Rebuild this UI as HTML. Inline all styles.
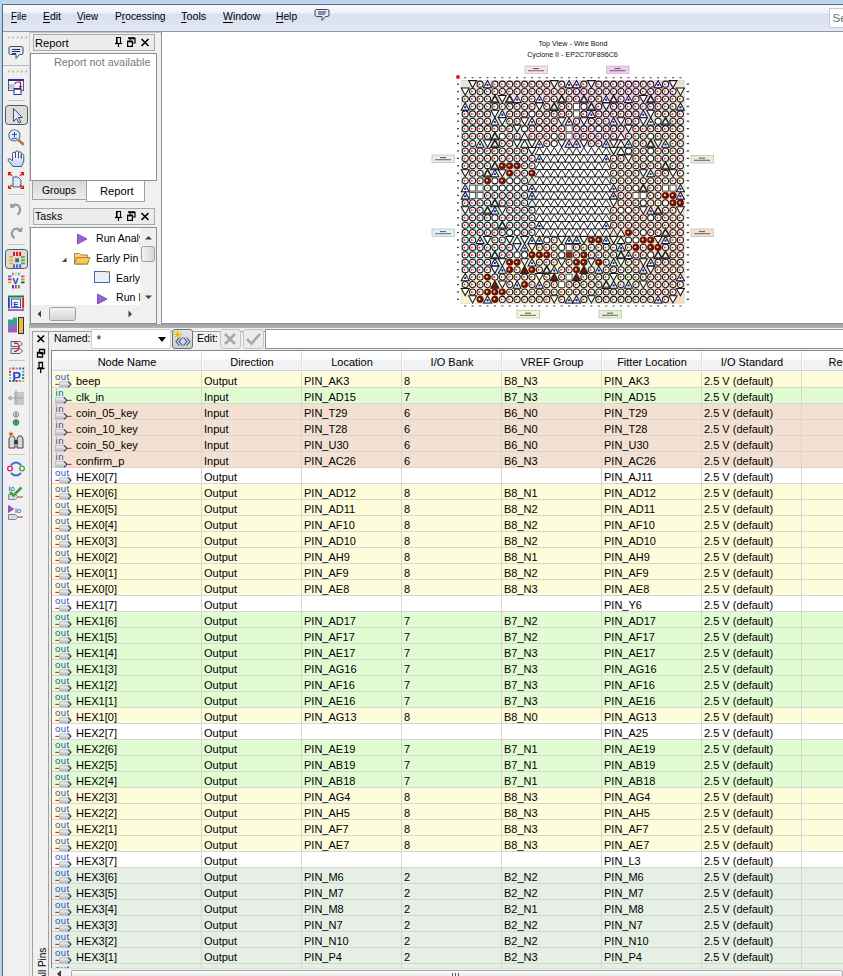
<!DOCTYPE html><html><head><meta charset="utf-8"><style>
*{box-sizing:border-box}
html,body{margin:0;padding:0}
body{width:843px;height:976px;overflow:hidden;position:relative;background:#f0f0f0;font-family:"Liberation Sans",sans-serif;font-size:11px;color:#000}
.a{position:absolute}
.t{position:absolute;white-space:nowrap;line-height:1}
</style></head><body>

<div class="a" style="left:0;top:0;width:843px;height:4px;background:linear-gradient(#b9d1ee,#c6daf1)"></div>
<div class="a" style="left:0;top:0;width:2px;height:976px;background:linear-gradient(90deg,#c3d8f0,#aac6e6)"></div>
<div class="a" style="left:2px;top:4px;width:841px;height:1px;background:#5d6a7a"></div>
<div class="a" style="left:2px;top:4px;width:1px;height:972px;background:#5d6a7a"></div>
<div class="a" style="left:3px;top:5px;width:840px;height:26px;background:linear-gradient(#f6f8fc 0,#eef1f8 8px,#d9e0f0 9px,#dde3f2 18px,#e4e9f5 26px)"></div>
<div class="a" style="left:3px;top:31px;width:840px;height:1px;background:#8e96a2"></div><div class="a" style="left:3px;top:32px;width:840px;height:1px;background:#c0c4cc"></div>
<div class="t" style="left:10.50px;top:10.87px;font-size:11.5px;transform:scaleX(0.8356);transform-origin:0.00px 0;"><u style="text-decoration-thickness:1px;text-underline-offset:2px">F</u>ile</div>
<div class="t" style="left:42.50px;top:10.87px;font-size:11.5px;transform:scaleX(0.9091);transform-origin:0.00px 0;"><u style="text-decoration-thickness:1px;text-underline-offset:2px">E</u>dit</div>
<div class="t" style="left:77.00px;top:10.87px;font-size:11.5px;transform:scaleX(0.8485);transform-origin:0.00px 0;"><u style="text-decoration-thickness:1px;text-underline-offset:2px">V</u>iew</div>
<div class="t" style="left:114.50px;top:10.87px;font-size:11.5px;transform:scaleX(0.8875);transform-origin:0.00px 0;">P<u style="text-decoration-thickness:1px;text-underline-offset:2px">r</u>ocessing</div>
<div class="t" style="left:181.10px;top:10.87px;font-size:11.5px;transform:scaleX(0.9385);transform-origin:0.00px 0;"><u style="text-decoration-thickness:1px;text-underline-offset:2px">T</u>ools</div>
<div class="t" style="left:222.80px;top:10.87px;font-size:11.5px;transform:scaleX(0.9109);transform-origin:0.00px 0;"><u style="text-decoration-thickness:1px;text-underline-offset:2px">W</u>indow</div>
<div class="t" style="left:276.30px;top:10.87px;font-size:11.5px;transform:scaleX(0.8922);transform-origin:0.00px 0;"><u style="text-decoration-thickness:1px;text-underline-offset:2px">H</u>elp</div>
<svg class="a" style="left:312px;top:7px" width="20" height="18" viewBox="312 7 20 18"><path d="M316.5 9.5 h11 a1.5 1.5 0 0 1 1.5 1.5 v4 a1.5 1.5 0 0 1 -1.5 1.5 h-2 l-3.5 4 v-4 h-5.5 a1.5 1.5 0 0 1 -1.5 -1.5 v-4 a1.5 1.5 0 0 1 1.5 -1.5z" fill="#dfe8fb" stroke="#3a4a6a" stroke-width="1"/><path d="M318 12 h8 M318 14 h7" stroke="#253555" stroke-width="1"/></svg>
<div class="a" style="left:829px;top:8px;width:20px;height:20px;background:#fff;border:1px solid #c4c9d4"></div>
<div class="t" style="left:832.50px;top:12.87px;font-size:11.5px;color:#6a6a6a;">Se</div>
<div class="a" style="left:3px;top:32px;width:27px;height:944px;background:#f0f0f0;border-right:1px solid #d0d0d0"></div>
<svg class="a" style="left:0;top:0" width="32" height="560" viewBox="0 0 32 560"><path d="M7.5 38.5 l1.5 -2 h1.2 l-1.5 2z" fill="#a0a0a0"/><path d="M11.8 38.5 l1.5 -2 h1.2 l-1.5 2z" fill="#a0a0a0"/><path d="M16.1 38.5 l1.5 -2 h1.2 l-1.5 2z" fill="#a0a0a0"/><path d="M20.4 38.5 l1.5 -2 h1.2 l-1.5 2z" fill="#a0a0a0"/><path d="M24.7 38.5 l1.5 -2 h1.2 l-1.5 2z" fill="#a0a0a0"/><rect x="3" y="65" width="26" height="1" fill="#b8b8b8"/><path d="M7.5 72.5 l1.5 -2 h1.2 l-1.5 2z" fill="#a0a0a0"/><path d="M11.8 72.5 l1.5 -2 h1.2 l-1.5 2z" fill="#a0a0a0"/><path d="M16.1 72.5 l1.5 -2 h1.2 l-1.5 2z" fill="#a0a0a0"/><path d="M20.4 72.5 l1.5 -2 h1.2 l-1.5 2z" fill="#a0a0a0"/><path d="M24.7 72.5 l1.5 -2 h1.2 l-1.5 2z" fill="#a0a0a0"/><path d="M10.5 46.5 h11 a1.5 1.5 0 0 1 1.5 1.5 v5 a1.5 1.5 0 0 1 -1.5 1.5 h-2 l-3.5 4 v-4 h-5.5 a1.5 1.5 0 0 1 -1.5 -1.5 v-5 a1.5 1.5 0 0 1 1.5 -1.5z" fill="#dfe8fb" stroke="#3a4a6a" stroke-width="1"/><path d="M12 49.5 h8 M12 51.5 h8 M12 53.5 h4" stroke="#253555" stroke-width="1"/><rect x="8.5" y="79.5" width="15" height="11" fill="#f4f6fb" stroke="#4a5a8a" stroke-width="1"/><rect x="8" y="79" width="16" height="2" fill="#1a3aa0"/><rect x="9" y="84" width="6" height="5" fill="#c8c8c8"/><rect x="14" y="88.5" width="7" height="6" fill="#fff" stroke="#1a3aa0" stroke-width="1"/><rect x="14" y="88" width="7" height="1.8" fill="#1a3aa0"/><path d="M15 84 q0 -2 3 -2 h2.5 v5" fill="none" stroke="#d0103a" stroke-width="1.2"/><path d="M18.5 86 h4 l-2 2.5z" fill="#d0103a"/><rect x="8" y="100" width="17" height="1" fill="#c8c8c8"/><rect x="5.5" y="105.5" width="22" height="19" rx="3" fill="#dcdcdc" stroke="#555" stroke-width="1"/><path d="M13.5 108.5 v13 l3 -3 l2.5 4.5 l1.8 -1 l-2.5 -4.5 h4z" fill="#dde6fa" stroke="#3a4a70" stroke-width="1"/><circle cx="14.4" cy="135.4" r="5.6" fill="#e2ecfb" stroke="#5a6c8c" stroke-width="1.1"/><path d="M19 140.5 l4 3.5" stroke="#b87838" stroke-width="2.8" stroke-linecap="round"/><path d="M12 134.4 h5 M14.5 132 v5 M12 138.4 h5" stroke="#2848c0" stroke-width="1"/><defs><linearGradient id="hg" x1="0" y1="0" x2="0" y2="1"><stop offset="0" stop-color="#ffffff"/><stop offset="1" stop-color="#c4d0f2"/></linearGradient></defs><path d="M13 166.5 L8.2 160.5 Q7.6 158.8 9.2 158.6 L12.5 160.6 V153.6 Q12.5 152.2 14 152.2 Q15.5 152.2 15.5 153.6 V158 V152.3 Q15.5 150.9 17 150.9 Q18.5 150.9 18.5 152.3 V158 V153.2 Q18.5 151.8 19.9 151.8 Q21.3 151.8 21.3 153.2 V158.5 V155.4 Q21.3 154.1 22.5 154.1 Q23.8 154.1 23.8 155.4 V161 L21.6 166.5z" fill="url(#hg)" stroke="#3c4c72" stroke-width="0.95"/><path d="M13 177 h5 l3 3 v7 h-8z" fill="#dfe7f8" stroke="#4a5a7a" stroke-width="1"/><path d="M8.5 172.5 l3.5 3.5 M8.5 172.5 h3 M8.5 172.5 v3 M23.5 172.5 l-3.5 3.5 M23.5 172.5 h-3 M23.5 172.5 v3 M8.5 188.5 l3.5 -3.5 M8.5 188.5 h3 M8.5 188.5 v-3 M23.5 188.5 l-3.5 -3.5 M23.5 188.5 h-3 M23.5 188.5 v-3" stroke="#e01010" stroke-width="1.2" fill="none"/><rect x="8" y="194" width="17" height="1" fill="#c8c8c8"/><path d="M12 206 q5 -3 7.5 1 q2 4 -2 8" fill="none" stroke="#9a9a9a" stroke-width="2.2"/><path d="M10 203 l0.5 5.5 l5 -1.5z" fill="#9a9a9a"/><path d="M20 230 q-5 -3 -7.5 1 q-2 4 2 7" fill="none" stroke="#9a9a9a" stroke-width="2.2"/><path d="M22.5 227 l-0.5 5.5 l-5 -1.5z" fill="#9a9a9a"/><rect x="8" y="244" width="17" height="1" fill="#c8c8c8"/><rect x="5.5" y="249.5" width="22" height="19" rx="3" fill="#dcdcdc" stroke="#555" stroke-width="1"/><rect x="15.2" y="258.4" width="3.8" height="3.8" fill="#5a625c"/><rect x="13.00" y="251.8" width="2" height="4.2" fill="#e41818"/><rect x="13.00" y="264.2" width="2" height="4.2" fill="#3c78e0"/><rect x="9.2" y="256.10" width="3.8" height="1.8" fill="#f4a818"/><rect x="21" y="256.10" width="3.8" height="1.8" fill="#48b048"/><rect x="16.05" y="251.8" width="2" height="4.2" fill="#e41818"/><rect x="16.05" y="264.2" width="2" height="4.2" fill="#3c78e0"/><rect x="9.2" y="259.25" width="3.8" height="1.8" fill="#f4a818"/><rect x="21" y="259.25" width="3.8" height="1.8" fill="#48b048"/><rect x="19.10" y="251.8" width="2" height="4.2" fill="#e41818"/><rect x="19.10" y="264.2" width="2" height="4.2" fill="#3c78e0"/><rect x="9.2" y="262.40" width="3.8" height="1.8" fill="#f4a818"/><rect x="21" y="262.40" width="3.8" height="1.8" fill="#48b048"/><text x="12.5" y="284" font-size="9" font-weight="bold" font-family="Liberation Sans" fill="#2030b0">V</text><rect x="12.0" y="272.5" width="1.8" height="3" fill="#c070e0"/><rect x="15.0" y="272.5" width="1.8" height="3" fill="#f0d020"/><rect x="18.0" y="272.5" width="1.8" height="3" fill="#40c0c0"/><rect x="12.0" y="285" width="1.8" height="3.5" fill="#2040c0"/><rect x="15.0" y="285" width="1.8" height="3.5" fill="#c03090"/><rect x="18.0" y="285" width="1.8" height="3.5" fill="#40a040"/><rect x="8" y="275.5" width="3.5" height="1.8" fill="#3070e0"/><rect x="21" y="275.5" width="3.5" height="1.8" fill="#e04090"/><rect x="8" y="278.5" width="3.5" height="1.8" fill="#e02020"/><rect x="21" y="278.5" width="3.5" height="1.8" fill="#b0a020"/><rect x="8" y="281.5" width="3.5" height="1.8" fill="#f0a020"/><rect x="21" y="281.5" width="3.5" height="1.8" fill="#206020"/><g transform="translate(0,1.5)"><rect x="8" y="294" width="16" height="2" fill="#208040"/><rect x="8" y="307.5" width="16" height="2" fill="#b060c0"/><rect x="8" y="296" width="1.8" height="11" fill="#2040c0"/><rect x="22.2" y="296" width="1.8" height="11" fill="#e02020"/><rect x="11.5" y="297.5" width="9" height="8.5" fill="#eef2fb" stroke="#3a50a0" stroke-width="1"/><text x="13.2" y="305" font-size="7.5" font-weight="bold" font-family="Liberation Sans" fill="#2040b0">E</text><path d="M8 318 h5 v-2 h4 v2 v6 h-3 v3 h-6z" fill="#40a090"/><path d="M8 325 h6 v-2 h3 v8 h-9z" fill="#a060c0"/><rect x="18.5" y="316" width="5" height="16" fill="#f0c020" stroke="#203070" stroke-width="1"/></g><path d="M11 341.5 h9 l2.5 2.5 l-2.5 2.5 h-9z M11 348.5 h9 l2.5 2.5 l-2.5 2.5 h-9z" fill="#e4e8f0" stroke="#506080" stroke-width="1"/><path d="M14 343 q6 0 5 4.5 q-1 4 -5 4" fill="none" stroke="#e02030" stroke-width="1.3"/><rect x="8" y="360" width="17" height="1" fill="#c8c8c8"/><text x="12.3" y="381" font-size="13" font-weight="bold" font-family="Liberation Sans" fill="#2a48c8">P</text><rect x="9.0" y="367.5" width="2" height="2" fill="#f0a020"/><rect x="9.0" y="380" width="2" height="2" fill="#3070e0"/><rect x="12.3" y="367.5" width="2" height="2" fill="#e02020"/><rect x="12.3" y="380" width="2" height="2" fill="#208040"/><rect x="15.6" y="367.5" width="2" height="2" fill="#b070e0"/><rect x="15.6" y="380" width="2" height="2" fill="#e02020"/><rect x="18.9" y="367.5" width="2" height="2" fill="#3070e0"/><rect x="18.9" y="380" width="2" height="2" fill="#40a0e0"/><rect x="22.2" y="367.5" width="2" height="2" fill="#208040"/><rect x="22.2" y="380" width="2" height="2" fill="#f0c020"/><rect x="9" y="370.8" width="2" height="2" fill="#e02020"/><rect x="22.2" y="370.8" width="2" height="2" fill="#b070e0"/><rect x="9" y="373.9" width="2" height="2" fill="#40a0e0"/><rect x="22.2" y="373.9" width="2" height="2" fill="#3070e0"/><rect x="9" y="377.0" width="2" height="2" fill="#f0c020"/><rect x="22.2" y="377.0" width="2" height="2" fill="#208040"/><rect x="14" y="392" width="10" height="13" fill="#c8c8c8"/><path d="M8 398 l3 -2 v4z M11 398 h12 M16 390 v14" stroke="#a0a0a0" stroke-width="1" fill="#d8d8d8"/><circle cx="16" cy="414.5" r="2.6" fill="#e8e8e8" stroke="#808080" stroke-width="1"/><path d="M16 413 v3" stroke="#2050c0" stroke-width="1"/><circle cx="16" cy="422.5" r="2.8" fill="#60b060" stroke="#308030" stroke-width="1"/><circle cx="16" cy="422.5" r="1" fill="#1050c0"/><path d="M9 439 l1.5 -3 h3 l1.5 3 v9 h-6z M17 439 l1.5 -3 h3 l1.5 3 v9 h-6z" fill="#d8d8d8" stroke="#404040" stroke-width="1"/><rect x="14" y="440" width="4" height="4" fill="#404040"/><path d="M9 432 l4 4 M13 432 l-4 4 M11 431 v6 M8 434 h6" stroke="#f0c020" stroke-width="1"/><circle cx="11" cy="434" r="1.3" fill="#e0207a"/><rect x="8" y="454" width="17" height="1" fill="#c8c8c8"/><path d="M11 465 q5 -5 10 0 M21 473 q-5 5 -10 0" fill="none" stroke="#3070d0" stroke-width="2"/><circle cx="10" cy="468.5" r="2.3" fill="#fff" stroke="#e0106a" stroke-width="1.3"/><circle cx="22" cy="468.5" r="2.3" fill="#fff" stroke="#40a040" stroke-width="1.3"/><text x="8.5" y="491" font-size="8" font-family="Liberation Sans" fill="#2040c0">io</text><path d="M8.5 494.5 h7 l2.5 2.5 l-2.5 2.5 h-7z" fill="#d8d8d8" stroke="#607090" stroke-width="0.8"/><path d="M18 497 h5" stroke="#e02020" stroke-width="1"/><path d="M10 492 l3.5 3.5 l8 -8" fill="none" stroke="#40a040" stroke-width="2.6"/><path d="M8.5 505.5 v7 l5 -3.5z" fill="#a050d0" stroke="#503070" stroke-width="0.6"/><text x="15" y="513" font-size="8" font-family="Liberation Sans" fill="#2040c0">io</text><path d="M8.5 514.5 h7 l2.5 2.5 l-2.5 2.5 h-7z" fill="#d8d8d8" stroke="#607090" stroke-width="0.8"/><path d="M18 517 h5" stroke="#e02020" stroke-width="1"/></svg>
<div class="a" style="left:33px;top:34px;width:122px;height:17px;background:#ececec;border:1px solid #a9a9a9"></div>
<div class="t" style="left:35.40px;top:38.07px;font-size:11.5px;transform:scaleX(0.9739);transform-origin:0.00px 0;">Report</div>
<svg class="a" style="left:110px;top:33px" width="45" height="18" viewBox="110 33 45 18"><path d="M116.5 37.5 h4 v6 h-4z" fill="none" stroke="#000" stroke-width="1.1"/><path d="M115 43.5 h7" stroke="#000" stroke-width="1.2"/><path d="M118.5 43.5 v3.5" stroke="#000" stroke-width="1.2"/><path d="M117 38 v5" stroke="#000" stroke-width="1.2"/><path d="M130 38.6 h5 v4.4 h-5z" fill="none" stroke="#000" stroke-width="1.2"/><path d="M128 38 h7" stroke="#000" stroke-width="1.6"/><path d="M127.6 41.6 h4.8 v4.8 h-4.8z" fill="#f0f0f0" stroke="#000" stroke-width="1.2"/><path d="M127 41.4 h6" stroke="#000" stroke-width="1.6"/><path d="M141.5 39 L148.5 46 M148.5 39 L141.5 46" stroke="#000" stroke-width="1.6"/></svg>
<div class="a" style="left:30px;top:53px;width:127px;height:128px;background:#fff;border:1px solid #8a9098"></div>
<div class="t" style="left:53.50px;top:57.17px;font-size:11.5px;transform:scaleX(0.9433);transform-origin:0.00px 0;color:#7a7a7a;">Report not available</div>
<div class="a" style="left:32px;top:181px;width:55px;height:19px;background:linear-gradient(#d8d8d8,#ececec);border:1px solid #a0a0a0;border-top:none"></div>
<div class="t" style="left:41.50px;top:185.17px;font-size:11.5px;transform:scaleX(0.9019);transform-origin:0.00px 0;">Groups</div>
<div class="a" style="left:86px;top:181px;width:59px;height:21px;background:#fff;border:1px solid #a0a0a0;border-top:none"></div>
<div class="t" style="left:99.50px;top:185.97px;font-size:11.5px;transform:scaleX(0.9710);transform-origin:0.00px 0;">Report</div>
<div class="a" style="left:33px;top:208px;width:122px;height:17px;background:#ececec;border:1px solid #a9a9a9"></div>
<div class="t" style="left:35.20px;top:210.97px;font-size:11.5px;transform:scaleX(0.9286);transform-origin:0.00px 0;">Tasks</div>
<svg class="a" style="left:110px;top:207px" width="45" height="18" viewBox="110 33 45 18"><path d="M116.5 37.5 h4 v6 h-4z" fill="none" stroke="#000" stroke-width="1.1"/><path d="M115 43.5 h7" stroke="#000" stroke-width="1.2"/><path d="M118.5 43.5 v3.5" stroke="#000" stroke-width="1.2"/><path d="M117 38 v5" stroke="#000" stroke-width="1.2"/><path d="M130 38.6 h5 v4.4 h-5z" fill="none" stroke="#000" stroke-width="1.2"/><path d="M128 38 h7" stroke="#000" stroke-width="1.6"/><path d="M127.6 41.6 h4.8 v4.8 h-4.8z" fill="#f0f0f0" stroke="#000" stroke-width="1.2"/><path d="M127 41.4 h6" stroke="#000" stroke-width="1.6"/><path d="M141.5 39 L148.5 46 M148.5 39 L141.5 46" stroke="#000" stroke-width="1.6"/></svg>
<div class="a" style="left:30px;top:227px;width:127px;height:97px;background:#fff;border:1px solid #8a9098"></div>
<svg class="a" style="left:30px;top:227px" width="127" height="96" viewBox="30 227 127 96"><path d="M77.5 234 v10 l9.5 -5z" fill="#9a60d8" stroke="#5a3a8a" stroke-width="0.7"/><path d="M62 262 l4.5 -4.5 v4.5z" fill="#404040"/><path d="M74.5 253.5 h5 l1.5 1.5 h6.5 v9 h-13z" fill="#f6d878" stroke="#9a7a30" stroke-width="0.9"/><path d="M76.5 257.5 h13.5 l-2.5 6.5 h-13z" fill="#f8c850" stroke="#9a7a30" stroke-width="0.9"/><rect x="94.5" y="271.5" width="15" height="11" fill="#e8eefa" stroke="#4a6aa0" stroke-width="1"/><rect x="106" y="271" width="4" height="1.5" fill="#f08020"/><path d="M97.5 294 v10 l9.5 -5z" fill="#9a60d8" stroke="#5a3a8a" stroke-width="0.7"/><rect x="140" y="228" width="16" height="77" fill="#f0f0f0"/><path d="M145 239.5 l3.5 -3.5 l3.5 3.5z" fill="#404040"/><rect x="141.5" y="246.5" width="13" height="15" rx="2" fill="url(#sbv)" stroke="#a0a0a0" stroke-width="1"/><path d="M145 295.5 l3.5 3.5 l3.5 -3.5z" fill="#404040"/><rect x="31" y="305" width="125" height="18" fill="#f0f0f0"/><path d="M41 310.5 l-3.5 3.5 l3.5 3.5z" fill="#404040"/><rect x="49.5" y="307.5" width="26" height="13" rx="2" fill="url(#sbh)" stroke="#a0a0a0" stroke-width="1"/><path d="M128.5 310.5 l3.5 3.5 l-3.5 3.5z" fill="#404040"/><defs><linearGradient id="sbv" x1="0" y1="0" x2="1" y2="0"><stop offset="0" stop-color="#f4f4f4"/><stop offset="1" stop-color="#d4d4d4"/></linearGradient><linearGradient id="sbh" x1="0" y1="0" x2="0" y2="1"><stop offset="0" stop-color="#f4f4f4"/><stop offset="1" stop-color="#d4d4d4"/></linearGradient></defs></svg>
<div class="a" style="left:31px;top:228px;width:109px;height:77px;overflow:hidden">
<div class="t" style="margin-left:-31px;margin-top:-228px;left:95.50px;top:232.67px;font-size:11.5px;transform:scaleX(0.9200);transform-origin:0.00px 0;">Run Analysis</div>
<div class="t" style="margin-left:-31px;margin-top:-228px;left:95.50px;top:253.17px;font-size:11.5px;transform:scaleX(0.9200);transform-origin:0.00px 0;">Early Pin Planning</div>
<div class="t" style="margin-left:-31px;margin-top:-228px;left:115.50px;top:273.07px;font-size:11.5px;transform:scaleX(0.9200);transform-origin:0.00px 0;">Early Timing Estimate</div>
<div class="t" style="margin-left:-31px;margin-top:-228px;left:115.50px;top:292.47px;font-size:11.5px;transform:scaleX(0.9200);transform-origin:0.00px 0;">Run I/O Assignment</div>
</div>
<div class="a" style="left:161px;top:32px;width:1px;height:292px;background:#8c939c"></div>
<div class="a" style="left:162px;top:32px;width:681px;height:292px;background:#fff;border-bottom:1px solid #8c939c"></div>
<svg class="a" style="left:162px;top:32px" width="681" height="291" viewBox="162 32 681 291">
<text x="573" y="46" font-size="7.2" text-anchor="middle" font-family="Liberation Sans" fill="#111">Top View - Wire Bond</text>
<text x="572.5" y="57" font-size="7.2" text-anchor="middle" font-family="Liberation Sans" fill="#111">Cyclone II - EP2C70F896C6</text>
<rect x="461.5" y="80.5" width="222.6" height="222.6" fill="#fff" stroke="#c8c8c8" stroke-width="0.8"/>
<polygon fill="#e2ebe3" points="461.5,80.5 483.8,80.5 535.7,147.3 535.7,191.8 461.5,191.8"/>
<polygon fill="#f9dfe1" points="483.8,80.5 572.8,80.5 572.8,147.3 535.7,147.3"/>
<polygon fill="#f3ccef" points="572.8,80.5 676.7,80.5 676.7,95.3 609.9,147.3 572.8,147.3"/>
<polygon fill="#e5e4cf" points="676.7,80.5 684.1,80.5 684.1,191.8 609.9,191.8 609.9,147.3 676.7,95.3"/>
<polygon fill="#d6eff0" points="461.5,191.8 535.7,191.8 535.7,236.3 498.6,273.4 461.5,273.4"/>
<polygon fill="#f8f5cd" points="461.5,273.4 498.6,273.4 535.7,236.3 572.8,236.3 572.8,303.1 461.5,303.1"/>
<polygon fill="#ddf2cd" points="572.8,236.3 617.3,236.3 654.4,303.1 572.8,303.1"/>
<polygon fill="#f5dcc8" points="609.9,191.8 684.1,191.8 684.1,303.1 654.4,303.1 617.3,236.3 609.9,236.3"/>
<rect x="535.7" y="147.3" width="74.2" height="89.0" fill="#fff"/>
<polygon points="468.6,80.6 476.6,80.6 472.6,87.8" fill="#fff" stroke="#161616" stroke-width="1.05"/>
<circle cx="480.1" cy="84.2" r="3.05" fill="#fff" stroke="#161616" stroke-width="1.05"/>
<circle cx="479.4" cy="84.2" r="1.0" fill="#e8301c"/><circle cx="480.8" cy="84.2" r="0.8" fill="#f4c0d0"/>
<polygon points="483.5,87.8 491.5,87.8 487.5,80.6" fill="#fff" stroke="#161616" stroke-width="1.05"/>
<circle cx="487.5" cy="85.0" r="1.2" fill="#1530e0"/>
<circle cx="494.9" cy="84.2" r="3.05" fill="#fff" stroke="#161616" stroke-width="1.05"/>
<circle cx="494.2" cy="84.2" r="1.0" fill="#e8301c"/><circle cx="495.6" cy="84.2" r="0.8" fill="#f4c0d0"/>
<circle cx="502.3" cy="84.2" r="3.05" fill="#fff" stroke="#161616" stroke-width="1.05"/>
<circle cx="501.6" cy="84.2" r="1.0" fill="#e8301c"/><circle cx="503.0" cy="84.2" r="0.8" fill="#f4c0d0"/>
<circle cx="509.7" cy="84.2" r="3.05" fill="#fff" stroke="#161616" stroke-width="1.05"/>
<circle cx="509.0" cy="84.2" r="1.0" fill="#e8301c"/><circle cx="510.4" cy="84.2" r="0.8" fill="#f4c0d0"/>
<circle cx="517.1" cy="84.2" r="3.05" fill="#fff" stroke="#161616" stroke-width="1.05"/>
<circle cx="516.4" cy="84.2" r="1.0" fill="#e8301c"/><circle cx="517.9" cy="84.2" r="0.8" fill="#f4c0d0"/>
<circle cx="524.6" cy="84.2" r="3.05" fill="#fff" stroke="#161616" stroke-width="1.05"/>
<circle cx="523.9" cy="84.2" r="1.0" fill="#e8301c"/><circle cx="525.3" cy="84.2" r="0.8" fill="#f4c0d0"/>
<circle cx="532.0" cy="84.2" r="3.05" fill="#fff" stroke="#161616" stroke-width="1.05"/>
<circle cx="531.3" cy="84.2" r="1.0" fill="#e8301c"/><circle cx="532.7" cy="84.2" r="0.8" fill="#f4c0d0"/>
<circle cx="539.4" cy="84.2" r="3.05" fill="#fff" stroke="#161616" stroke-width="1.05"/>
<circle cx="538.7" cy="84.2" r="1.0" fill="#e8301c"/><circle cx="540.1" cy="84.2" r="0.8" fill="#f4c0d0"/>
<circle cx="546.8" cy="84.2" r="3.05" fill="#fff" stroke="#161616" stroke-width="1.05"/>
<circle cx="546.1" cy="84.2" r="1.0" fill="#e8301c"/><circle cx="547.5" cy="84.2" r="0.8" fill="#f4c0d0"/>
<polygon points="550.2,80.6 558.2,80.6 554.2,87.8" fill="#fff" stroke="#161616" stroke-width="1.05"/>
<circle cx="561.7" cy="84.2" r="3.05" fill="#fff" stroke="#161616" stroke-width="1.05"/>
<circle cx="561.0" cy="84.2" r="1.0" fill="#e8301c"/><circle cx="562.4" cy="84.2" r="0.8" fill="#f4c0d0"/>
<polygon points="565.1,87.8 573.1,87.8 569.1,80.6" fill="#fff" stroke="#161616" stroke-width="1.05"/>
<circle cx="569.1" cy="85.0" r="1.2" fill="#1530e0"/>
<polygon points="572.5,87.8 580.5,87.8 576.5,80.6" fill="#fff" stroke="#161616" stroke-width="1.05"/>
<circle cx="576.5" cy="85.0" r="1.2" fill="#1530e0"/>
<circle cx="583.9" cy="84.2" r="3.05" fill="#fff" stroke="#161616" stroke-width="1.05"/>
<circle cx="583.2" cy="84.2" r="1.0" fill="#e8301c"/><circle cx="584.6" cy="84.2" r="0.8" fill="#f4c0d0"/>
<polygon points="587.4,80.6 595.4,80.6 591.4,87.8" fill="#fff" stroke="#161616" stroke-width="1.05"/>
<circle cx="598.8" cy="84.2" r="3.05" fill="#fff" stroke="#161616" stroke-width="1.05"/>
<circle cx="598.1" cy="84.2" r="1.0" fill="#e8301c"/><circle cx="599.5" cy="84.2" r="0.8" fill="#f4c0d0"/>
<circle cx="606.2" cy="84.2" r="3.05" fill="#fff" stroke="#161616" stroke-width="1.05"/>
<circle cx="605.5" cy="84.2" r="1.0" fill="#e8301c"/><circle cx="606.9" cy="84.2" r="0.8" fill="#f4c0d0"/>
<circle cx="613.6" cy="84.2" r="3.05" fill="#fff" stroke="#161616" stroke-width="1.05"/>
<circle cx="612.9" cy="84.2" r="1.0" fill="#e8301c"/><circle cx="614.3" cy="84.2" r="0.8" fill="#f4c0d0"/>
<circle cx="621.0" cy="84.2" r="3.05" fill="#fff" stroke="#161616" stroke-width="1.05"/>
<circle cx="620.3" cy="84.2" r="1.0" fill="#e8301c"/><circle cx="621.7" cy="84.2" r="0.8" fill="#f4c0d0"/>
<circle cx="628.5" cy="84.2" r="3.05" fill="#fff" stroke="#161616" stroke-width="1.05"/>
<circle cx="627.8" cy="84.2" r="1.0" fill="#e8301c"/><circle cx="629.2" cy="84.2" r="0.8" fill="#f4c0d0"/>
<circle cx="635.9" cy="84.2" r="3.05" fill="#fff" stroke="#161616" stroke-width="1.05"/>
<circle cx="635.2" cy="84.2" r="1.0" fill="#e8301c"/><circle cx="636.6" cy="84.2" r="0.8" fill="#f4c0d0"/>
<circle cx="643.3" cy="84.2" r="3.05" fill="#fff" stroke="#161616" stroke-width="1.05"/>
<circle cx="642.6" cy="84.2" r="1.0" fill="#e8301c"/><circle cx="644.0" cy="84.2" r="0.8" fill="#f4c0d0"/>
<circle cx="650.7" cy="84.2" r="3.05" fill="#fff" stroke="#161616" stroke-width="1.05"/>
<circle cx="650.0" cy="84.2" r="1.0" fill="#e8301c"/><circle cx="651.4" cy="84.2" r="0.8" fill="#f4c0d0"/>
<polygon points="654.1,87.8 662.1,87.8 658.1,80.6" fill="#fff" stroke="#161616" stroke-width="1.05"/>
<circle cx="658.1" cy="85.0" r="1.2" fill="#1530e0"/>
<circle cx="665.5" cy="84.2" r="3.05" fill="#fff" stroke="#161616" stroke-width="1.05"/>
<circle cx="664.8" cy="84.2" r="1.0" fill="#e8301c"/><circle cx="666.2" cy="84.2" r="0.8" fill="#f4c0d0"/>
<polygon points="669.0,80.6 677.0,80.6 673.0,87.8" fill="#fff" stroke="#161616" stroke-width="1.05"/>
<polygon points="461.2,88.0 469.2,88.0 465.2,95.2" fill="#fff" stroke="#161616" stroke-width="1.05"/>
<circle cx="472.6" cy="91.6" r="3.05" fill="#fff" stroke="#161616" stroke-width="1.05"/>
<circle cx="471.9" cy="91.6" r="1.0" fill="#e8301c"/><circle cx="473.3" cy="91.6" r="0.8" fill="#f4c0d0"/>
<circle cx="480.1" cy="91.6" r="3.05" fill="#fff" stroke="#161616" stroke-width="1.05"/>
<circle cx="479.4" cy="91.6" r="1.0" fill="#e8301c"/><circle cx="480.8" cy="91.6" r="0.8" fill="#f4c0d0"/>
<circle cx="487.5" cy="91.6" r="3.05" fill="#fff" stroke="#161616" stroke-width="1.05"/>
<circle cx="486.8" cy="91.6" r="1.0" fill="#e8301c"/><circle cx="488.2" cy="91.6" r="0.8" fill="#f4c0d0"/>
<circle cx="494.9" cy="91.6" r="3.05" fill="#fff" stroke="#161616" stroke-width="1.05"/>
<circle cx="494.2" cy="91.6" r="1.0" fill="#e8301c"/><circle cx="495.6" cy="91.6" r="0.8" fill="#f4c0d0"/>
<circle cx="502.3" cy="91.6" r="3.05" fill="#fff" stroke="#161616" stroke-width="1.05"/>
<circle cx="501.6" cy="91.6" r="1.0" fill="#e8301c"/><circle cx="503.0" cy="91.6" r="0.8" fill="#f4c0d0"/>
<circle cx="509.7" cy="91.6" r="3.05" fill="#fff" stroke="#161616" stroke-width="1.05"/>
<circle cx="509.0" cy="91.6" r="1.0" fill="#e8301c"/><circle cx="510.4" cy="91.6" r="0.8" fill="#f4c0d0"/>
<circle cx="517.1" cy="91.6" r="3.05" fill="#fff" stroke="#161616" stroke-width="1.05"/>
<circle cx="516.4" cy="91.6" r="1.0" fill="#e8301c"/><circle cx="517.9" cy="91.6" r="0.8" fill="#f4c0d0"/>
<circle cx="524.6" cy="91.6" r="3.05" fill="#fff" stroke="#161616" stroke-width="1.05"/>
<circle cx="523.9" cy="91.6" r="1.0" fill="#e8301c"/><circle cx="525.3" cy="91.6" r="0.8" fill="#f4c0d0"/>
<circle cx="532.0" cy="91.6" r="3.05" fill="#fff" stroke="#161616" stroke-width="1.05"/>
<circle cx="531.3" cy="91.6" r="1.0" fill="#e8301c"/><circle cx="532.7" cy="91.6" r="0.8" fill="#f4c0d0"/>
<circle cx="539.4" cy="91.6" r="3.05" fill="#fff" stroke="#161616" stroke-width="1.05"/>
<circle cx="538.7" cy="91.6" r="1.0" fill="#e8301c"/><circle cx="540.1" cy="91.6" r="0.8" fill="#f4c0d0"/>
<circle cx="546.8" cy="91.6" r="3.05" fill="#fff" stroke="#161616" stroke-width="1.05"/>
<circle cx="546.1" cy="91.6" r="1.0" fill="#e8301c"/><circle cx="547.5" cy="91.6" r="0.8" fill="#f4c0d0"/>
<circle cx="554.2" cy="91.6" r="3.05" fill="#fff" stroke="#161616" stroke-width="1.05"/>
<circle cx="553.5" cy="91.6" r="1.0" fill="#e8301c"/><circle cx="555.0" cy="91.6" r="0.8" fill="#f4c0d0"/>
<circle cx="561.7" cy="91.6" r="3.05" fill="#fff" stroke="#161616" stroke-width="1.05"/>
<circle cx="561.0" cy="91.6" r="1.0" fill="#e8301c"/><circle cx="562.4" cy="91.6" r="0.8" fill="#f4c0d0"/>
<circle cx="569.1" cy="91.6" r="3.05" fill="#fff" stroke="#161616" stroke-width="1.05"/>
<circle cx="568.4" cy="91.6" r="1.0" fill="#e8301c"/><circle cx="569.8" cy="91.6" r="0.8" fill="#f4c0d0"/>
<circle cx="576.5" cy="91.6" r="3.05" fill="#fff" stroke="#161616" stroke-width="1.05"/>
<circle cx="575.8" cy="91.6" r="1.0" fill="#e8301c"/><circle cx="577.2" cy="91.6" r="0.8" fill="#f4c0d0"/>
<circle cx="583.9" cy="91.6" r="3.05" fill="#fff" stroke="#161616" stroke-width="1.05"/>
<circle cx="583.2" cy="91.6" r="1.0" fill="#e8301c"/><circle cx="584.6" cy="91.6" r="0.8" fill="#f4c0d0"/>
<circle cx="591.4" cy="91.6" r="3.05" fill="#fff" stroke="#161616" stroke-width="1.05"/>
<circle cx="590.6" cy="91.6" r="1.0" fill="#e8301c"/><circle cx="592.1" cy="91.6" r="0.8" fill="#f4c0d0"/>
<circle cx="598.8" cy="91.6" r="3.05" fill="#fff" stroke="#161616" stroke-width="1.05"/>
<circle cx="598.1" cy="91.6" r="1.0" fill="#e8301c"/><circle cx="599.5" cy="91.6" r="0.8" fill="#f4c0d0"/>
<circle cx="606.2" cy="91.6" r="3.05" fill="#fff" stroke="#161616" stroke-width="1.05"/>
<circle cx="605.5" cy="91.6" r="1.0" fill="#e8301c"/><circle cx="606.9" cy="91.6" r="0.8" fill="#f4c0d0"/>
<circle cx="613.6" cy="91.6" r="3.05" fill="#fff" stroke="#161616" stroke-width="1.05"/>
<circle cx="612.9" cy="91.6" r="1.0" fill="#e8301c"/><circle cx="614.3" cy="91.6" r="0.8" fill="#f4c0d0"/>
<circle cx="621.0" cy="91.6" r="3.05" fill="#fff" stroke="#161616" stroke-width="1.05"/>
<circle cx="620.3" cy="91.6" r="1.0" fill="#e8301c"/><circle cx="621.7" cy="91.6" r="0.8" fill="#f4c0d0"/>
<circle cx="628.5" cy="91.6" r="3.05" fill="#fff" stroke="#161616" stroke-width="1.05"/>
<circle cx="627.8" cy="91.6" r="1.0" fill="#e8301c"/><circle cx="629.2" cy="91.6" r="0.8" fill="#f4c0d0"/>
<circle cx="635.9" cy="91.6" r="3.05" fill="#fff" stroke="#161616" stroke-width="1.05"/>
<circle cx="635.2" cy="91.6" r="1.0" fill="#e8301c"/><circle cx="636.6" cy="91.6" r="0.8" fill="#f4c0d0"/>
<circle cx="643.3" cy="91.6" r="3.05" fill="#fff" stroke="#161616" stroke-width="1.05"/>
<circle cx="642.6" cy="91.6" r="1.0" fill="#e8301c"/><circle cx="644.0" cy="91.6" r="0.8" fill="#f4c0d0"/>
<circle cx="650.7" cy="91.6" r="3.05" fill="#fff" stroke="#161616" stroke-width="1.05"/>
<circle cx="650.0" cy="91.6" r="1.0" fill="#e8301c"/><circle cx="651.4" cy="91.6" r="0.8" fill="#f4c0d0"/>
<circle cx="658.1" cy="91.6" r="3.05" fill="#fff" stroke="#161616" stroke-width="1.05"/>
<circle cx="657.4" cy="91.6" r="1.0" fill="#e8301c"/><circle cx="658.8" cy="91.6" r="0.8" fill="#f4c0d0"/>
<circle cx="665.5" cy="91.6" r="3.05" fill="#fff" stroke="#161616" stroke-width="1.05"/>
<circle cx="664.8" cy="91.6" r="1.0" fill="#e8301c"/><circle cx="666.2" cy="91.6" r="0.8" fill="#f4c0d0"/>
<circle cx="673.0" cy="91.6" r="3.05" fill="#fff" stroke="#161616" stroke-width="1.05"/>
<circle cx="672.3" cy="91.6" r="1.0" fill="#e8301c"/><circle cx="673.7" cy="91.6" r="0.8" fill="#f4c0d0"/>
<polygon points="676.4,88.0 684.4,88.0 680.4,95.2" fill="#fff" stroke="#161616" stroke-width="1.05"/>
<circle cx="465.2" cy="99.0" r="3.05" fill="#fff" stroke="#161616" stroke-width="1.05"/>
<circle cx="464.5" cy="99.0" r="1.0" fill="#e8301c"/><circle cx="465.9" cy="99.0" r="0.8" fill="#f4c0d0"/>
<circle cx="472.6" cy="99.0" r="3.05" fill="#fff" stroke="#161616" stroke-width="1.05"/>
<circle cx="471.9" cy="99.0" r="1.0" fill="#e8301c"/><circle cx="473.3" cy="99.0" r="0.8" fill="#f4c0d0"/>
<circle cx="480.1" cy="99.0" r="3.05" fill="#fff" stroke="#161616" stroke-width="1.05"/>
<circle cx="479.4" cy="99.0" r="1.0" fill="#e8301c"/><circle cx="480.8" cy="99.0" r="0.8" fill="#f4c0d0"/>
<circle cx="487.5" cy="99.0" r="3.05" fill="#fff" stroke="#161616" stroke-width="1.05"/>
<circle cx="486.8" cy="99.0" r="1.0" fill="#e8301c"/><circle cx="488.2" cy="99.0" r="0.8" fill="#f4c0d0"/>
<polygon points="490.9,102.6 498.9,102.6 494.9,95.5" fill="#fff" stroke="#222" stroke-width="1.6"/>
<rect x="491.9" y="101.0" width="6" height="1.6" fill="#555"/>
<polygon points="498.3,95.5 506.3,95.5 502.3,102.6" fill="#fff" stroke="#161616" stroke-width="1.05"/>
<polygon points="505.7,102.6 513.7,102.6 509.7,95.5" fill="#fff" stroke="#222" stroke-width="1.6"/>
<rect x="506.7" y="101.0" width="6" height="1.6" fill="#555"/>
<polygon points="513.1,102.6 521.1,102.6 517.1,95.5" fill="#fff" stroke="#161616" stroke-width="1.05"/>
<circle cx="517.1" cy="99.8" r="1.2" fill="#1530e0"/>
<circle cx="524.6" cy="99.0" r="3.05" fill="#fff" stroke="#161616" stroke-width="1.05"/>
<circle cx="523.9" cy="99.0" r="1.0" fill="#e8301c"/><circle cx="525.3" cy="99.0" r="0.8" fill="#f4c0d0"/>
<circle cx="532.0" cy="99.0" r="3.05" fill="#fff" stroke="#161616" stroke-width="1.05"/>
<circle cx="531.3" cy="99.0" r="1.0" fill="#e8301c"/><circle cx="532.7" cy="99.0" r="0.8" fill="#f4c0d0"/>
<polygon points="535.4,102.6 543.4,102.6 539.4,95.5" fill="#fff" stroke="#161616" stroke-width="1.05"/>
<circle cx="539.4" cy="99.8" r="1.2" fill="#1530e0"/>
<circle cx="546.8" cy="99.0" r="3.05" fill="#fff" stroke="#161616" stroke-width="1.05"/>
<circle cx="546.1" cy="99.0" r="1.0" fill="#e8301c"/><circle cx="547.5" cy="99.0" r="0.8" fill="#f4c0d0"/>
<circle cx="554.2" cy="99.0" r="3.05" fill="#fff" stroke="#161616" stroke-width="1.05"/>
<circle cx="553.5" cy="99.0" r="1.0" fill="#e8301c"/><circle cx="555.0" cy="99.0" r="0.8" fill="#f4c0d0"/>
<polygon points="557.7,102.6 565.7,102.6 561.7,95.5" fill="#fff" stroke="#222" stroke-width="1.6"/>
<rect x="558.7" y="101.0" width="6" height="1.6" fill="#555"/>
<circle cx="569.1" cy="99.0" r="3.05" fill="#fff" stroke="#161616" stroke-width="1.05"/>
<circle cx="568.4" cy="99.0" r="1.0" fill="#e8301c"/><circle cx="569.8" cy="99.0" r="0.8" fill="#f4c0d0"/>
<circle cx="576.5" cy="99.0" r="3.05" fill="#fff" stroke="#161616" stroke-width="1.05"/>
<circle cx="575.8" cy="99.0" r="1.0" fill="#e8301c"/><circle cx="577.2" cy="99.0" r="0.8" fill="#f4c0d0"/>
<polygon points="579.9,102.6 587.9,102.6 583.9,95.5" fill="#fff" stroke="#222" stroke-width="1.6"/>
<rect x="580.9" y="101.0" width="6" height="1.6" fill="#555"/>
<circle cx="591.4" cy="99.0" r="3.05" fill="#fff" stroke="#161616" stroke-width="1.05"/>
<circle cx="590.6" cy="99.0" r="1.0" fill="#e8301c"/><circle cx="592.1" cy="99.0" r="0.8" fill="#f4c0d0"/>
<circle cx="598.8" cy="99.0" r="3.05" fill="#fff" stroke="#161616" stroke-width="1.05"/>
<circle cx="598.1" cy="99.0" r="1.0" fill="#e8301c"/><circle cx="599.5" cy="99.0" r="0.8" fill="#f4c0d0"/>
<polygon points="602.2,102.6 610.2,102.6 606.2,95.5" fill="#fff" stroke="#161616" stroke-width="1.05"/>
<circle cx="606.2" cy="99.8" r="1.2" fill="#1530e0"/>
<polygon points="609.6,102.6 617.6,102.6 613.6,95.5" fill="#fff" stroke="#222" stroke-width="1.6"/>
<rect x="610.6" y="101.0" width="6" height="1.6" fill="#555"/>
<circle cx="621.0" cy="99.0" r="3.05" fill="#fff" stroke="#161616" stroke-width="1.05"/>
<circle cx="620.3" cy="99.0" r="1.0" fill="#e8301c"/><circle cx="621.7" cy="99.0" r="0.8" fill="#f4c0d0"/>
<polygon points="624.5,102.6 632.5,102.6 628.5,95.5" fill="#fff" stroke="#161616" stroke-width="1.05"/>
<circle cx="628.5" cy="99.8" r="1.2" fill="#1530e0"/>
<circle cx="635.9" cy="99.0" r="3.05" fill="#fff" stroke="#161616" stroke-width="1.05"/>
<circle cx="635.2" cy="99.0" r="1.0" fill="#e8301c"/><circle cx="636.6" cy="99.0" r="0.8" fill="#f4c0d0"/>
<polygon points="639.3,95.5 647.3,95.5 643.3,102.6" fill="#fff" stroke="#161616" stroke-width="1.05"/>
<polygon points="646.7,102.6 654.7,102.6 650.7,95.5" fill="#fff" stroke="#222" stroke-width="1.6"/>
<rect x="647.7" y="101.0" width="6" height="1.6" fill="#555"/>
<circle cx="658.1" cy="99.0" r="3.05" fill="#fff" stroke="#161616" stroke-width="1.05"/>
<circle cx="657.4" cy="99.0" r="1.0" fill="#e8301c"/><circle cx="658.8" cy="99.0" r="0.8" fill="#f4c0d0"/>
<circle cx="665.5" cy="99.0" r="3.05" fill="#fff" stroke="#161616" stroke-width="1.05"/>
<circle cx="664.8" cy="99.0" r="1.0" fill="#e8301c"/><circle cx="666.2" cy="99.0" r="0.8" fill="#f4c0d0"/>
<circle cx="673.0" cy="99.0" r="3.05" fill="#fff" stroke="#161616" stroke-width="1.05"/>
<circle cx="672.3" cy="99.0" r="1.0" fill="#e8301c"/><circle cx="673.7" cy="99.0" r="0.8" fill="#f4c0d0"/>
<circle cx="680.4" cy="99.0" r="3.05" fill="#fff" stroke="#161616" stroke-width="1.05"/>
<circle cx="679.7" cy="99.0" r="1.0" fill="#e8301c"/><circle cx="681.1" cy="99.0" r="0.8" fill="#f4c0d0"/>
<polygon points="461.2,110.1 469.2,110.1 465.2,102.9" fill="#fff" stroke="#161616" stroke-width="1.05"/>
<circle cx="465.2" cy="107.3" r="1.2" fill="#1530e0"/>
<circle cx="472.6" cy="106.5" r="3.05" fill="#fff" stroke="#161616" stroke-width="1.05"/>
<circle cx="471.9" cy="106.5" r="1.0" fill="#e8301c"/><circle cx="473.3" cy="106.5" r="0.8" fill="#f4c0d0"/>
<circle cx="480.1" cy="106.5" r="3.05" fill="#fff" stroke="#161616" stroke-width="1.05"/>
<circle cx="479.4" cy="106.5" r="1.0" fill="#e8301c"/><circle cx="480.8" cy="106.5" r="0.8" fill="#f4c0d0"/>
<circle cx="487.5" cy="106.5" r="3.05" fill="#fff" stroke="#161616" stroke-width="1.05"/>
<circle cx="486.8" cy="106.5" r="1.0" fill="#e8301c"/><circle cx="488.2" cy="106.5" r="0.8" fill="#f4c0d0"/>
<circle cx="494.9" cy="106.5" r="3.05" fill="#fff" stroke="#161616" stroke-width="1.05"/>
<circle cx="494.2" cy="106.5" r="1.0" fill="#e8301c"/><circle cx="495.6" cy="106.5" r="0.8" fill="#f4c0d0"/>
<circle cx="502.3" cy="106.5" r="3.05" fill="#fff" stroke="#161616" stroke-width="1.05"/>
<circle cx="501.6" cy="106.5" r="1.0" fill="#e8301c"/><circle cx="503.0" cy="106.5" r="0.8" fill="#f4c0d0"/>
<circle cx="509.7" cy="106.5" r="3.05" fill="#fff" stroke="#161616" stroke-width="1.05"/>
<circle cx="509.0" cy="106.5" r="1.0" fill="#e8301c"/><circle cx="510.4" cy="106.5" r="0.8" fill="#f4c0d0"/>
<circle cx="517.1" cy="106.5" r="3.05" fill="#fff" stroke="#161616" stroke-width="1.05"/>
<circle cx="516.4" cy="106.5" r="1.0" fill="#e8301c"/><circle cx="517.9" cy="106.5" r="0.8" fill="#f4c0d0"/>
<circle cx="524.6" cy="106.5" r="3.05" fill="#fff" stroke="#161616" stroke-width="1.05"/>
<circle cx="523.9" cy="106.5" r="1.0" fill="#e8301c"/><circle cx="525.3" cy="106.5" r="0.8" fill="#f4c0d0"/>
<circle cx="532.0" cy="106.5" r="3.05" fill="#fff" stroke="#161616" stroke-width="1.05"/>
<circle cx="531.3" cy="106.5" r="1.0" fill="#e8301c"/><circle cx="532.7" cy="106.5" r="0.8" fill="#f4c0d0"/>
<polygon points="535.4,102.9 543.4,102.9 539.4,110.1" fill="#fff" stroke="#161616" stroke-width="1.05"/>
<circle cx="546.8" cy="106.5" r="3.05" fill="#fff" stroke="#161616" stroke-width="1.05"/>
<circle cx="546.1" cy="106.5" r="1.0" fill="#e8301c"/><circle cx="547.5" cy="106.5" r="0.8" fill="#f4c0d0"/>
<polygon points="550.2,110.1 558.2,110.1 554.2,102.9" fill="#fff" stroke="#222" stroke-width="1.6"/>
<rect x="551.2" y="108.5" width="6" height="1.6" fill="#555"/>
<circle cx="561.7" cy="106.5" r="3.05" fill="#fff" stroke="#161616" stroke-width="1.05"/>
<circle cx="561.0" cy="106.5" r="1.0" fill="#e8301c"/><circle cx="562.4" cy="106.5" r="0.8" fill="#f4c0d0"/>
<circle cx="569.1" cy="106.5" r="3.05" fill="#fff" stroke="#161616" stroke-width="1.05"/>
<circle cx="568.4" cy="106.5" r="1.0" fill="#e8301c"/><circle cx="569.8" cy="106.5" r="0.8" fill="#f4c0d0"/>
<rect x="573.5" y="103.5" width="6" height="6" fill="#fff" stroke="#444" stroke-width="0.9"/>
<circle cx="583.9" cy="106.5" r="3.05" fill="#fff" stroke="#161616" stroke-width="1.05"/>
<polygon points="587.4,110.1 595.4,110.1 591.4,102.9" fill="#fff" stroke="#222" stroke-width="1.6"/>
<rect x="588.4" y="108.5" width="6" height="1.6" fill="#555"/>
<circle cx="598.8" cy="106.5" r="3.05" fill="#fff" stroke="#161616" stroke-width="1.05"/>
<circle cx="598.1" cy="106.5" r="1.0" fill="#e8301c"/><circle cx="599.5" cy="106.5" r="0.8" fill="#f4c0d0"/>
<polygon points="602.2,102.9 610.2,102.9 606.2,110.1" fill="#fff" stroke="#161616" stroke-width="1.05"/>
<circle cx="613.6" cy="106.5" r="3.05" fill="#fff" stroke="#161616" stroke-width="1.05"/>
<circle cx="612.9" cy="106.5" r="1.0" fill="#e8301c"/><circle cx="614.3" cy="106.5" r="0.8" fill="#f4c0d0"/>
<circle cx="621.0" cy="106.5" r="3.05" fill="#fff" stroke="#161616" stroke-width="1.05"/>
<circle cx="620.3" cy="106.5" r="1.0" fill="#e8301c"/><circle cx="621.7" cy="106.5" r="0.8" fill="#f4c0d0"/>
<circle cx="628.5" cy="106.5" r="3.05" fill="#fff" stroke="#161616" stroke-width="1.05"/>
<circle cx="627.8" cy="106.5" r="1.0" fill="#e8301c"/><circle cx="629.2" cy="106.5" r="0.8" fill="#f4c0d0"/>
<circle cx="635.9" cy="106.5" r="3.05" fill="#fff" stroke="#161616" stroke-width="1.05"/>
<circle cx="635.2" cy="106.5" r="1.0" fill="#e8301c"/><circle cx="636.6" cy="106.5" r="0.8" fill="#f4c0d0"/>
<circle cx="643.3" cy="106.5" r="3.05" fill="#fff" stroke="#161616" stroke-width="1.05"/>
<circle cx="642.6" cy="106.5" r="1.0" fill="#e8301c"/><circle cx="644.0" cy="106.5" r="0.8" fill="#f4c0d0"/>
<circle cx="650.7" cy="106.5" r="3.05" fill="#fff" stroke="#161616" stroke-width="1.05"/>
<circle cx="650.0" cy="106.5" r="1.0" fill="#e8301c"/><circle cx="651.4" cy="106.5" r="0.8" fill="#f4c0d0"/>
<circle cx="658.1" cy="106.5" r="3.05" fill="#fff" stroke="#161616" stroke-width="1.05"/>
<circle cx="657.4" cy="106.5" r="1.0" fill="#e8301c"/><circle cx="658.8" cy="106.5" r="0.8" fill="#f4c0d0"/>
<circle cx="665.5" cy="106.5" r="3.05" fill="#fff" stroke="#161616" stroke-width="1.05"/>
<circle cx="664.8" cy="106.5" r="1.0" fill="#e8301c"/><circle cx="666.2" cy="106.5" r="0.8" fill="#f4c0d0"/>
<circle cx="673.0" cy="106.5" r="3.05" fill="#fff" stroke="#161616" stroke-width="1.05"/>
<circle cx="672.3" cy="106.5" r="1.0" fill="#e8301c"/><circle cx="673.7" cy="106.5" r="0.8" fill="#f4c0d0"/>
<polygon points="676.4,110.1 684.4,110.1 680.4,102.9" fill="#fff" stroke="#161616" stroke-width="1.05"/>
<circle cx="680.4" cy="107.3" r="1.2" fill="#1530e0"/>
<circle cx="465.2" cy="113.9" r="3.05" fill="#fff" stroke="#161616" stroke-width="1.05"/>
<circle cx="464.5" cy="113.9" r="1.0" fill="#e8301c"/><circle cx="465.9" cy="113.9" r="0.8" fill="#f4c0d0"/>
<circle cx="472.6" cy="113.9" r="3.05" fill="#fff" stroke="#161616" stroke-width="1.05"/>
<circle cx="471.9" cy="113.9" r="1.0" fill="#e8301c"/><circle cx="473.3" cy="113.9" r="0.8" fill="#f4c0d0"/>
<circle cx="480.1" cy="113.9" r="3.05" fill="#fff" stroke="#161616" stroke-width="1.05"/>
<circle cx="479.4" cy="113.9" r="1.0" fill="#e8301c"/><circle cx="480.8" cy="113.9" r="0.8" fill="#f4c0d0"/>
<circle cx="487.5" cy="113.9" r="3.05" fill="#fff" stroke="#161616" stroke-width="1.05"/>
<circle cx="486.8" cy="113.9" r="1.0" fill="#e8301c"/><circle cx="488.2" cy="113.9" r="0.8" fill="#f4c0d0"/>
<polygon points="490.9,110.3 498.9,110.3 494.9,117.5" fill="#fff" stroke="#161616" stroke-width="1.05"/>
<polygon points="498.3,117.5 506.3,117.5 502.3,110.3" fill="#fff" stroke="#161616" stroke-width="1.05"/>
<circle cx="502.3" cy="114.7" r="1.2" fill="#1530e0"/>
<circle cx="509.7" cy="113.9" r="3.05" fill="#fff" stroke="#161616" stroke-width="1.05"/>
<circle cx="509.0" cy="113.9" r="1.0" fill="#e8301c"/><circle cx="510.4" cy="113.9" r="0.8" fill="#f4c0d0"/>
<circle cx="517.1" cy="113.9" r="3.05" fill="#fff" stroke="#161616" stroke-width="1.05"/>
<circle cx="516.4" cy="113.9" r="1.0" fill="#e8301c"/><circle cx="517.9" cy="113.9" r="0.8" fill="#f4c0d0"/>
<circle cx="524.6" cy="113.9" r="3.05" fill="#fff" stroke="#161616" stroke-width="1.05"/>
<circle cx="523.9" cy="113.9" r="1.0" fill="#e8301c"/><circle cx="525.3" cy="113.9" r="0.8" fill="#f4c0d0"/>
<circle cx="532.0" cy="113.9" r="3.05" fill="#fff" stroke="#161616" stroke-width="1.05"/>
<circle cx="539.4" cy="113.9" r="3.05" fill="#fff" stroke="#161616" stroke-width="1.05"/>
<circle cx="538.7" cy="113.9" r="1.0" fill="#e8301c"/><circle cx="540.1" cy="113.9" r="0.8" fill="#f4c0d0"/>
<circle cx="546.8" cy="113.9" r="3.05" fill="#fff" stroke="#161616" stroke-width="1.05"/>
<circle cx="546.1" cy="113.9" r="1.0" fill="#e8301c"/><circle cx="547.5" cy="113.9" r="0.8" fill="#f4c0d0"/>
<circle cx="554.2" cy="113.9" r="3.05" fill="#fff" stroke="#161616" stroke-width="1.05"/>
<circle cx="553.5" cy="113.9" r="1.0" fill="#e8301c"/><circle cx="555.0" cy="113.9" r="0.8" fill="#f4c0d0"/>
<circle cx="561.7" cy="113.9" r="3.05" fill="#fff" stroke="#161616" stroke-width="1.05"/>
<circle cx="561.0" cy="113.9" r="1.0" fill="#e8301c"/><circle cx="562.4" cy="113.9" r="0.8" fill="#f4c0d0"/>
<circle cx="569.1" cy="113.9" r="3.05" fill="#fff" stroke="#161616" stroke-width="1.05"/>
<circle cx="568.4" cy="113.9" r="1.0" fill="#e8301c"/><circle cx="569.8" cy="113.9" r="0.8" fill="#f4c0d0"/>
<rect x="573.5" y="110.9" width="6" height="6" fill="#fff" stroke="#444" stroke-width="0.9"/>
<circle cx="583.9" cy="113.9" r="3.05" fill="#fff" stroke="#161616" stroke-width="1.05"/>
<circle cx="583.2" cy="113.9" r="1.0" fill="#e8301c"/><circle cx="584.6" cy="113.9" r="0.8" fill="#f4c0d0"/>
<polygon points="587.4,117.5 595.4,117.5 591.4,110.3" fill="#fff" stroke="#161616" stroke-width="1.05"/>
<circle cx="591.4" cy="114.7" r="1.2" fill="#1530e0"/>
<circle cx="598.8" cy="113.9" r="3.05" fill="#fff" stroke="#161616" stroke-width="1.05"/>
<circle cx="598.1" cy="113.9" r="1.0" fill="#e8301c"/><circle cx="599.5" cy="113.9" r="0.8" fill="#f4c0d0"/>
<circle cx="606.2" cy="113.9" r="3.05" fill="#fff" stroke="#161616" stroke-width="1.05"/>
<circle cx="605.5" cy="113.9" r="1.0" fill="#e8301c"/><circle cx="606.9" cy="113.9" r="0.8" fill="#f4c0d0"/>
<circle cx="613.6" cy="113.9" r="3.05" fill="#fff" stroke="#161616" stroke-width="1.05"/>
<circle cx="612.9" cy="113.9" r="1.0" fill="#e8301c"/><circle cx="614.3" cy="113.9" r="0.8" fill="#f4c0d0"/>
<circle cx="621.0" cy="113.9" r="3.05" fill="#fff" stroke="#161616" stroke-width="1.05"/>
<circle cx="620.3" cy="113.9" r="1.0" fill="#e8301c"/><circle cx="621.7" cy="113.9" r="0.8" fill="#f4c0d0"/>
<circle cx="628.5" cy="113.9" r="3.05" fill="#fff" stroke="#161616" stroke-width="1.05"/>
<circle cx="627.8" cy="113.9" r="1.0" fill="#e8301c"/><circle cx="629.2" cy="113.9" r="0.8" fill="#f4c0d0"/>
<circle cx="635.9" cy="113.9" r="3.05" fill="#fff" stroke="#161616" stroke-width="1.05"/>
<circle cx="635.2" cy="113.9" r="1.0" fill="#e8301c"/><circle cx="636.6" cy="113.9" r="0.8" fill="#f4c0d0"/>
<polygon points="639.3,117.5 647.3,117.5 643.3,110.3" fill="#fff" stroke="#161616" stroke-width="1.05"/>
<circle cx="643.3" cy="114.7" r="1.2" fill="#1530e0"/>
<polygon points="646.7,110.3 654.7,110.3 650.7,117.5" fill="#fff" stroke="#161616" stroke-width="1.05"/>
<circle cx="658.1" cy="113.9" r="3.05" fill="#fff" stroke="#161616" stroke-width="1.05"/>
<circle cx="657.4" cy="113.9" r="1.0" fill="#e8301c"/><circle cx="658.8" cy="113.9" r="0.8" fill="#f4c0d0"/>
<circle cx="665.5" cy="113.9" r="3.05" fill="#fff" stroke="#161616" stroke-width="1.05"/>
<circle cx="664.8" cy="113.9" r="1.0" fill="#e8301c"/><circle cx="666.2" cy="113.9" r="0.8" fill="#f4c0d0"/>
<circle cx="673.0" cy="113.9" r="3.05" fill="#fff" stroke="#161616" stroke-width="1.05"/>
<circle cx="672.3" cy="113.9" r="1.0" fill="#e8301c"/><circle cx="673.7" cy="113.9" r="0.8" fill="#f4c0d0"/>
<circle cx="680.4" cy="113.9" r="3.05" fill="#fff" stroke="#161616" stroke-width="1.05"/>
<circle cx="679.7" cy="113.9" r="1.0" fill="#e8301c"/><circle cx="681.1" cy="113.9" r="0.8" fill="#f4c0d0"/>
<circle cx="465.2" cy="121.3" r="3.05" fill="#fff" stroke="#161616" stroke-width="1.05"/>
<circle cx="464.5" cy="121.3" r="1.0" fill="#e8301c"/><circle cx="465.9" cy="121.3" r="0.8" fill="#f4c0d0"/>
<circle cx="472.6" cy="121.3" r="3.05" fill="#fff" stroke="#161616" stroke-width="1.05"/>
<circle cx="471.9" cy="121.3" r="1.0" fill="#e8301c"/><circle cx="473.3" cy="121.3" r="0.8" fill="#f4c0d0"/>
<circle cx="480.1" cy="121.3" r="3.05" fill="#fff" stroke="#161616" stroke-width="1.05"/>
<circle cx="479.4" cy="121.3" r="1.0" fill="#e8301c"/><circle cx="480.8" cy="121.3" r="0.8" fill="#f4c0d0"/>
<circle cx="487.5" cy="121.3" r="3.05" fill="#fff" stroke="#161616" stroke-width="1.05"/>
<circle cx="486.8" cy="121.3" r="1.0" fill="#e8301c"/><circle cx="488.2" cy="121.3" r="0.8" fill="#f4c0d0"/>
<polygon points="490.9,124.9 498.9,124.9 494.9,117.7" fill="#fff" stroke="#161616" stroke-width="1.05"/>
<circle cx="494.9" cy="122.1" r="1.2" fill="#1530e0"/>
<polygon points="498.3,117.7 506.3,117.7 502.3,124.9" fill="#fff" stroke="#161616" stroke-width="1.05"/>
<circle cx="509.7" cy="121.3" r="3.05" fill="#fff" stroke="#161616" stroke-width="1.05"/>
<circle cx="509.0" cy="121.3" r="1.0" fill="#e8301c"/><circle cx="510.4" cy="121.3" r="0.8" fill="#f4c0d0"/>
<circle cx="517.1" cy="121.3" r="3.05" fill="#fff" stroke="#161616" stroke-width="1.05"/>
<circle cx="516.4" cy="121.3" r="1.0" fill="#e8301c"/><circle cx="517.9" cy="121.3" r="0.8" fill="#f4c0d0"/>
<polygon points="520.6,117.7 528.6,117.7 524.6,124.9" fill="#fff" stroke="#161616" stroke-width="1.05"/>
<polygon points="528.0,124.9 536.0,124.9 532.0,117.7" fill="#fff" stroke="#161616" stroke-width="1.05"/>
<circle cx="532.0" cy="122.1" r="1.2" fill="#1530e0"/>
<circle cx="539.4" cy="121.3" r="3.05" fill="#fff" stroke="#161616" stroke-width="1.05"/>
<circle cx="538.7" cy="121.3" r="1.0" fill="#e8301c"/><circle cx="540.1" cy="121.3" r="0.8" fill="#f4c0d0"/>
<circle cx="546.8" cy="121.3" r="3.05" fill="#fff" stroke="#161616" stroke-width="1.05"/>
<circle cx="546.1" cy="121.3" r="1.0" fill="#e8301c"/><circle cx="547.5" cy="121.3" r="0.8" fill="#f4c0d0"/>
<circle cx="554.2" cy="121.3" r="3.05" fill="#fff" stroke="#161616" stroke-width="1.05"/>
<circle cx="553.5" cy="121.3" r="1.0" fill="#e8301c"/><circle cx="555.0" cy="121.3" r="0.8" fill="#f4c0d0"/>
<polygon points="557.7,117.7 565.7,117.7 561.7,124.9" fill="#fff" stroke="#161616" stroke-width="1.05"/>
<polygon points="565.1,124.9 573.1,124.9 569.1,117.7" fill="#fff" stroke="#161616" stroke-width="1.05"/>
<circle cx="569.1" cy="122.1" r="1.2" fill="#1530e0"/>
<circle cx="576.5" cy="121.3" r="3.05" fill="#fff" stroke="#161616" stroke-width="1.05"/>
<circle cx="575.8" cy="121.3" r="1.0" fill="#e8301c"/><circle cx="577.2" cy="121.3" r="0.8" fill="#f4c0d0"/>
<polygon points="579.9,117.7 587.9,117.7 583.9,124.9" fill="#fff" stroke="#161616" stroke-width="1.05"/>
<circle cx="591.4" cy="121.3" r="3.05" fill="#fff" stroke="#161616" stroke-width="1.05"/>
<circle cx="590.6" cy="121.3" r="1.0" fill="#e8301c"/><circle cx="592.1" cy="121.3" r="0.8" fill="#f4c0d0"/>
<circle cx="598.8" cy="121.3" r="3.05" fill="#fff" stroke="#161616" stroke-width="1.05"/>
<circle cx="598.1" cy="121.3" r="1.0" fill="#e8301c"/><circle cx="599.5" cy="121.3" r="0.8" fill="#f4c0d0"/>
<circle cx="606.2" cy="121.3" r="3.05" fill="#fff" stroke="#161616" stroke-width="1.05"/>
<circle cx="605.5" cy="121.3" r="1.0" fill="#e8301c"/><circle cx="606.9" cy="121.3" r="0.8" fill="#f4c0d0"/>
<polygon points="609.6,124.9 617.6,124.9 613.6,117.7" fill="#fff" stroke="#161616" stroke-width="1.05"/>
<circle cx="613.6" cy="122.1" r="1.2" fill="#1530e0"/>
<polygon points="617.0,117.7 625.0,117.7 621.0,124.9" fill="#fff" stroke="#161616" stroke-width="1.05"/>
<circle cx="628.5" cy="121.3" r="3.05" fill="#fff" stroke="#161616" stroke-width="1.05"/>
<circle cx="627.8" cy="121.3" r="1.0" fill="#e8301c"/><circle cx="629.2" cy="121.3" r="0.8" fill="#f4c0d0"/>
<circle cx="635.9" cy="121.3" r="3.05" fill="#fff" stroke="#161616" stroke-width="1.05"/>
<circle cx="635.2" cy="121.3" r="1.0" fill="#e8301c"/><circle cx="636.6" cy="121.3" r="0.8" fill="#f4c0d0"/>
<polygon points="639.3,117.7 647.3,117.7 643.3,124.9" fill="#fff" stroke="#161616" stroke-width="1.05"/>
<polygon points="646.7,124.9 654.7,124.9 650.7,117.7" fill="#fff" stroke="#161616" stroke-width="1.05"/>
<circle cx="650.7" cy="122.1" r="1.2" fill="#1530e0"/>
<circle cx="658.1" cy="121.3" r="3.05" fill="#fff" stroke="#161616" stroke-width="1.05"/>
<polygon points="661.5,124.9 669.5,124.9 665.5,117.7" fill="#fff" stroke="#222" stroke-width="1.6"/>
<rect x="662.5" y="123.3" width="6" height="1.6" fill="#555"/>
<circle cx="673.0" cy="121.3" r="3.05" fill="#fff" stroke="#161616" stroke-width="1.05"/>
<circle cx="672.3" cy="121.3" r="1.0" fill="#e8301c"/><circle cx="673.7" cy="121.3" r="0.8" fill="#f4c0d0"/>
<circle cx="680.4" cy="121.3" r="3.05" fill="#fff" stroke="#161616" stroke-width="1.05"/>
<circle cx="679.7" cy="121.3" r="1.0" fill="#e8301c"/><circle cx="681.1" cy="121.3" r="0.8" fill="#f4c0d0"/>
<circle cx="465.2" cy="128.7" r="3.05" fill="#fff" stroke="#161616" stroke-width="1.05"/>
<circle cx="464.5" cy="128.7" r="1.0" fill="#e8301c"/><circle cx="465.9" cy="128.7" r="0.8" fill="#f4c0d0"/>
<circle cx="472.6" cy="128.7" r="3.05" fill="#fff" stroke="#161616" stroke-width="1.05"/>
<circle cx="471.9" cy="128.7" r="1.0" fill="#e8301c"/><circle cx="473.3" cy="128.7" r="0.8" fill="#f4c0d0"/>
<circle cx="480.1" cy="128.7" r="3.05" fill="#fff" stroke="#161616" stroke-width="1.05"/>
<circle cx="479.4" cy="128.7" r="1.0" fill="#e8301c"/><circle cx="480.8" cy="128.7" r="0.8" fill="#f4c0d0"/>
<circle cx="487.5" cy="128.7" r="3.05" fill="#fff" stroke="#161616" stroke-width="1.05"/>
<circle cx="486.8" cy="128.7" r="1.0" fill="#e8301c"/><circle cx="488.2" cy="128.7" r="0.8" fill="#f4c0d0"/>
<circle cx="494.9" cy="128.7" r="3.05" fill="#fff" stroke="#161616" stroke-width="1.05"/>
<circle cx="494.2" cy="128.7" r="1.0" fill="#e8301c"/><circle cx="495.6" cy="128.7" r="0.8" fill="#f4c0d0"/>
<circle cx="502.3" cy="128.7" r="3.05" fill="#fff" stroke="#161616" stroke-width="1.05"/>
<circle cx="501.6" cy="128.7" r="1.0" fill="#e8301c"/><circle cx="503.0" cy="128.7" r="0.8" fill="#f4c0d0"/>
<circle cx="509.7" cy="128.7" r="3.05" fill="#fff" stroke="#161616" stroke-width="1.05"/>
<circle cx="509.0" cy="128.7" r="1.0" fill="#e8301c"/><circle cx="510.4" cy="128.7" r="0.8" fill="#f4c0d0"/>
<polygon points="513.1,125.1 521.1,125.1 517.1,132.3" fill="#fff" stroke="#161616" stroke-width="1.05"/>
<circle cx="524.6" cy="128.7" r="3.05" fill="#fff" stroke="#161616" stroke-width="1.05"/>
<circle cx="532.0" cy="128.7" r="3.05" fill="#fff" stroke="#161616" stroke-width="1.05"/>
<circle cx="531.3" cy="128.7" r="1.0" fill="#e8301c"/><circle cx="532.7" cy="128.7" r="0.8" fill="#f4c0d0"/>
<circle cx="539.4" cy="128.7" r="3.05" fill="#fff" stroke="#161616" stroke-width="1.05"/>
<circle cx="546.8" cy="128.7" r="3.05" fill="#fff" stroke="#161616" stroke-width="1.05"/>
<circle cx="546.1" cy="128.7" r="1.0" fill="#e8301c"/><circle cx="547.5" cy="128.7" r="0.8" fill="#f4c0d0"/>
<circle cx="554.2" cy="128.7" r="3.05" fill="#fff" stroke="#161616" stroke-width="1.05"/>
<circle cx="553.5" cy="128.7" r="1.0" fill="#e8301c"/><circle cx="555.0" cy="128.7" r="0.8" fill="#f4c0d0"/>
<circle cx="561.7" cy="128.7" r="3.05" fill="#fff" stroke="#161616" stroke-width="1.05"/>
<circle cx="561.0" cy="128.7" r="1.0" fill="#e8301c"/><circle cx="562.4" cy="128.7" r="0.8" fill="#f4c0d0"/>
<rect x="566.1" y="125.7" width="6" height="6" fill="#fff" stroke="#444" stroke-width="0.9"/>
<circle cx="576.5" cy="128.7" r="3.05" fill="#fff" stroke="#161616" stroke-width="1.05"/>
<circle cx="575.8" cy="128.7" r="1.0" fill="#e8301c"/><circle cx="577.2" cy="128.7" r="0.8" fill="#f4c0d0"/>
<circle cx="583.9" cy="128.7" r="3.05" fill="#fff" stroke="#161616" stroke-width="1.05"/>
<circle cx="583.2" cy="128.7" r="1.0" fill="#e8301c"/><circle cx="584.6" cy="128.7" r="0.8" fill="#f4c0d0"/>
<circle cx="591.4" cy="128.7" r="3.05" fill="#fff" stroke="#161616" stroke-width="1.05"/>
<circle cx="590.6" cy="128.7" r="1.0" fill="#e8301c"/><circle cx="592.1" cy="128.7" r="0.8" fill="#f4c0d0"/>
<circle cx="598.8" cy="128.7" r="3.05" fill="#fff" stroke="#161616" stroke-width="1.05"/>
<circle cx="606.2" cy="128.7" r="3.05" fill="#fff" stroke="#161616" stroke-width="1.05"/>
<circle cx="605.5" cy="128.7" r="1.0" fill="#e8301c"/><circle cx="606.9" cy="128.7" r="0.8" fill="#f4c0d0"/>
<circle cx="613.6" cy="128.7" r="3.05" fill="#fff" stroke="#161616" stroke-width="1.05"/>
<circle cx="612.9" cy="128.7" r="1.0" fill="#e8301c"/><circle cx="614.3" cy="128.7" r="0.8" fill="#f4c0d0"/>
<circle cx="621.0" cy="128.7" r="3.05" fill="#fff" stroke="#161616" stroke-width="1.05"/>
<circle cx="620.3" cy="128.7" r="1.0" fill="#e8301c"/><circle cx="621.7" cy="128.7" r="0.8" fill="#f4c0d0"/>
<polygon points="624.5,125.1 632.5,125.1 628.5,132.3" fill="#fff" stroke="#161616" stroke-width="1.05"/>
<circle cx="635.9" cy="128.7" r="3.05" fill="#fff" stroke="#161616" stroke-width="1.05"/>
<circle cx="635.2" cy="128.7" r="1.0" fill="#e8301c"/><circle cx="636.6" cy="128.7" r="0.8" fill="#f4c0d0"/>
<circle cx="643.3" cy="128.7" r="3.05" fill="#fff" stroke="#161616" stroke-width="1.05"/>
<circle cx="642.6" cy="128.7" r="1.0" fill="#e8301c"/><circle cx="644.0" cy="128.7" r="0.8" fill="#f4c0d0"/>
<circle cx="650.7" cy="128.7" r="3.05" fill="#fff" stroke="#161616" stroke-width="1.05"/>
<circle cx="650.0" cy="128.7" r="1.0" fill="#e8301c"/><circle cx="651.4" cy="128.7" r="0.8" fill="#f4c0d0"/>
<circle cx="658.1" cy="128.7" r="3.05" fill="#fff" stroke="#161616" stroke-width="1.05"/>
<circle cx="657.4" cy="128.7" r="1.0" fill="#e8301c"/><circle cx="658.8" cy="128.7" r="0.8" fill="#f4c0d0"/>
<circle cx="665.5" cy="128.7" r="3.05" fill="#fff" stroke="#161616" stroke-width="1.05"/>
<circle cx="664.8" cy="128.7" r="1.0" fill="#e8301c"/><circle cx="666.2" cy="128.7" r="0.8" fill="#f4c0d0"/>
<circle cx="673.0" cy="128.7" r="3.05" fill="#fff" stroke="#161616" stroke-width="1.05"/>
<circle cx="672.3" cy="128.7" r="1.0" fill="#e8301c"/><circle cx="673.7" cy="128.7" r="0.8" fill="#f4c0d0"/>
<circle cx="680.4" cy="128.7" r="3.05" fill="#fff" stroke="#161616" stroke-width="1.05"/>
<circle cx="679.7" cy="128.7" r="1.0" fill="#e8301c"/><circle cx="681.1" cy="128.7" r="0.8" fill="#f4c0d0"/>
<circle cx="465.2" cy="136.2" r="3.05" fill="#fff" stroke="#161616" stroke-width="1.05"/>
<circle cx="464.5" cy="136.2" r="1.0" fill="#e8301c"/><circle cx="465.9" cy="136.2" r="0.8" fill="#f4c0d0"/>
<circle cx="472.6" cy="136.2" r="3.05" fill="#fff" stroke="#161616" stroke-width="1.05"/>
<circle cx="471.9" cy="136.2" r="1.0" fill="#e8301c"/><circle cx="473.3" cy="136.2" r="0.8" fill="#f4c0d0"/>
<circle cx="480.1" cy="136.2" r="3.05" fill="#fff" stroke="#161616" stroke-width="1.05"/>
<circle cx="479.4" cy="136.2" r="1.0" fill="#e8301c"/><circle cx="480.8" cy="136.2" r="0.8" fill="#f4c0d0"/>
<circle cx="487.5" cy="136.2" r="3.05" fill="#fff" stroke="#161616" stroke-width="1.05"/>
<circle cx="486.8" cy="136.2" r="1.0" fill="#e8301c"/><circle cx="488.2" cy="136.2" r="0.8" fill="#f4c0d0"/>
<polygon points="490.9,139.8 498.9,139.8 494.9,132.6" fill="#fff" stroke="#222" stroke-width="1.6"/>
<rect x="491.9" y="138.2" width="6" height="1.6" fill="#555"/>
<circle cx="502.3" cy="136.2" r="3.05" fill="#fff" stroke="#161616" stroke-width="1.05"/>
<circle cx="509.7" cy="136.2" r="3.05" fill="#fff" stroke="#161616" stroke-width="1.05"/>
<circle cx="509.0" cy="136.2" r="1.0" fill="#e8301c"/><circle cx="510.4" cy="136.2" r="0.8" fill="#f4c0d0"/>
<circle cx="517.1" cy="136.2" r="3.05" fill="#fff" stroke="#161616" stroke-width="1.05"/>
<circle cx="516.4" cy="136.2" r="1.0" fill="#e8301c"/><circle cx="517.9" cy="136.2" r="0.8" fill="#f4c0d0"/>
<polygon points="520.6,139.8 528.6,139.8 524.6,132.6" fill="#fff" stroke="#161616" stroke-width="1.05"/>
<circle cx="532.0" cy="136.2" r="3.05" fill="#fff" stroke="#161616" stroke-width="1.05"/>
<circle cx="531.3" cy="136.2" r="1.0" fill="#e8301c"/><circle cx="532.7" cy="136.2" r="0.8" fill="#f4c0d0"/>
<circle cx="539.4" cy="136.2" r="3.05" fill="#fff" stroke="#161616" stroke-width="1.05"/>
<circle cx="538.7" cy="136.2" r="1.0" fill="#e8301c"/><circle cx="540.1" cy="136.2" r="0.8" fill="#f4c0d0"/>
<circle cx="546.8" cy="136.2" r="3.05" fill="#fff" stroke="#161616" stroke-width="1.05"/>
<circle cx="546.1" cy="136.2" r="1.0" fill="#e8301c"/><circle cx="547.5" cy="136.2" r="0.8" fill="#f4c0d0"/>
<circle cx="554.2" cy="136.2" r="3.05" fill="#fff" stroke="#161616" stroke-width="1.05"/>
<circle cx="561.7" cy="136.2" r="3.05" fill="#fff" stroke="#161616" stroke-width="1.05"/>
<circle cx="561.0" cy="136.2" r="1.0" fill="#e8301c"/><circle cx="562.4" cy="136.2" r="0.8" fill="#f4c0d0"/>
<rect x="566.1" y="133.2" width="6" height="6" fill="#fff" stroke="#444" stroke-width="0.9"/>
<circle cx="576.5" cy="136.2" r="3.05" fill="#fff" stroke="#161616" stroke-width="1.05"/>
<circle cx="575.8" cy="136.2" r="1.0" fill="#e8301c"/><circle cx="577.2" cy="136.2" r="0.8" fill="#f4c0d0"/>
<circle cx="583.9" cy="136.2" r="3.05" fill="#fff" stroke="#161616" stroke-width="1.05"/>
<circle cx="583.2" cy="136.2" r="1.0" fill="#e8301c"/><circle cx="584.6" cy="136.2" r="0.8" fill="#f4c0d0"/>
<circle cx="591.4" cy="136.2" r="3.05" fill="#fff" stroke="#161616" stroke-width="1.05"/>
<circle cx="590.6" cy="136.2" r="1.0" fill="#e8301c"/><circle cx="592.1" cy="136.2" r="0.8" fill="#f4c0d0"/>
<circle cx="598.8" cy="136.2" r="3.05" fill="#fff" stroke="#161616" stroke-width="1.05"/>
<circle cx="598.1" cy="136.2" r="1.0" fill="#e8301c"/><circle cx="599.5" cy="136.2" r="0.8" fill="#f4c0d0"/>
<circle cx="606.2" cy="136.2" r="3.05" fill="#fff" stroke="#161616" stroke-width="1.05"/>
<circle cx="605.5" cy="136.2" r="1.0" fill="#e8301c"/><circle cx="606.9" cy="136.2" r="0.8" fill="#f4c0d0"/>
<circle cx="613.6" cy="136.2" r="3.05" fill="#fff" stroke="#161616" stroke-width="1.05"/>
<circle cx="612.9" cy="136.2" r="1.0" fill="#e8301c"/><circle cx="614.3" cy="136.2" r="0.8" fill="#f4c0d0"/>
<polygon points="617.0,139.8 625.0,139.8 621.0,132.6" fill="#fff" stroke="#161616" stroke-width="1.05"/>
<circle cx="628.5" cy="136.2" r="3.05" fill="#fff" stroke="#161616" stroke-width="1.05"/>
<circle cx="627.8" cy="136.2" r="1.0" fill="#e8301c"/><circle cx="629.2" cy="136.2" r="0.8" fill="#f4c0d0"/>
<circle cx="635.9" cy="136.2" r="3.05" fill="#fff" stroke="#161616" stroke-width="1.05"/>
<circle cx="635.2" cy="136.2" r="1.0" fill="#e8301c"/><circle cx="636.6" cy="136.2" r="0.8" fill="#f4c0d0"/>
<circle cx="643.3" cy="136.2" r="3.05" fill="#fff" stroke="#161616" stroke-width="1.05"/>
<circle cx="642.6" cy="136.2" r="1.0" fill="#e8301c"/><circle cx="644.0" cy="136.2" r="0.8" fill="#f4c0d0"/>
<circle cx="650.7" cy="136.2" r="3.05" fill="#fff" stroke="#161616" stroke-width="1.05"/>
<circle cx="658.1" cy="136.2" r="3.05" fill="#fff" stroke="#161616" stroke-width="1.05"/>
<circle cx="657.4" cy="136.2" r="1.0" fill="#e8301c"/><circle cx="658.8" cy="136.2" r="0.8" fill="#f4c0d0"/>
<circle cx="665.5" cy="136.2" r="3.05" fill="#fff" stroke="#161616" stroke-width="1.05"/>
<circle cx="664.8" cy="136.2" r="1.0" fill="#e8301c"/><circle cx="666.2" cy="136.2" r="0.8" fill="#f4c0d0"/>
<circle cx="673.0" cy="136.2" r="3.05" fill="#fff" stroke="#161616" stroke-width="1.05"/>
<circle cx="672.3" cy="136.2" r="1.0" fill="#e8301c"/><circle cx="673.7" cy="136.2" r="0.8" fill="#f4c0d0"/>
<circle cx="680.4" cy="136.2" r="3.05" fill="#fff" stroke="#161616" stroke-width="1.05"/>
<circle cx="679.7" cy="136.2" r="1.0" fill="#e8301c"/><circle cx="681.1" cy="136.2" r="0.8" fill="#f4c0d0"/>
<circle cx="465.2" cy="143.6" r="3.05" fill="#fff" stroke="#161616" stroke-width="1.05"/>
<circle cx="464.5" cy="143.6" r="1.0" fill="#e8301c"/><circle cx="465.9" cy="143.6" r="0.8" fill="#f4c0d0"/>
<circle cx="472.6" cy="143.6" r="3.05" fill="#fff" stroke="#161616" stroke-width="1.05"/>
<circle cx="471.9" cy="143.6" r="1.0" fill="#e8301c"/><circle cx="473.3" cy="143.6" r="0.8" fill="#f4c0d0"/>
<polygon points="476.1,147.2 484.1,147.2 480.1,140.0" fill="#fff" stroke="#161616" stroke-width="1.05"/>
<circle cx="480.1" cy="144.4" r="1.2" fill="#1530e0"/>
<polygon points="483.5,140.0 491.5,140.0 487.5,147.2" fill="#fff" stroke="#161616" stroke-width="1.05"/>
<polygon points="490.9,147.2 498.9,147.2 494.9,140.0" fill="#fff" stroke="#222" stroke-width="1.6"/>
<rect x="491.9" y="145.6" width="6" height="1.6" fill="#555"/>
<circle cx="502.3" cy="143.6" r="3.05" fill="#fff" stroke="#161616" stroke-width="1.05"/>
<circle cx="501.6" cy="143.6" r="1.0" fill="#e8301c"/><circle cx="503.0" cy="143.6" r="0.8" fill="#f4c0d0"/>
<circle cx="509.7" cy="143.6" r="3.05" fill="#fff" stroke="#161616" stroke-width="1.05"/>
<circle cx="509.0" cy="143.6" r="1.0" fill="#e8301c"/><circle cx="510.4" cy="143.6" r="0.8" fill="#f4c0d0"/>
<polygon points="513.1,140.0 521.1,140.0 517.1,147.2" fill="#fff" stroke="#161616" stroke-width="1.05"/>
<polygon points="520.6,147.2 528.6,147.2 524.6,140.0" fill="#fff" stroke="#161616" stroke-width="1.05"/>
<polygon points="528.0,140.0 536.0,140.0 532.0,147.2" fill="#fff" stroke="#161616" stroke-width="1.05"/>
<polygon points="535.4,147.2 543.4,147.2 539.4,140.0" fill="#fff" stroke="#161616" stroke-width="1.05"/>
<circle cx="539.4" cy="144.4" r="1.2" fill="#1530e0"/>
<circle cx="546.8" cy="143.6" r="3.05" fill="#fff" stroke="#161616" stroke-width="1.05"/>
<circle cx="546.1" cy="143.6" r="1.0" fill="#e8301c"/><circle cx="547.5" cy="143.6" r="0.8" fill="#f4c0d0"/>
<circle cx="554.2" cy="143.6" r="3.05" fill="#fff" stroke="#161616" stroke-width="1.05"/>
<polygon points="557.7,140.0 565.7,140.0 561.7,147.2" fill="#fff" stroke="#161616" stroke-width="1.05"/>
<polygon points="565.1,147.2 573.1,147.2 569.1,140.0" fill="#fff" stroke="#161616" stroke-width="1.05"/>
<circle cx="569.1" cy="144.4" r="1.2" fill="#1530e0"/>
<polygon points="572.5,147.2 580.5,147.2 576.5,140.0" fill="#fff" stroke="#161616" stroke-width="1.05"/>
<circle cx="576.5" cy="144.4" r="1.2" fill="#1530e0"/>
<polygon points="579.9,140.0 587.9,140.0 583.9,147.2" fill="#fff" stroke="#161616" stroke-width="1.05"/>
<circle cx="591.4" cy="143.6" r="3.05" fill="#fff" stroke="#161616" stroke-width="1.05"/>
<circle cx="590.6" cy="143.6" r="1.0" fill="#e8301c"/><circle cx="592.1" cy="143.6" r="0.8" fill="#f4c0d0"/>
<circle cx="598.8" cy="143.6" r="3.05" fill="#fff" stroke="#161616" stroke-width="1.05"/>
<circle cx="598.1" cy="143.6" r="1.0" fill="#e8301c"/><circle cx="599.5" cy="143.6" r="0.8" fill="#f4c0d0"/>
<polygon points="602.2,147.2 610.2,147.2 606.2,140.0" fill="#fff" stroke="#161616" stroke-width="1.05"/>
<circle cx="606.2" cy="144.4" r="1.2" fill="#1530e0"/>
<polygon points="609.6,140.0 617.6,140.0 613.6,147.2" fill="#fff" stroke="#161616" stroke-width="1.05"/>
<polygon points="617.0,147.2 625.0,147.2 621.0,140.0" fill="#fff" stroke="#161616" stroke-width="1.05"/>
<polygon points="624.5,147.2 632.5,147.2 628.5,140.0" fill="#fff" stroke="#161616" stroke-width="1.05"/>
<circle cx="628.5" cy="144.4" r="1.2" fill="#1530e0"/>
<circle cx="635.9" cy="143.6" r="3.05" fill="#fff" stroke="#161616" stroke-width="1.05"/>
<circle cx="635.2" cy="143.6" r="1.0" fill="#e8301c"/><circle cx="636.6" cy="143.6" r="0.8" fill="#f4c0d0"/>
<circle cx="643.3" cy="143.6" r="3.05" fill="#fff" stroke="#161616" stroke-width="1.05"/>
<circle cx="642.6" cy="143.6" r="1.0" fill="#e8301c"/><circle cx="644.0" cy="143.6" r="0.8" fill="#f4c0d0"/>
<polygon points="646.7,147.2 654.7,147.2 650.7,140.0" fill="#fff" stroke="#222" stroke-width="1.6"/>
<rect x="647.7" y="145.6" width="6" height="1.6" fill="#555"/>
<polygon points="654.1,140.0 662.1,140.0 658.1,147.2" fill="#fff" stroke="#161616" stroke-width="1.05"/>
<polygon points="661.5,147.2 669.5,147.2 665.5,140.0" fill="#fff" stroke="#161616" stroke-width="1.05"/>
<circle cx="665.5" cy="144.4" r="1.2" fill="#1530e0"/>
<circle cx="673.0" cy="143.6" r="3.05" fill="#fff" stroke="#161616" stroke-width="1.05"/>
<circle cx="672.3" cy="143.6" r="1.0" fill="#e8301c"/><circle cx="673.7" cy="143.6" r="0.8" fill="#f4c0d0"/>
<circle cx="680.4" cy="143.6" r="3.05" fill="#fff" stroke="#161616" stroke-width="1.05"/>
<circle cx="679.7" cy="143.6" r="1.0" fill="#e8301c"/><circle cx="681.1" cy="143.6" r="0.8" fill="#f4c0d0"/>
<circle cx="465.2" cy="151.0" r="3.05" fill="#fff" stroke="#161616" stroke-width="1.05"/>
<circle cx="464.5" cy="151.0" r="1.0" fill="#e8301c"/><circle cx="465.9" cy="151.0" r="0.8" fill="#f4c0d0"/>
<circle cx="472.6" cy="151.0" r="3.05" fill="#fff" stroke="#161616" stroke-width="1.05"/>
<circle cx="471.9" cy="151.0" r="1.0" fill="#e8301c"/><circle cx="473.3" cy="151.0" r="0.8" fill="#f4c0d0"/>
<circle cx="480.1" cy="151.0" r="3.05" fill="#fff" stroke="#161616" stroke-width="1.05"/>
<circle cx="479.4" cy="151.0" r="1.0" fill="#e8301c"/><circle cx="480.8" cy="151.0" r="0.8" fill="#f4c0d0"/>
<circle cx="487.5" cy="151.0" r="3.05" fill="#fff" stroke="#161616" stroke-width="1.05"/>
<circle cx="486.8" cy="151.0" r="1.0" fill="#e8301c"/><circle cx="488.2" cy="151.0" r="0.8" fill="#f4c0d0"/>
<circle cx="494.9" cy="151.0" r="3.05" fill="#fff" stroke="#161616" stroke-width="1.05"/>
<circle cx="494.2" cy="151.0" r="1.0" fill="#e8301c"/><circle cx="495.6" cy="151.0" r="0.8" fill="#f4c0d0"/>
<circle cx="502.3" cy="151.0" r="3.05" fill="#fff" stroke="#161616" stroke-width="1.05"/>
<circle cx="501.6" cy="151.0" r="1.0" fill="#e8301c"/><circle cx="503.0" cy="151.0" r="0.8" fill="#f4c0d0"/>
<circle cx="509.7" cy="151.0" r="3.05" fill="#fff" stroke="#161616" stroke-width="1.05"/>
<circle cx="509.0" cy="151.0" r="1.0" fill="#e8301c"/><circle cx="510.4" cy="151.0" r="0.8" fill="#f4c0d0"/>
<circle cx="517.1" cy="151.0" r="3.05" fill="#fff" stroke="#161616" stroke-width="1.05"/>
<circle cx="516.4" cy="151.0" r="1.0" fill="#e8301c"/><circle cx="517.9" cy="151.0" r="0.8" fill="#f4c0d0"/>
<circle cx="524.6" cy="151.0" r="3.05" fill="#fff" stroke="#161616" stroke-width="1.05"/>
<circle cx="523.9" cy="151.0" r="1.0" fill="#e8301c"/><circle cx="525.3" cy="151.0" r="0.8" fill="#f4c0d0"/>
<polygon points="528.0,147.4 536.0,147.4 532.0,154.6" fill="#fff" stroke="#161616" stroke-width="1.05"/>
<polygon points="535.1,154.7 543.7,154.7 539.4,147.3" fill="none" stroke="#222" stroke-width="1.0"/>
<polygon points="542.5,154.7 551.1,154.7 546.8,147.3" fill="none" stroke="#222" stroke-width="1.0"/>
<polygon points="550.0,154.7 558.5,154.7 554.2,147.3" fill="none" stroke="#222" stroke-width="1.0"/>
<polygon points="557.4,154.7 566.0,154.7 561.7,147.3" fill="none" stroke="#222" stroke-width="1.0"/>
<polygon points="564.8,154.7 573.4,154.7 569.1,147.3" fill="none" stroke="#222" stroke-width="1.0"/>
<polygon points="572.2,154.7 580.8,154.7 576.5,147.3" fill="none" stroke="#222" stroke-width="1.0"/>
<polygon points="579.6,154.7 588.2,154.7 583.9,147.3" fill="none" stroke="#222" stroke-width="1.0"/>
<polygon points="587.1,154.7 595.6,154.7 591.4,147.3" fill="none" stroke="#222" stroke-width="1.0"/>
<polygon points="594.5,154.7 603.1,154.7 598.8,147.3" fill="none" stroke="#222" stroke-width="1.0"/>
<polygon points="601.9,154.7 610.5,154.7 606.2,147.3" fill="none" stroke="#222" stroke-width="1.0"/>
<polygon points="609.6,147.4 617.6,147.4 613.6,154.6" fill="#fff" stroke="#161616" stroke-width="1.05"/>
<polygon points="617.0,154.6 625.0,154.6 621.0,147.4" fill="#fff" stroke="#161616" stroke-width="1.05"/>
<circle cx="628.5" cy="151.0" r="3.05" fill="#fff" stroke="#161616" stroke-width="1.05"/>
<circle cx="635.9" cy="151.0" r="3.05" fill="#fff" stroke="#161616" stroke-width="1.05"/>
<circle cx="635.2" cy="151.0" r="1.0" fill="#e8301c"/><circle cx="636.6" cy="151.0" r="0.8" fill="#f4c0d0"/>
<circle cx="643.3" cy="151.0" r="3.05" fill="#fff" stroke="#161616" stroke-width="1.05"/>
<circle cx="642.6" cy="151.0" r="1.0" fill="#e8301c"/><circle cx="644.0" cy="151.0" r="0.8" fill="#f4c0d0"/>
<circle cx="650.7" cy="151.0" r="3.05" fill="#fff" stroke="#161616" stroke-width="1.05"/>
<circle cx="658.1" cy="151.0" r="3.05" fill="#fff" stroke="#161616" stroke-width="1.05"/>
<circle cx="657.4" cy="151.0" r="1.0" fill="#e8301c"/><circle cx="658.8" cy="151.0" r="0.8" fill="#f4c0d0"/>
<circle cx="665.5" cy="151.0" r="3.05" fill="#fff" stroke="#161616" stroke-width="1.05"/>
<circle cx="664.8" cy="151.0" r="1.0" fill="#e8301c"/><circle cx="666.2" cy="151.0" r="0.8" fill="#f4c0d0"/>
<circle cx="673.0" cy="151.0" r="3.05" fill="#fff" stroke="#161616" stroke-width="1.05"/>
<circle cx="672.3" cy="151.0" r="1.0" fill="#e8301c"/><circle cx="673.7" cy="151.0" r="0.8" fill="#f4c0d0"/>
<circle cx="680.4" cy="151.0" r="3.05" fill="#fff" stroke="#161616" stroke-width="1.05"/>
<circle cx="679.7" cy="151.0" r="1.0" fill="#e8301c"/><circle cx="681.1" cy="151.0" r="0.8" fill="#f4c0d0"/>
<circle cx="465.2" cy="158.4" r="3.05" fill="#fff" stroke="#161616" stroke-width="1.05"/>
<circle cx="464.5" cy="158.4" r="1.0" fill="#e8301c"/><circle cx="465.9" cy="158.4" r="0.8" fill="#f4c0d0"/>
<circle cx="472.6" cy="158.4" r="3.05" fill="#fff" stroke="#161616" stroke-width="1.05"/>
<circle cx="471.9" cy="158.4" r="1.0" fill="#e8301c"/><circle cx="473.3" cy="158.4" r="0.8" fill="#f4c0d0"/>
<circle cx="480.1" cy="158.4" r="3.05" fill="#fff" stroke="#161616" stroke-width="1.05"/>
<circle cx="479.4" cy="158.4" r="1.0" fill="#e8301c"/><circle cx="480.8" cy="158.4" r="0.8" fill="#f4c0d0"/>
<circle cx="487.5" cy="158.4" r="3.05" fill="#fff" stroke="#161616" stroke-width="1.05"/>
<circle cx="486.8" cy="158.4" r="1.0" fill="#e8301c"/><circle cx="488.2" cy="158.4" r="0.8" fill="#f4c0d0"/>
<circle cx="494.9" cy="158.4" r="3.05" fill="#fff" stroke="#161616" stroke-width="1.05"/>
<circle cx="494.2" cy="158.4" r="1.0" fill="#e8301c"/><circle cx="495.6" cy="158.4" r="0.8" fill="#f4c0d0"/>
<circle cx="502.3" cy="158.4" r="3.05" fill="#fff" stroke="#161616" stroke-width="1.05"/>
<circle cx="501.6" cy="158.4" r="1.0" fill="#e8301c"/><circle cx="503.0" cy="158.4" r="0.8" fill="#f4c0d0"/>
<circle cx="509.7" cy="158.4" r="3.05" fill="#fff" stroke="#161616" stroke-width="1.05"/>
<circle cx="509.0" cy="158.4" r="1.0" fill="#e8301c"/><circle cx="510.4" cy="158.4" r="0.8" fill="#f4c0d0"/>
<circle cx="517.1" cy="158.4" r="3.05" fill="#fff" stroke="#161616" stroke-width="1.05"/>
<circle cx="516.4" cy="158.4" r="1.0" fill="#e8301c"/><circle cx="517.9" cy="158.4" r="0.8" fill="#f4c0d0"/>
<circle cx="524.6" cy="158.4" r="3.05" fill="#fff" stroke="#161616" stroke-width="1.05"/>
<circle cx="523.9" cy="158.4" r="1.0" fill="#e8301c"/><circle cx="525.3" cy="158.4" r="0.8" fill="#f4c0d0"/>
<circle cx="532.0" cy="158.4" r="3.05" fill="#fff" stroke="#161616" stroke-width="1.05"/>
<circle cx="531.3" cy="158.4" r="1.0" fill="#e8301c"/><circle cx="532.7" cy="158.4" r="0.8" fill="#f4c0d0"/>
<polygon points="535.4,162.0 543.4,162.0 539.4,154.8" fill="#fff" stroke="#161616" stroke-width="1.05"/>
<circle cx="539.4" cy="159.2" r="1.2" fill="#1530e0"/>
<polygon points="542.5,162.1 551.1,162.1 546.8,154.7" fill="none" stroke="#222" stroke-width="1.0"/>
<polygon points="550.0,162.1 558.5,162.1 554.2,154.7" fill="none" stroke="#222" stroke-width="1.0"/>
<polygon points="557.4,162.1 566.0,162.1 561.7,154.7" fill="none" stroke="#222" stroke-width="1.0"/>
<polygon points="564.8,162.1 573.4,162.1 569.1,154.7" fill="none" stroke="#222" stroke-width="1.0"/>
<polygon points="572.2,162.1 580.8,162.1 576.5,154.7" fill="none" stroke="#222" stroke-width="1.0"/>
<polygon points="579.6,162.1 588.2,162.1 583.9,154.7" fill="none" stroke="#222" stroke-width="1.0"/>
<polygon points="587.1,162.1 595.6,162.1 591.4,154.7" fill="none" stroke="#222" stroke-width="1.0"/>
<polygon points="594.5,162.1 603.1,162.1 598.8,154.7" fill="none" stroke="#222" stroke-width="1.0"/>
<polygon points="602.2,162.0 610.2,162.0 606.2,154.8" fill="#fff" stroke="#161616" stroke-width="1.05"/>
<circle cx="606.2" cy="159.2" r="1.2" fill="#1530e0"/>
<circle cx="613.6" cy="158.4" r="3.05" fill="#fff" stroke="#161616" stroke-width="1.05"/>
<circle cx="612.9" cy="158.4" r="1.0" fill="#e8301c"/><circle cx="614.3" cy="158.4" r="0.8" fill="#f4c0d0"/>
<circle cx="621.0" cy="158.4" r="3.05" fill="#fff" stroke="#161616" stroke-width="1.05"/>
<circle cx="620.3" cy="158.4" r="1.0" fill="#e8301c"/><circle cx="621.7" cy="158.4" r="0.8" fill="#f4c0d0"/>
<polygon points="624.5,154.8 632.5,154.8 628.5,162.0" fill="#fff" stroke="#161616" stroke-width="1.05"/>
<circle cx="635.9" cy="158.4" r="3.05" fill="#fff" stroke="#161616" stroke-width="1.05"/>
<circle cx="635.2" cy="158.4" r="1.0" fill="#e8301c"/><circle cx="636.6" cy="158.4" r="0.8" fill="#f4c0d0"/>
<circle cx="643.3" cy="158.4" r="3.05" fill="#fff" stroke="#161616" stroke-width="1.05"/>
<circle cx="642.6" cy="158.4" r="1.0" fill="#e8301c"/><circle cx="644.0" cy="158.4" r="0.8" fill="#f4c0d0"/>
<circle cx="650.7" cy="158.4" r="3.05" fill="#fff" stroke="#161616" stroke-width="1.05"/>
<circle cx="658.1" cy="158.4" r="3.05" fill="#fff" stroke="#161616" stroke-width="1.05"/>
<circle cx="657.4" cy="158.4" r="1.0" fill="#e8301c"/><circle cx="658.8" cy="158.4" r="0.8" fill="#f4c0d0"/>
<circle cx="665.5" cy="158.4" r="3.05" fill="#fff" stroke="#161616" stroke-width="1.05"/>
<circle cx="664.8" cy="158.4" r="1.0" fill="#e8301c"/><circle cx="666.2" cy="158.4" r="0.8" fill="#f4c0d0"/>
<circle cx="673.0" cy="158.4" r="3.05" fill="#fff" stroke="#161616" stroke-width="1.05"/>
<circle cx="672.3" cy="158.4" r="1.0" fill="#e8301c"/><circle cx="673.7" cy="158.4" r="0.8" fill="#f4c0d0"/>
<circle cx="680.4" cy="158.4" r="3.05" fill="#fff" stroke="#161616" stroke-width="1.05"/>
<circle cx="679.7" cy="158.4" r="1.0" fill="#e8301c"/><circle cx="681.1" cy="158.4" r="0.8" fill="#f4c0d0"/>
<circle cx="465.2" cy="165.8" r="3.05" fill="#fff" stroke="#161616" stroke-width="1.05"/>
<circle cx="464.5" cy="165.8" r="1.0" fill="#e8301c"/><circle cx="465.9" cy="165.8" r="0.8" fill="#f4c0d0"/>
<circle cx="472.6" cy="165.8" r="3.05" fill="#fff" stroke="#161616" stroke-width="1.05"/>
<circle cx="471.9" cy="165.8" r="1.0" fill="#e8301c"/><circle cx="473.3" cy="165.8" r="0.8" fill="#f4c0d0"/>
<circle cx="480.1" cy="165.8" r="3.05" fill="#fff" stroke="#161616" stroke-width="1.05"/>
<circle cx="479.4" cy="165.8" r="1.0" fill="#e8301c"/><circle cx="480.8" cy="165.8" r="0.8" fill="#f4c0d0"/>
<circle cx="487.5" cy="165.8" r="3.05" fill="#fff" stroke="#161616" stroke-width="1.05"/>
<circle cx="486.8" cy="165.8" r="1.0" fill="#e8301c"/><circle cx="488.2" cy="165.8" r="0.8" fill="#f4c0d0"/>
<polygon points="490.9,169.4 498.9,169.4 494.9,162.2" fill="#fff" stroke="#222" stroke-width="1.6"/>
<rect x="491.9" y="167.8" width="6" height="1.6" fill="#555"/>
<circle cx="502.3" cy="165.8" r="3.3" fill="#7a1000" stroke="#3a0800" stroke-width="0.6"/>
<circle cx="501.7" cy="165.5" r="1.1" fill="#f0d0c0"/>
<circle cx="509.7" cy="165.8" r="3.3" fill="#7a1000" stroke="#3a0800" stroke-width="0.6"/>
<circle cx="509.1" cy="165.5" r="1.1" fill="#f0d0c0"/>
<circle cx="517.1" cy="165.8" r="3.3" fill="#7a1000" stroke="#3a0800" stroke-width="0.6"/>
<circle cx="516.5" cy="165.5" r="1.1" fill="#f0d0c0"/>
<circle cx="524.6" cy="165.8" r="3.05" fill="#fff" stroke="#161616" stroke-width="1.05"/>
<circle cx="523.9" cy="165.8" r="1.0" fill="#e8301c"/><circle cx="525.3" cy="165.8" r="0.8" fill="#f4c0d0"/>
<circle cx="532.0" cy="165.8" r="3.05" fill="#fff" stroke="#161616" stroke-width="1.05"/>
<circle cx="531.3" cy="165.8" r="1.0" fill="#e8301c"/><circle cx="532.7" cy="165.8" r="0.8" fill="#f4c0d0"/>
<polygon points="535.1,169.5 543.7,169.5 539.4,162.1" fill="none" stroke="#222" stroke-width="1.0"/>
<polygon points="542.5,169.5 551.1,169.5 546.8,162.1" fill="none" stroke="#222" stroke-width="1.0"/>
<polygon points="550.0,169.5 558.5,169.5 554.2,162.1" fill="none" stroke="#222" stroke-width="1.0"/>
<polygon points="557.4,169.5 566.0,169.5 561.7,162.1" fill="none" stroke="#222" stroke-width="1.0"/>
<polygon points="564.8,169.5 573.4,169.5 569.1,162.1" fill="none" stroke="#222" stroke-width="1.0"/>
<polygon points="572.2,169.5 580.8,169.5 576.5,162.1" fill="none" stroke="#222" stroke-width="1.0"/>
<polygon points="579.6,169.5 588.2,169.5 583.9,162.1" fill="none" stroke="#222" stroke-width="1.0"/>
<polygon points="587.1,169.5 595.6,169.5 591.4,162.1" fill="none" stroke="#222" stroke-width="1.0"/>
<polygon points="594.5,169.5 603.1,169.5 598.8,162.1" fill="none" stroke="#222" stroke-width="1.0"/>
<polygon points="601.9,169.5 610.5,169.5 606.2,162.1" fill="none" stroke="#222" stroke-width="1.0"/>
<circle cx="613.6" cy="165.8" r="3.05" fill="#fff" stroke="#161616" stroke-width="1.05"/>
<circle cx="612.9" cy="165.8" r="1.0" fill="#e8301c"/><circle cx="614.3" cy="165.8" r="0.8" fill="#f4c0d0"/>
<circle cx="621.0" cy="165.8" r="3.05" fill="#fff" stroke="#161616" stroke-width="1.05"/>
<circle cx="620.3" cy="165.8" r="1.0" fill="#e8301c"/><circle cx="621.7" cy="165.8" r="0.8" fill="#f4c0d0"/>
<circle cx="628.5" cy="165.8" r="3.05" fill="#fff" stroke="#161616" stroke-width="1.05"/>
<circle cx="627.8" cy="165.8" r="1.0" fill="#e8301c"/><circle cx="629.2" cy="165.8" r="0.8" fill="#f4c0d0"/>
<circle cx="635.9" cy="165.8" r="3.05" fill="#fff" stroke="#161616" stroke-width="1.05"/>
<circle cx="635.2" cy="165.8" r="1.0" fill="#e8301c"/><circle cx="636.6" cy="165.8" r="0.8" fill="#f4c0d0"/>
<circle cx="643.3" cy="165.8" r="3.05" fill="#fff" stroke="#161616" stroke-width="1.05"/>
<circle cx="642.6" cy="165.8" r="1.0" fill="#e8301c"/><circle cx="644.0" cy="165.8" r="0.8" fill="#f4c0d0"/>
<circle cx="650.7" cy="165.8" r="3.05" fill="#fff" stroke="#161616" stroke-width="1.05"/>
<circle cx="650.0" cy="165.8" r="1.0" fill="#e8301c"/><circle cx="651.4" cy="165.8" r="0.8" fill="#f4c0d0"/>
<circle cx="658.1" cy="165.8" r="3.05" fill="#fff" stroke="#161616" stroke-width="1.05"/>
<circle cx="657.4" cy="165.8" r="1.0" fill="#e8301c"/><circle cx="658.8" cy="165.8" r="0.8" fill="#f4c0d0"/>
<polygon points="661.5,169.4 669.5,169.4 665.5,162.2" fill="#fff" stroke="#222" stroke-width="1.6"/>
<rect x="662.5" y="167.8" width="6" height="1.6" fill="#555"/>
<circle cx="673.0" cy="165.8" r="3.05" fill="#fff" stroke="#161616" stroke-width="1.05"/>
<circle cx="672.3" cy="165.8" r="1.0" fill="#e8301c"/><circle cx="673.7" cy="165.8" r="0.8" fill="#f4c0d0"/>
<circle cx="680.4" cy="165.8" r="3.05" fill="#fff" stroke="#161616" stroke-width="1.05"/>
<circle cx="679.7" cy="165.8" r="1.0" fill="#e8301c"/><circle cx="681.1" cy="165.8" r="0.8" fill="#f4c0d0"/>
<polygon points="461.2,169.7 469.2,169.7 465.2,176.8" fill="#fff" stroke="#161616" stroke-width="1.05"/>
<circle cx="472.6" cy="173.2" r="3.05" fill="#fff" stroke="#161616" stroke-width="1.05"/>
<circle cx="471.9" cy="173.2" r="1.0" fill="#e8301c"/><circle cx="473.3" cy="173.2" r="0.8" fill="#f4c0d0"/>
<circle cx="480.1" cy="173.2" r="3.05" fill="#fff" stroke="#161616" stroke-width="1.05"/>
<circle cx="479.4" cy="173.2" r="1.0" fill="#e8301c"/><circle cx="480.8" cy="173.2" r="0.8" fill="#f4c0d0"/>
<polygon points="483.5,176.8 491.5,176.8 487.5,169.7" fill="#fff" stroke="#222" stroke-width="1.6"/>
<rect x="484.5" y="175.2" width="6" height="1.6" fill="#555"/>
<polygon points="490.9,176.8 498.9,176.8 494.9,169.7" fill="#fff" stroke="#161616" stroke-width="1.05"/>
<circle cx="494.9" cy="174.1" r="1.2" fill="#1530e0"/>
<polygon points="498.3,169.7 506.3,169.7 502.3,176.8" fill="#fff" stroke="#161616" stroke-width="1.05"/>
<circle cx="509.7" cy="173.2" r="3.3" fill="#7a1000" stroke="#3a0800" stroke-width="0.6"/>
<circle cx="509.1" cy="172.9" r="1.1" fill="#f0d0c0"/>
<circle cx="517.1" cy="173.2" r="3.05" fill="#fff" stroke="#161616" stroke-width="1.05"/>
<circle cx="516.4" cy="173.2" r="1.0" fill="#e8301c"/><circle cx="517.9" cy="173.2" r="0.8" fill="#f4c0d0"/>
<circle cx="524.6" cy="173.2" r="3.05" fill="#fff" stroke="#161616" stroke-width="1.05"/>
<circle cx="523.9" cy="173.2" r="1.0" fill="#e8301c"/><circle cx="525.3" cy="173.2" r="0.8" fill="#f4c0d0"/>
<circle cx="532.0" cy="173.2" r="3.3" fill="#7a1000" stroke="#3a0800" stroke-width="0.6"/>
<circle cx="531.4" cy="172.9" r="1.1" fill="#f0d0c0"/>
<polygon points="535.1,176.9 543.7,176.9 539.4,169.6" fill="none" stroke="#222" stroke-width="1.0"/>
<polygon points="542.5,176.9 551.1,176.9 546.8,169.6" fill="none" stroke="#222" stroke-width="1.0"/>
<polygon points="550.0,176.9 558.5,176.9 554.2,169.6" fill="none" stroke="#222" stroke-width="1.0"/>
<polygon points="557.4,176.9 566.0,176.9 561.7,169.6" fill="none" stroke="#222" stroke-width="1.0"/>
<polygon points="564.8,176.9 573.4,176.9 569.1,169.6" fill="none" stroke="#222" stroke-width="1.0"/>
<polygon points="572.2,176.9 580.8,176.9 576.5,169.6" fill="none" stroke="#222" stroke-width="1.0"/>
<polygon points="579.6,176.9 588.2,176.9 583.9,169.6" fill="none" stroke="#222" stroke-width="1.0"/>
<polygon points="587.1,176.9 595.6,176.9 591.4,169.6" fill="none" stroke="#222" stroke-width="1.0"/>
<polygon points="594.5,176.9 603.1,176.9 598.8,169.6" fill="none" stroke="#222" stroke-width="1.0"/>
<polygon points="601.9,176.9 610.5,176.9 606.2,169.6" fill="none" stroke="#222" stroke-width="1.0"/>
<circle cx="613.6" cy="173.2" r="3.05" fill="#fff" stroke="#161616" stroke-width="1.05"/>
<circle cx="612.9" cy="173.2" r="1.0" fill="#e8301c"/><circle cx="614.3" cy="173.2" r="0.8" fill="#f4c0d0"/>
<circle cx="621.0" cy="173.2" r="3.05" fill="#fff" stroke="#161616" stroke-width="1.05"/>
<circle cx="620.3" cy="173.2" r="1.0" fill="#e8301c"/><circle cx="621.7" cy="173.2" r="0.8" fill="#f4c0d0"/>
<circle cx="628.5" cy="173.2" r="3.05" fill="#fff" stroke="#161616" stroke-width="1.05"/>
<circle cx="627.8" cy="173.2" r="1.0" fill="#e8301c"/><circle cx="629.2" cy="173.2" r="0.8" fill="#f4c0d0"/>
<circle cx="635.9" cy="173.2" r="3.05" fill="#fff" stroke="#161616" stroke-width="1.05"/>
<circle cx="635.2" cy="173.2" r="1.0" fill="#e8301c"/><circle cx="636.6" cy="173.2" r="0.8" fill="#f4c0d0"/>
<polygon points="639.3,169.7 647.3,169.7 643.3,176.8" fill="#fff" stroke="#161616" stroke-width="1.05"/>
<polygon points="646.7,176.8 654.7,176.8 650.7,169.7" fill="#fff" stroke="#161616" stroke-width="1.05"/>
<circle cx="650.7" cy="174.1" r="1.2" fill="#1530e0"/>
<circle cx="658.1" cy="173.2" r="3.05" fill="#fff" stroke="#161616" stroke-width="1.05"/>
<circle cx="657.4" cy="173.2" r="1.0" fill="#e8301c"/><circle cx="658.8" cy="173.2" r="0.8" fill="#f4c0d0"/>
<circle cx="665.5" cy="173.2" r="3.05" fill="#fff" stroke="#161616" stroke-width="1.05"/>
<circle cx="664.8" cy="173.2" r="1.0" fill="#e8301c"/><circle cx="666.2" cy="173.2" r="0.8" fill="#f4c0d0"/>
<polygon points="669.0,169.7 677.0,169.7 673.0,176.8" fill="#fff" stroke="#161616" stroke-width="1.05"/>
<circle cx="680.4" cy="173.2" r="3.05" fill="#fff" stroke="#161616" stroke-width="1.05"/>
<circle cx="679.7" cy="173.2" r="1.0" fill="#e8301c"/><circle cx="681.1" cy="173.2" r="0.8" fill="#f4c0d0"/>
<circle cx="465.2" cy="180.7" r="3.05" fill="#fff" stroke="#161616" stroke-width="1.05"/>
<circle cx="464.5" cy="180.7" r="1.0" fill="#e8301c"/><circle cx="465.9" cy="180.7" r="0.8" fill="#f4c0d0"/>
<circle cx="472.6" cy="180.7" r="3.05" fill="#fff" stroke="#161616" stroke-width="1.05"/>
<circle cx="471.9" cy="180.7" r="1.0" fill="#e8301c"/><circle cx="473.3" cy="180.7" r="0.8" fill="#f4c0d0"/>
<circle cx="480.1" cy="180.7" r="3.05" fill="#fff" stroke="#161616" stroke-width="1.05"/>
<circle cx="479.4" cy="180.7" r="1.0" fill="#e8301c"/><circle cx="480.8" cy="180.7" r="0.8" fill="#f4c0d0"/>
<circle cx="487.5" cy="180.7" r="3.3" fill="#7a1000" stroke="#3a0800" stroke-width="0.6"/>
<circle cx="486.9" cy="180.4" r="1.1" fill="#f0d0c0"/>
<circle cx="494.9" cy="180.7" r="3.05" fill="#fff" stroke="#161616" stroke-width="1.05"/>
<circle cx="502.3" cy="180.7" r="3.3" fill="#7a1000" stroke="#3a0800" stroke-width="0.6"/>
<circle cx="501.7" cy="180.4" r="1.1" fill="#f0d0c0"/>
<circle cx="509.7" cy="180.7" r="3.05" fill="#fff" stroke="#161616" stroke-width="1.05"/>
<circle cx="517.1" cy="180.7" r="3.05" fill="#fff" stroke="#161616" stroke-width="1.05"/>
<circle cx="524.6" cy="180.7" r="3.05" fill="#fff" stroke="#161616" stroke-width="1.05"/>
<circle cx="523.9" cy="180.7" r="1.0" fill="#e8301c"/><circle cx="525.3" cy="180.7" r="0.8" fill="#f4c0d0"/>
<polygon points="527.7,184.4 536.3,184.4 532.0,177.0" fill="none" stroke="#222" stroke-width="1.0"/>
<polygon points="535.1,184.4 543.7,184.4 539.4,177.0" fill="none" stroke="#222" stroke-width="1.0"/>
<polygon points="542.5,184.4 551.1,184.4 546.8,177.0" fill="none" stroke="#222" stroke-width="1.0"/>
<polygon points="550.0,184.4 558.5,184.4 554.2,177.0" fill="none" stroke="#222" stroke-width="1.0"/>
<polygon points="557.4,184.4 566.0,184.4 561.7,177.0" fill="none" stroke="#222" stroke-width="1.0"/>
<polygon points="564.8,184.4 573.4,184.4 569.1,177.0" fill="none" stroke="#222" stroke-width="1.0"/>
<polygon points="572.2,184.4 580.8,184.4 576.5,177.0" fill="none" stroke="#222" stroke-width="1.0"/>
<polygon points="579.6,184.4 588.2,184.4 583.9,177.0" fill="none" stroke="#222" stroke-width="1.0"/>
<polygon points="587.1,184.4 595.6,184.4 591.4,177.0" fill="none" stroke="#222" stroke-width="1.0"/>
<polygon points="594.5,184.4 603.1,184.4 598.8,177.0" fill="none" stroke="#222" stroke-width="1.0"/>
<polygon points="601.9,184.4 610.5,184.4 606.2,177.0" fill="none" stroke="#222" stroke-width="1.0"/>
<circle cx="613.6" cy="180.7" r="3.05" fill="#fff" stroke="#161616" stroke-width="1.05"/>
<circle cx="612.9" cy="180.7" r="1.0" fill="#e8301c"/><circle cx="614.3" cy="180.7" r="0.8" fill="#f4c0d0"/>
<circle cx="621.0" cy="180.7" r="3.05" fill="#fff" stroke="#161616" stroke-width="1.05"/>
<circle cx="620.3" cy="180.7" r="1.0" fill="#e8301c"/><circle cx="621.7" cy="180.7" r="0.8" fill="#f4c0d0"/>
<circle cx="628.5" cy="180.7" r="3.05" fill="#fff" stroke="#161616" stroke-width="1.05"/>
<circle cx="627.8" cy="180.7" r="1.0" fill="#e8301c"/><circle cx="629.2" cy="180.7" r="0.8" fill="#f4c0d0"/>
<circle cx="635.9" cy="180.7" r="3.05" fill="#fff" stroke="#161616" stroke-width="1.05"/>
<circle cx="635.2" cy="180.7" r="1.0" fill="#e8301c"/><circle cx="636.6" cy="180.7" r="0.8" fill="#f4c0d0"/>
<circle cx="643.3" cy="180.7" r="3.05" fill="#fff" stroke="#161616" stroke-width="1.05"/>
<circle cx="642.6" cy="180.7" r="1.0" fill="#e8301c"/><circle cx="644.0" cy="180.7" r="0.8" fill="#f4c0d0"/>
<circle cx="650.7" cy="180.7" r="3.05" fill="#fff" stroke="#161616" stroke-width="1.05"/>
<circle cx="650.0" cy="180.7" r="1.0" fill="#e8301c"/><circle cx="651.4" cy="180.7" r="0.8" fill="#f4c0d0"/>
<circle cx="658.1" cy="180.7" r="3.05" fill="#fff" stroke="#161616" stroke-width="1.05"/>
<circle cx="657.4" cy="180.7" r="1.0" fill="#e8301c"/><circle cx="658.8" cy="180.7" r="0.8" fill="#f4c0d0"/>
<circle cx="665.5" cy="180.7" r="3.05" fill="#fff" stroke="#161616" stroke-width="1.05"/>
<circle cx="664.8" cy="180.7" r="1.0" fill="#e8301c"/><circle cx="666.2" cy="180.7" r="0.8" fill="#f4c0d0"/>
<circle cx="673.0" cy="180.7" r="3.05" fill="#fff" stroke="#161616" stroke-width="1.05"/>
<circle cx="672.3" cy="180.7" r="1.0" fill="#e8301c"/><circle cx="673.7" cy="180.7" r="0.8" fill="#f4c0d0"/>
<circle cx="680.4" cy="180.7" r="3.05" fill="#fff" stroke="#161616" stroke-width="1.05"/>
<circle cx="679.7" cy="180.7" r="1.0" fill="#e8301c"/><circle cx="681.1" cy="180.7" r="0.8" fill="#f4c0d0"/>
<polygon points="461.2,191.7 469.2,191.7 465.2,184.5" fill="#fff" stroke="#161616" stroke-width="1.05"/>
<circle cx="465.2" cy="188.9" r="1.2" fill="#1530e0"/>
<rect x="469.6" y="185.1" width="6" height="6" fill="#fff" stroke="#444" stroke-width="0.9"/>
<rect x="477.1" y="185.1" width="6" height="6" fill="#fff" stroke="#444" stroke-width="0.9"/>
<circle cx="487.5" cy="188.1" r="3.05" fill="#fff" stroke="#161616" stroke-width="1.05"/>
<circle cx="487.5" cy="188.1" r="1.0" fill="#e0b000"/>
<circle cx="494.9" cy="188.1" r="3.05" fill="#fff" stroke="#161616" stroke-width="1.05"/>
<circle cx="502.3" cy="188.1" r="3.05" fill="#fff" stroke="#161616" stroke-width="1.05"/>
<circle cx="509.7" cy="188.1" r="3.05" fill="#fff" stroke="#161616" stroke-width="1.05"/>
<circle cx="517.1" cy="188.1" r="3.05" fill="#fff" stroke="#161616" stroke-width="1.05"/>
<circle cx="524.6" cy="188.1" r="3.05" fill="#fff" stroke="#161616" stroke-width="1.05"/>
<polygon points="528.0,191.7 536.0,191.7 532.0,184.5" fill="#fff" stroke="#161616" stroke-width="1.05"/>
<circle cx="532.0" cy="188.9" r="1.2" fill="#1530e0"/>
<polygon points="535.1,191.8 543.7,191.8 539.4,184.4" fill="none" stroke="#222" stroke-width="1.0"/>
<polygon points="542.5,191.8 551.1,191.8 546.8,184.4" fill="none" stroke="#222" stroke-width="1.0"/>
<polygon points="550.0,191.8 558.5,191.8 554.2,184.4" fill="none" stroke="#222" stroke-width="1.0"/>
<polygon points="557.4,191.8 566.0,191.8 561.7,184.4" fill="none" stroke="#222" stroke-width="1.0"/>
<polygon points="564.8,191.8 573.4,191.8 569.1,184.4" fill="none" stroke="#222" stroke-width="1.0"/>
<polygon points="572.2,191.8 580.8,191.8 576.5,184.4" fill="none" stroke="#222" stroke-width="1.0"/>
<polygon points="579.6,191.8 588.2,191.8 583.9,184.4" fill="none" stroke="#222" stroke-width="1.0"/>
<polygon points="587.1,191.8 595.6,191.8 591.4,184.4" fill="none" stroke="#222" stroke-width="1.0"/>
<polygon points="594.5,191.8 603.1,191.8 598.8,184.4" fill="none" stroke="#222" stroke-width="1.0"/>
<polygon points="601.9,191.8 610.5,191.8 606.2,184.4" fill="none" stroke="#222" stroke-width="1.0"/>
<polygon points="609.6,191.7 617.6,191.7 613.6,184.5" fill="#fff" stroke="#161616" stroke-width="1.05"/>
<circle cx="613.6" cy="188.9" r="1.2" fill="#1530e0"/>
<circle cx="621.0" cy="188.1" r="3.05" fill="#fff" stroke="#161616" stroke-width="1.05"/>
<circle cx="620.3" cy="188.1" r="1.0" fill="#e8301c"/><circle cx="621.7" cy="188.1" r="0.8" fill="#f4c0d0"/>
<circle cx="628.5" cy="188.1" r="3.05" fill="#fff" stroke="#161616" stroke-width="1.05"/>
<circle cx="627.8" cy="188.1" r="1.0" fill="#e8301c"/><circle cx="629.2" cy="188.1" r="0.8" fill="#f4c0d0"/>
<circle cx="635.9" cy="188.1" r="3.05" fill="#fff" stroke="#161616" stroke-width="1.05"/>
<polygon points="639.3,191.7 647.3,191.7 643.3,184.5" fill="#fff" stroke="#222" stroke-width="1.6"/>
<rect x="640.3" y="190.1" width="6" height="1.6" fill="#555"/>
<circle cx="650.7" cy="188.1" r="3.05" fill="#fff" stroke="#161616" stroke-width="1.05"/>
<circle cx="650.0" cy="188.1" r="1.0" fill="#e8301c"/><circle cx="651.4" cy="188.1" r="0.8" fill="#f4c0d0"/>
<circle cx="658.1" cy="188.1" r="3.05" fill="#fff" stroke="#161616" stroke-width="1.05"/>
<circle cx="657.4" cy="188.1" r="1.0" fill="#e8301c"/><circle cx="658.8" cy="188.1" r="0.8" fill="#f4c0d0"/>
<rect x="662.5" y="185.1" width="6" height="6" fill="#fff" stroke="#444" stroke-width="0.9"/>
<rect x="670.0" y="185.1" width="6" height="6" fill="#fff" stroke="#444" stroke-width="0.9"/>
<polygon points="676.4,191.7 684.4,191.7 680.4,184.5" fill="#fff" stroke="#161616" stroke-width="1.05"/>
<circle cx="680.4" cy="188.9" r="1.2" fill="#1530e0"/>
<polygon points="461.2,199.1 469.2,199.1 465.2,191.9" fill="#fff" stroke="#161616" stroke-width="1.05"/>
<circle cx="465.2" cy="196.3" r="1.2" fill="#1530e0"/>
<rect x="469.6" y="192.5" width="6" height="6" fill="#fff" stroke="#444" stroke-width="0.9"/>
<rect x="477.1" y="192.5" width="6" height="6" fill="#fff" stroke="#444" stroke-width="0.9"/>
<circle cx="487.5" cy="195.5" r="3.05" fill="#fff" stroke="#161616" stroke-width="1.05"/>
<circle cx="486.8" cy="195.5" r="1.0" fill="#e8301c"/><circle cx="488.2" cy="195.5" r="0.8" fill="#f4c0d0"/>
<circle cx="494.9" cy="195.5" r="3.05" fill="#fff" stroke="#161616" stroke-width="1.05"/>
<circle cx="494.2" cy="195.5" r="1.0" fill="#e8301c"/><circle cx="495.6" cy="195.5" r="0.8" fill="#f4c0d0"/>
<circle cx="502.3" cy="195.5" r="3.05" fill="#fff" stroke="#161616" stroke-width="1.05"/>
<circle cx="501.6" cy="195.5" r="1.0" fill="#e8301c"/><circle cx="503.0" cy="195.5" r="0.8" fill="#f4c0d0"/>
<circle cx="509.7" cy="195.5" r="3.05" fill="#fff" stroke="#161616" stroke-width="1.05"/>
<circle cx="509.0" cy="195.5" r="1.0" fill="#e8301c"/><circle cx="510.4" cy="195.5" r="0.8" fill="#f4c0d0"/>
<circle cx="517.1" cy="195.5" r="3.05" fill="#fff" stroke="#161616" stroke-width="1.05"/>
<circle cx="516.4" cy="195.5" r="1.0" fill="#e8301c"/><circle cx="517.9" cy="195.5" r="0.8" fill="#f4c0d0"/>
<circle cx="524.6" cy="195.5" r="3.05" fill="#fff" stroke="#161616" stroke-width="1.05"/>
<circle cx="523.9" cy="195.5" r="1.0" fill="#e8301c"/><circle cx="525.3" cy="195.5" r="0.8" fill="#f4c0d0"/>
<polygon points="528.0,199.1 536.0,199.1 532.0,191.9" fill="#fff" stroke="#161616" stroke-width="1.05"/>
<circle cx="532.0" cy="196.3" r="1.2" fill="#1530e0"/>
<polygon points="535.1,199.2 543.7,199.2 539.4,191.8" fill="none" stroke="#222" stroke-width="1.0"/>
<polygon points="542.5,199.2 551.1,199.2 546.8,191.8" fill="none" stroke="#222" stroke-width="1.0"/>
<polygon points="550.0,199.2 558.5,199.2 554.2,191.8" fill="none" stroke="#222" stroke-width="1.0"/>
<polygon points="557.4,199.2 566.0,199.2 561.7,191.8" fill="none" stroke="#222" stroke-width="1.0"/>
<polygon points="564.8,199.2 573.4,199.2 569.1,191.8" fill="none" stroke="#222" stroke-width="1.0"/>
<polygon points="572.2,199.2 580.8,199.2 576.5,191.8" fill="none" stroke="#222" stroke-width="1.0"/>
<polygon points="579.6,199.2 588.2,199.2 583.9,191.8" fill="none" stroke="#222" stroke-width="1.0"/>
<polygon points="587.1,199.2 595.6,199.2 591.4,191.8" fill="none" stroke="#222" stroke-width="1.0"/>
<polygon points="594.5,199.2 603.1,199.2 598.8,191.8" fill="none" stroke="#222" stroke-width="1.0"/>
<polygon points="601.9,199.2 610.5,199.2 606.2,191.8" fill="none" stroke="#222" stroke-width="1.0"/>
<polygon points="609.6,199.1 617.6,199.1 613.6,191.9" fill="#fff" stroke="#161616" stroke-width="1.05"/>
<circle cx="613.6" cy="196.3" r="1.2" fill="#1530e0"/>
<circle cx="621.0" cy="195.5" r="3.05" fill="#fff" stroke="#161616" stroke-width="1.05"/>
<circle cx="620.3" cy="195.5" r="1.0" fill="#e8301c"/><circle cx="621.7" cy="195.5" r="0.8" fill="#f4c0d0"/>
<circle cx="628.5" cy="195.5" r="3.05" fill="#fff" stroke="#161616" stroke-width="1.05"/>
<circle cx="627.8" cy="195.5" r="1.0" fill="#e8301c"/><circle cx="629.2" cy="195.5" r="0.8" fill="#f4c0d0"/>
<rect x="632.9" y="192.5" width="6" height="6" fill="#fff" stroke="#444" stroke-width="0.9"/>
<rect x="640.3" y="192.5" width="6" height="6" fill="#fff" stroke="#444" stroke-width="0.9"/>
<circle cx="650.7" cy="195.5" r="3.05" fill="#fff" stroke="#161616" stroke-width="1.05"/>
<circle cx="650.0" cy="195.5" r="1.0" fill="#e8301c"/><circle cx="651.4" cy="195.5" r="0.8" fill="#f4c0d0"/>
<circle cx="658.1" cy="195.5" r="3.05" fill="#fff" stroke="#161616" stroke-width="1.05"/>
<circle cx="657.4" cy="195.5" r="1.0" fill="#e8301c"/><circle cx="658.8" cy="195.5" r="0.8" fill="#f4c0d0"/>
<circle cx="665.5" cy="195.5" r="3.3" fill="#7a1000" stroke="#3a0800" stroke-width="0.6"/>
<circle cx="664.9" cy="195.2" r="1.1" fill="#f0d0c0"/>
<circle cx="673.0" cy="195.5" r="3.3" fill="#7a1000" stroke="#3a0800" stroke-width="0.6"/>
<circle cx="672.4" cy="195.2" r="1.1" fill="#f0d0c0"/>
<polygon points="676.4,199.1 684.4,199.1 680.4,191.9" fill="#fff" stroke="#161616" stroke-width="1.05"/>
<circle cx="680.4" cy="196.3" r="1.2" fill="#1530e0"/>
<circle cx="465.2" cy="202.9" r="3.05" fill="#fff" stroke="#161616" stroke-width="1.05"/>
<circle cx="464.5" cy="202.9" r="1.0" fill="#e8301c"/><circle cx="465.9" cy="202.9" r="0.8" fill="#f4c0d0"/>
<circle cx="472.6" cy="202.9" r="3.05" fill="#fff" stroke="#161616" stroke-width="1.05"/>
<circle cx="471.9" cy="202.9" r="1.0" fill="#e8301c"/><circle cx="473.3" cy="202.9" r="0.8" fill="#f4c0d0"/>
<circle cx="480.1" cy="202.9" r="3.05" fill="#fff" stroke="#161616" stroke-width="1.05"/>
<circle cx="479.4" cy="202.9" r="1.0" fill="#e8301c"/><circle cx="480.8" cy="202.9" r="0.8" fill="#f4c0d0"/>
<circle cx="487.5" cy="202.9" r="3.05" fill="#fff" stroke="#161616" stroke-width="1.05"/>
<circle cx="486.8" cy="202.9" r="1.0" fill="#e8301c"/><circle cx="488.2" cy="202.9" r="0.8" fill="#f4c0d0"/>
<polygon points="490.9,206.5 498.9,206.5 494.9,199.3" fill="#fff" stroke="#222" stroke-width="1.6"/>
<rect x="491.9" y="204.9" width="6" height="1.6" fill="#555"/>
<circle cx="502.3" cy="202.9" r="3.05" fill="#fff" stroke="#161616" stroke-width="1.05"/>
<circle cx="501.6" cy="202.9" r="1.0" fill="#e8301c"/><circle cx="503.0" cy="202.9" r="0.8" fill="#f4c0d0"/>
<circle cx="509.7" cy="202.9" r="3.05" fill="#fff" stroke="#161616" stroke-width="1.05"/>
<circle cx="509.0" cy="202.9" r="1.0" fill="#e8301c"/><circle cx="510.4" cy="202.9" r="0.8" fill="#f4c0d0"/>
<circle cx="517.1" cy="202.9" r="3.05" fill="#fff" stroke="#161616" stroke-width="1.05"/>
<circle cx="516.4" cy="202.9" r="1.0" fill="#e8301c"/><circle cx="517.9" cy="202.9" r="0.8" fill="#f4c0d0"/>
<circle cx="524.6" cy="202.9" r="3.05" fill="#fff" stroke="#161616" stroke-width="1.05"/>
<circle cx="523.9" cy="202.9" r="1.0" fill="#e8301c"/><circle cx="525.3" cy="202.9" r="0.8" fill="#f4c0d0"/>
<polygon points="527.7,206.6 536.3,206.6 532.0,199.2" fill="none" stroke="#222" stroke-width="1.0"/>
<polygon points="535.1,206.6 543.7,206.6 539.4,199.2" fill="none" stroke="#222" stroke-width="1.0"/>
<polygon points="542.5,206.6 551.1,206.6 546.8,199.2" fill="none" stroke="#222" stroke-width="1.0"/>
<polygon points="550.0,206.6 558.5,206.6 554.2,199.2" fill="none" stroke="#222" stroke-width="1.0"/>
<polygon points="557.4,206.6 566.0,206.6 561.7,199.2" fill="none" stroke="#222" stroke-width="1.0"/>
<polygon points="564.8,206.6 573.4,206.6 569.1,199.2" fill="none" stroke="#222" stroke-width="1.0"/>
<polygon points="572.2,206.6 580.8,206.6 576.5,199.2" fill="none" stroke="#222" stroke-width="1.0"/>
<polygon points="579.6,206.6 588.2,206.6 583.9,199.2" fill="none" stroke="#222" stroke-width="1.0"/>
<polygon points="587.1,206.6 595.6,206.6 591.4,199.2" fill="none" stroke="#222" stroke-width="1.0"/>
<polygon points="594.5,206.6 603.1,206.6 598.8,199.2" fill="none" stroke="#222" stroke-width="1.0"/>
<polygon points="601.9,206.6 610.5,206.6 606.2,199.2" fill="none" stroke="#222" stroke-width="1.0"/>
<polygon points="609.6,199.3 617.6,199.3 613.6,206.5" fill="#fff" stroke="#161616" stroke-width="1.05"/>
<circle cx="621.0" cy="202.9" r="3.05" fill="#fff" stroke="#161616" stroke-width="1.05"/>
<circle cx="621.0" cy="202.9" r="1.0" fill="#e0b000"/>
<circle cx="628.5" cy="202.9" r="3.05" fill="#fff" stroke="#161616" stroke-width="1.05"/>
<circle cx="627.8" cy="202.9" r="1.0" fill="#e8301c"/><circle cx="629.2" cy="202.9" r="0.8" fill="#f4c0d0"/>
<circle cx="635.9" cy="202.9" r="3.05" fill="#fff" stroke="#161616" stroke-width="1.05"/>
<circle cx="635.2" cy="202.9" r="1.0" fill="#e8301c"/><circle cx="636.6" cy="202.9" r="0.8" fill="#f4c0d0"/>
<circle cx="643.3" cy="202.9" r="3.05" fill="#fff" stroke="#161616" stroke-width="1.05"/>
<circle cx="650.7" cy="202.9" r="3.05" fill="#fff" stroke="#161616" stroke-width="1.05"/>
<circle cx="650.7" cy="202.9" r="1.0" fill="#e0b000"/>
<circle cx="658.1" cy="202.9" r="3.05" fill="#fff" stroke="#161616" stroke-width="1.05"/>
<circle cx="658.1" cy="202.9" r="1.0" fill="#e0b000"/>
<circle cx="665.5" cy="202.9" r="3.05" fill="#fff" stroke="#161616" stroke-width="1.05"/>
<circle cx="673.0" cy="202.9" r="3.3" fill="#7a1000" stroke="#3a0800" stroke-width="0.6"/>
<circle cx="672.4" cy="202.6" r="1.1" fill="#f0d0c0"/>
<circle cx="680.4" cy="202.9" r="3.3" fill="#7a1000" stroke="#3a0800" stroke-width="0.6"/>
<circle cx="679.8" cy="202.6" r="1.1" fill="#f0d0c0"/>
<polygon points="461.2,206.8 469.2,206.8 465.2,213.9" fill="#fff" stroke="#161616" stroke-width="1.05"/>
<circle cx="472.6" cy="210.3" r="3.05" fill="#fff" stroke="#161616" stroke-width="1.05"/>
<circle cx="471.9" cy="210.3" r="1.0" fill="#e8301c"/><circle cx="473.3" cy="210.3" r="0.8" fill="#f4c0d0"/>
<circle cx="480.1" cy="210.3" r="3.05" fill="#fff" stroke="#161616" stroke-width="1.05"/>
<circle cx="479.4" cy="210.3" r="1.0" fill="#e8301c"/><circle cx="480.8" cy="210.3" r="0.8" fill="#f4c0d0"/>
<polygon points="483.5,213.9 491.5,213.9 487.5,206.8" fill="#fff" stroke="#222" stroke-width="1.6"/>
<rect x="484.5" y="212.3" width="6" height="1.6" fill="#555"/>
<polygon points="490.9,213.9 498.9,213.9 494.9,206.8" fill="#fff" stroke="#161616" stroke-width="1.05"/>
<circle cx="494.9" cy="211.2" r="1.2" fill="#1530e0"/>
<polygon points="498.3,206.8 506.3,206.8 502.3,213.9" fill="#fff" stroke="#161616" stroke-width="1.05"/>
<circle cx="509.7" cy="210.3" r="3.05" fill="#fff" stroke="#161616" stroke-width="1.05"/>
<circle cx="509.0" cy="210.3" r="1.0" fill="#e8301c"/><circle cx="510.4" cy="210.3" r="0.8" fill="#f4c0d0"/>
<circle cx="517.1" cy="210.3" r="3.05" fill="#fff" stroke="#161616" stroke-width="1.05"/>
<circle cx="516.4" cy="210.3" r="1.0" fill="#e8301c"/><circle cx="517.9" cy="210.3" r="0.8" fill="#f4c0d0"/>
<circle cx="524.6" cy="210.3" r="3.05" fill="#fff" stroke="#161616" stroke-width="1.05"/>
<circle cx="523.9" cy="210.3" r="1.0" fill="#e8301c"/><circle cx="525.3" cy="210.3" r="0.8" fill="#f4c0d0"/>
<circle cx="532.0" cy="210.3" r="3.05" fill="#fff" stroke="#161616" stroke-width="1.05"/>
<circle cx="531.3" cy="210.3" r="1.0" fill="#e8301c"/><circle cx="532.7" cy="210.3" r="0.8" fill="#f4c0d0"/>
<polygon points="535.1,214.0 543.7,214.0 539.4,206.7" fill="none" stroke="#222" stroke-width="1.0"/>
<polygon points="542.5,214.0 551.1,214.0 546.8,206.7" fill="none" stroke="#222" stroke-width="1.0"/>
<polygon points="550.0,214.0 558.5,214.0 554.2,206.7" fill="none" stroke="#222" stroke-width="1.0"/>
<polygon points="557.4,214.0 566.0,214.0 561.7,206.7" fill="none" stroke="#222" stroke-width="1.0"/>
<polygon points="564.8,214.0 573.4,214.0 569.1,206.7" fill="none" stroke="#222" stroke-width="1.0"/>
<polygon points="572.2,214.0 580.8,214.0 576.5,206.7" fill="none" stroke="#222" stroke-width="1.0"/>
<polygon points="579.6,214.0 588.2,214.0 583.9,206.7" fill="none" stroke="#222" stroke-width="1.0"/>
<polygon points="587.1,214.0 595.6,214.0 591.4,206.7" fill="none" stroke="#222" stroke-width="1.0"/>
<polygon points="594.5,214.0 603.1,214.0 598.8,206.7" fill="none" stroke="#222" stroke-width="1.0"/>
<polygon points="601.9,214.0 610.5,214.0 606.2,206.7" fill="none" stroke="#222" stroke-width="1.0"/>
<circle cx="613.6" cy="210.3" r="3.05" fill="#fff" stroke="#161616" stroke-width="1.05"/>
<circle cx="612.9" cy="210.3" r="1.0" fill="#e8301c"/><circle cx="614.3" cy="210.3" r="0.8" fill="#f4c0d0"/>
<circle cx="621.0" cy="210.3" r="3.05" fill="#fff" stroke="#161616" stroke-width="1.05"/>
<circle cx="628.5" cy="210.3" r="3.05" fill="#fff" stroke="#161616" stroke-width="1.05"/>
<circle cx="635.9" cy="210.3" r="3.05" fill="#fff" stroke="#161616" stroke-width="1.05"/>
<circle cx="635.2" cy="210.3" r="1.0" fill="#e8301c"/><circle cx="636.6" cy="210.3" r="0.8" fill="#f4c0d0"/>
<polygon points="639.3,206.8 647.3,206.8 643.3,213.9" fill="#fff" stroke="#161616" stroke-width="1.05"/>
<polygon points="646.7,213.9 654.7,213.9 650.7,206.8" fill="#fff" stroke="#161616" stroke-width="1.05"/>
<circle cx="650.7" cy="211.2" r="1.2" fill="#1530e0"/>
<polygon points="654.1,213.9 662.1,213.9 658.1,206.8" fill="#fff" stroke="#222" stroke-width="1.6"/>
<rect x="655.1" y="212.3" width="6" height="1.6" fill="#555"/>
<circle cx="665.5" cy="210.3" r="3.05" fill="#fff" stroke="#161616" stroke-width="1.05"/>
<circle cx="664.8" cy="210.3" r="1.0" fill="#e8301c"/><circle cx="666.2" cy="210.3" r="0.8" fill="#f4c0d0"/>
<circle cx="673.0" cy="210.3" r="3.05" fill="#fff" stroke="#161616" stroke-width="1.05"/>
<circle cx="672.3" cy="210.3" r="1.0" fill="#e8301c"/><circle cx="673.7" cy="210.3" r="0.8" fill="#f4c0d0"/>
<polygon points="676.4,206.8 684.4,206.8 680.4,213.9" fill="#fff" stroke="#161616" stroke-width="1.05"/>
<circle cx="465.2" cy="217.8" r="3.05" fill="#fff" stroke="#161616" stroke-width="1.05"/>
<circle cx="464.5" cy="217.8" r="1.0" fill="#e8301c"/><circle cx="465.9" cy="217.8" r="0.8" fill="#f4c0d0"/>
<circle cx="472.6" cy="217.8" r="3.05" fill="#fff" stroke="#161616" stroke-width="1.05"/>
<circle cx="471.9" cy="217.8" r="1.0" fill="#e8301c"/><circle cx="473.3" cy="217.8" r="0.8" fill="#f4c0d0"/>
<circle cx="480.1" cy="217.8" r="3.05" fill="#fff" stroke="#161616" stroke-width="1.05"/>
<circle cx="479.4" cy="217.8" r="1.0" fill="#e8301c"/><circle cx="480.8" cy="217.8" r="0.8" fill="#f4c0d0"/>
<circle cx="487.5" cy="217.8" r="3.05" fill="#fff" stroke="#161616" stroke-width="1.05"/>
<circle cx="486.8" cy="217.8" r="1.0" fill="#e8301c"/><circle cx="488.2" cy="217.8" r="0.8" fill="#f4c0d0"/>
<circle cx="494.9" cy="217.8" r="3.05" fill="#fff" stroke="#161616" stroke-width="1.05"/>
<circle cx="502.3" cy="217.8" r="3.05" fill="#fff" stroke="#161616" stroke-width="1.05"/>
<circle cx="501.6" cy="217.8" r="1.0" fill="#e8301c"/><circle cx="503.0" cy="217.8" r="0.8" fill="#f4c0d0"/>
<circle cx="509.7" cy="217.8" r="3.05" fill="#fff" stroke="#161616" stroke-width="1.05"/>
<circle cx="509.0" cy="217.8" r="1.0" fill="#e8301c"/><circle cx="510.4" cy="217.8" r="0.8" fill="#f4c0d0"/>
<circle cx="517.1" cy="217.8" r="3.05" fill="#fff" stroke="#161616" stroke-width="1.05"/>
<circle cx="516.4" cy="217.8" r="1.0" fill="#e8301c"/><circle cx="517.9" cy="217.8" r="0.8" fill="#f4c0d0"/>
<circle cx="524.6" cy="217.8" r="3.05" fill="#fff" stroke="#161616" stroke-width="1.05"/>
<circle cx="523.9" cy="217.8" r="1.0" fill="#e8301c"/><circle cx="525.3" cy="217.8" r="0.8" fill="#f4c0d0"/>
<circle cx="532.0" cy="217.8" r="3.05" fill="#fff" stroke="#161616" stroke-width="1.05"/>
<circle cx="531.3" cy="217.8" r="1.0" fill="#e8301c"/><circle cx="532.7" cy="217.8" r="0.8" fill="#f4c0d0"/>
<polygon points="535.1,221.5 543.7,221.5 539.4,214.1" fill="none" stroke="#222" stroke-width="1.0"/>
<polygon points="542.5,221.5 551.1,221.5 546.8,214.1" fill="none" stroke="#222" stroke-width="1.0"/>
<polygon points="550.0,221.5 558.5,221.5 554.2,214.1" fill="none" stroke="#222" stroke-width="1.0"/>
<polygon points="557.4,221.5 566.0,221.5 561.7,214.1" fill="none" stroke="#222" stroke-width="1.0"/>
<polygon points="564.8,221.5 573.4,221.5 569.1,214.1" fill="none" stroke="#222" stroke-width="1.0"/>
<polygon points="572.2,221.5 580.8,221.5 576.5,214.1" fill="none" stroke="#222" stroke-width="1.0"/>
<polygon points="579.6,221.5 588.2,221.5 583.9,214.1" fill="none" stroke="#222" stroke-width="1.0"/>
<polygon points="587.1,221.5 595.6,221.5 591.4,214.1" fill="none" stroke="#222" stroke-width="1.0"/>
<polygon points="594.5,221.5 603.1,221.5 598.8,214.1" fill="none" stroke="#222" stroke-width="1.0"/>
<polygon points="601.9,221.5 610.5,221.5 606.2,214.1" fill="none" stroke="#222" stroke-width="1.0"/>
<circle cx="613.6" cy="217.8" r="3.05" fill="#fff" stroke="#161616" stroke-width="1.05"/>
<circle cx="612.9" cy="217.8" r="1.0" fill="#e8301c"/><circle cx="614.3" cy="217.8" r="0.8" fill="#f4c0d0"/>
<circle cx="621.0" cy="217.8" r="3.05" fill="#fff" stroke="#161616" stroke-width="1.05"/>
<circle cx="620.3" cy="217.8" r="1.0" fill="#e8301c"/><circle cx="621.7" cy="217.8" r="0.8" fill="#f4c0d0"/>
<circle cx="628.5" cy="217.8" r="3.05" fill="#fff" stroke="#161616" stroke-width="1.05"/>
<circle cx="627.8" cy="217.8" r="1.0" fill="#e8301c"/><circle cx="629.2" cy="217.8" r="0.8" fill="#f4c0d0"/>
<circle cx="635.9" cy="217.8" r="3.05" fill="#fff" stroke="#161616" stroke-width="1.05"/>
<circle cx="635.2" cy="217.8" r="1.0" fill="#e8301c"/><circle cx="636.6" cy="217.8" r="0.8" fill="#f4c0d0"/>
<circle cx="643.3" cy="217.8" r="3.05" fill="#fff" stroke="#161616" stroke-width="1.05"/>
<circle cx="642.6" cy="217.8" r="1.0" fill="#e8301c"/><circle cx="644.0" cy="217.8" r="0.8" fill="#f4c0d0"/>
<circle cx="650.7" cy="217.8" r="3.05" fill="#fff" stroke="#161616" stroke-width="1.05"/>
<circle cx="658.1" cy="217.8" r="3.05" fill="#fff" stroke="#161616" stroke-width="1.05"/>
<circle cx="657.4" cy="217.8" r="1.0" fill="#e8301c"/><circle cx="658.8" cy="217.8" r="0.8" fill="#f4c0d0"/>
<circle cx="665.5" cy="217.8" r="3.05" fill="#fff" stroke="#161616" stroke-width="1.05"/>
<circle cx="664.8" cy="217.8" r="1.0" fill="#e8301c"/><circle cx="666.2" cy="217.8" r="0.8" fill="#f4c0d0"/>
<circle cx="673.0" cy="217.8" r="3.05" fill="#fff" stroke="#161616" stroke-width="1.05"/>
<circle cx="672.3" cy="217.8" r="1.0" fill="#e8301c"/><circle cx="673.7" cy="217.8" r="0.8" fill="#f4c0d0"/>
<circle cx="680.4" cy="217.8" r="3.05" fill="#fff" stroke="#161616" stroke-width="1.05"/>
<circle cx="679.7" cy="217.8" r="1.0" fill="#e8301c"/><circle cx="681.1" cy="217.8" r="0.8" fill="#f4c0d0"/>
<circle cx="465.2" cy="225.2" r="3.05" fill="#fff" stroke="#161616" stroke-width="1.05"/>
<circle cx="464.5" cy="225.2" r="1.0" fill="#e8301c"/><circle cx="465.9" cy="225.2" r="0.8" fill="#f4c0d0"/>
<circle cx="472.6" cy="225.2" r="3.05" fill="#fff" stroke="#161616" stroke-width="1.05"/>
<circle cx="471.9" cy="225.2" r="1.0" fill="#e8301c"/><circle cx="473.3" cy="225.2" r="0.8" fill="#f4c0d0"/>
<circle cx="480.1" cy="225.2" r="3.05" fill="#fff" stroke="#161616" stroke-width="1.05"/>
<circle cx="479.4" cy="225.2" r="1.0" fill="#e8301c"/><circle cx="480.8" cy="225.2" r="0.8" fill="#f4c0d0"/>
<circle cx="487.5" cy="225.2" r="3.05" fill="#fff" stroke="#161616" stroke-width="1.05"/>
<circle cx="486.8" cy="225.2" r="1.0" fill="#e8301c"/><circle cx="488.2" cy="225.2" r="0.8" fill="#f4c0d0"/>
<circle cx="494.9" cy="225.2" r="3.05" fill="#fff" stroke="#161616" stroke-width="1.05"/>
<circle cx="494.2" cy="225.2" r="1.0" fill="#e8301c"/><circle cx="495.6" cy="225.2" r="0.8" fill="#f4c0d0"/>
<polygon points="498.3,228.8 506.3,228.8 502.3,221.6" fill="#fff" stroke="#222" stroke-width="1.6"/>
<rect x="499.3" y="227.2" width="6" height="1.6" fill="#555"/>
<circle cx="509.7" cy="225.2" r="3.05" fill="#fff" stroke="#161616" stroke-width="1.05"/>
<circle cx="509.0" cy="225.2" r="1.0" fill="#e8301c"/><circle cx="510.4" cy="225.2" r="0.8" fill="#f4c0d0"/>
<circle cx="517.1" cy="225.2" r="3.05" fill="#fff" stroke="#161616" stroke-width="1.05"/>
<circle cx="516.4" cy="225.2" r="1.0" fill="#e8301c"/><circle cx="517.9" cy="225.2" r="0.8" fill="#f4c0d0"/>
<circle cx="524.6" cy="225.2" r="3.05" fill="#fff" stroke="#161616" stroke-width="1.05"/>
<circle cx="523.9" cy="225.2" r="1.0" fill="#e8301c"/><circle cx="525.3" cy="225.2" r="0.8" fill="#f4c0d0"/>
<circle cx="532.0" cy="225.2" r="3.05" fill="#fff" stroke="#161616" stroke-width="1.05"/>
<circle cx="531.3" cy="225.2" r="1.0" fill="#e8301c"/><circle cx="532.7" cy="225.2" r="0.8" fill="#f4c0d0"/>
<polygon points="535.4,228.8 543.4,228.8 539.4,221.6" fill="#fff" stroke="#161616" stroke-width="1.05"/>
<circle cx="539.4" cy="226.0" r="1.2" fill="#1530e0"/>
<polygon points="542.5,228.9 551.1,228.9 546.8,221.5" fill="none" stroke="#222" stroke-width="1.0"/>
<polygon points="550.0,228.9 558.5,228.9 554.2,221.5" fill="none" stroke="#222" stroke-width="1.0"/>
<polygon points="557.4,228.9 566.0,228.9 561.7,221.5" fill="none" stroke="#222" stroke-width="1.0"/>
<polygon points="564.8,228.9 573.4,228.9 569.1,221.5" fill="none" stroke="#222" stroke-width="1.0"/>
<polygon points="572.2,228.9 580.8,228.9 576.5,221.5" fill="none" stroke="#222" stroke-width="1.0"/>
<polygon points="579.6,228.9 588.2,228.9 583.9,221.5" fill="none" stroke="#222" stroke-width="1.0"/>
<polygon points="587.1,228.9 595.6,228.9 591.4,221.5" fill="none" stroke="#222" stroke-width="1.0"/>
<polygon points="594.5,228.9 603.1,228.9 598.8,221.5" fill="none" stroke="#222" stroke-width="1.0"/>
<polygon points="602.2,228.8 610.2,228.8 606.2,221.6" fill="#fff" stroke="#161616" stroke-width="1.05"/>
<circle cx="606.2" cy="226.0" r="1.2" fill="#1530e0"/>
<circle cx="613.6" cy="225.2" r="3.05" fill="#fff" stroke="#161616" stroke-width="1.05"/>
<circle cx="612.9" cy="225.2" r="1.0" fill="#e8301c"/><circle cx="614.3" cy="225.2" r="0.8" fill="#f4c0d0"/>
<circle cx="621.0" cy="225.2" r="3.05" fill="#fff" stroke="#161616" stroke-width="1.05"/>
<circle cx="620.3" cy="225.2" r="1.0" fill="#e8301c"/><circle cx="621.7" cy="225.2" r="0.8" fill="#f4c0d0"/>
<circle cx="628.5" cy="225.2" r="3.05" fill="#fff" stroke="#161616" stroke-width="1.05"/>
<circle cx="627.8" cy="225.2" r="1.0" fill="#e8301c"/><circle cx="629.2" cy="225.2" r="0.8" fill="#f4c0d0"/>
<circle cx="635.9" cy="225.2" r="3.05" fill="#fff" stroke="#161616" stroke-width="1.05"/>
<circle cx="635.2" cy="225.2" r="1.0" fill="#e8301c"/><circle cx="636.6" cy="225.2" r="0.8" fill="#f4c0d0"/>
<circle cx="643.3" cy="225.2" r="3.05" fill="#fff" stroke="#161616" stroke-width="1.05"/>
<circle cx="642.6" cy="225.2" r="1.0" fill="#e8301c"/><circle cx="644.0" cy="225.2" r="0.8" fill="#f4c0d0"/>
<circle cx="650.7" cy="225.2" r="3.05" fill="#fff" stroke="#161616" stroke-width="1.05"/>
<circle cx="650.0" cy="225.2" r="1.0" fill="#e8301c"/><circle cx="651.4" cy="225.2" r="0.8" fill="#f4c0d0"/>
<circle cx="658.1" cy="225.2" r="3.05" fill="#fff" stroke="#161616" stroke-width="1.05"/>
<circle cx="657.4" cy="225.2" r="1.0" fill="#e8301c"/><circle cx="658.8" cy="225.2" r="0.8" fill="#f4c0d0"/>
<circle cx="665.5" cy="225.2" r="3.05" fill="#fff" stroke="#161616" stroke-width="1.05"/>
<circle cx="664.8" cy="225.2" r="1.0" fill="#e8301c"/><circle cx="666.2" cy="225.2" r="0.8" fill="#f4c0d0"/>
<circle cx="673.0" cy="225.2" r="3.05" fill="#fff" stroke="#161616" stroke-width="1.05"/>
<circle cx="672.3" cy="225.2" r="1.0" fill="#e8301c"/><circle cx="673.7" cy="225.2" r="0.8" fill="#f4c0d0"/>
<circle cx="680.4" cy="225.2" r="3.05" fill="#fff" stroke="#161616" stroke-width="1.05"/>
<circle cx="679.7" cy="225.2" r="1.0" fill="#e8301c"/><circle cx="681.1" cy="225.2" r="0.8" fill="#f4c0d0"/>
<circle cx="465.2" cy="232.6" r="3.05" fill="#fff" stroke="#161616" stroke-width="1.05"/>
<circle cx="464.5" cy="232.6" r="1.0" fill="#e8301c"/><circle cx="465.9" cy="232.6" r="0.8" fill="#f4c0d0"/>
<circle cx="472.6" cy="232.6" r="3.05" fill="#fff" stroke="#161616" stroke-width="1.05"/>
<circle cx="471.9" cy="232.6" r="1.0" fill="#e8301c"/><circle cx="473.3" cy="232.6" r="0.8" fill="#f4c0d0"/>
<circle cx="480.1" cy="232.6" r="3.05" fill="#fff" stroke="#161616" stroke-width="1.05"/>
<circle cx="479.4" cy="232.6" r="1.0" fill="#e8301c"/><circle cx="480.8" cy="232.6" r="0.8" fill="#f4c0d0"/>
<circle cx="487.5" cy="232.6" r="3.05" fill="#fff" stroke="#161616" stroke-width="1.05"/>
<circle cx="486.8" cy="232.6" r="1.0" fill="#e8301c"/><circle cx="488.2" cy="232.6" r="0.8" fill="#f4c0d0"/>
<circle cx="494.9" cy="232.6" r="3.05" fill="#fff" stroke="#161616" stroke-width="1.05"/>
<circle cx="494.2" cy="232.6" r="1.0" fill="#e8301c"/><circle cx="495.6" cy="232.6" r="0.8" fill="#f4c0d0"/>
<circle cx="502.3" cy="232.6" r="3.05" fill="#fff" stroke="#161616" stroke-width="1.05"/>
<circle cx="501.6" cy="232.6" r="1.0" fill="#e8301c"/><circle cx="503.0" cy="232.6" r="0.8" fill="#f4c0d0"/>
<circle cx="509.7" cy="232.6" r="3.05" fill="#fff" stroke="#161616" stroke-width="1.05"/>
<circle cx="517.1" cy="232.6" r="3.05" fill="#fff" stroke="#161616" stroke-width="1.05"/>
<circle cx="524.6" cy="232.6" r="3.05" fill="#fff" stroke="#161616" stroke-width="1.05"/>
<circle cx="523.9" cy="232.6" r="1.0" fill="#e8301c"/><circle cx="525.3" cy="232.6" r="0.8" fill="#f4c0d0"/>
<circle cx="532.0" cy="232.6" r="3.05" fill="#fff" stroke="#161616" stroke-width="1.05"/>
<circle cx="531.3" cy="232.6" r="1.0" fill="#e8301c"/><circle cx="532.7" cy="232.6" r="0.8" fill="#f4c0d0"/>
<polygon points="535.1,236.3 543.7,236.3 539.4,228.9" fill="none" stroke="#222" stroke-width="1.0"/>
<polygon points="542.5,236.3 551.1,236.3 546.8,228.9" fill="none" stroke="#222" stroke-width="1.0"/>
<polygon points="550.0,236.3 558.5,236.3 554.2,228.9" fill="none" stroke="#222" stroke-width="1.0"/>
<polygon points="557.4,236.3 566.0,236.3 561.7,228.9" fill="none" stroke="#222" stroke-width="1.0"/>
<polygon points="564.8,236.3 573.4,236.3 569.1,228.9" fill="none" stroke="#222" stroke-width="1.0"/>
<polygon points="572.2,236.3 580.8,236.3 576.5,228.9" fill="none" stroke="#222" stroke-width="1.0"/>
<polygon points="579.6,236.3 588.2,236.3 583.9,228.9" fill="none" stroke="#222" stroke-width="1.0"/>
<polygon points="587.1,236.3 595.6,236.3 591.4,228.9" fill="none" stroke="#222" stroke-width="1.0"/>
<polygon points="594.5,236.3 603.1,236.3 598.8,228.9" fill="none" stroke="#222" stroke-width="1.0"/>
<polygon points="601.9,236.3 610.5,236.3 606.2,228.9" fill="none" stroke="#222" stroke-width="1.0"/>
<polygon points="609.3,236.3 617.9,236.3 613.6,228.9" fill="none" stroke="#222" stroke-width="1.0"/>
<polygon points="617.0,236.2 625.0,236.2 621.0,229.0" fill="#fff" stroke="#161616" stroke-width="1.05"/>
<circle cx="628.5" cy="232.6" r="3.3" fill="#7a1000" stroke="#3a0800" stroke-width="0.6"/>
<circle cx="627.9" cy="232.3" r="1.1" fill="#f0d0c0"/>
<circle cx="635.9" cy="232.6" r="3.05" fill="#fff" stroke="#161616" stroke-width="1.05"/>
<circle cx="635.2" cy="232.6" r="1.0" fill="#e8301c"/><circle cx="636.6" cy="232.6" r="0.8" fill="#f4c0d0"/>
<circle cx="643.3" cy="232.6" r="3.05" fill="#fff" stroke="#161616" stroke-width="1.05"/>
<circle cx="650.7" cy="232.6" r="3.05" fill="#fff" stroke="#161616" stroke-width="1.05"/>
<circle cx="650.0" cy="232.6" r="1.0" fill="#e8301c"/><circle cx="651.4" cy="232.6" r="0.8" fill="#f4c0d0"/>
<circle cx="658.1" cy="232.6" r="3.05" fill="#fff" stroke="#161616" stroke-width="1.05"/>
<circle cx="657.4" cy="232.6" r="1.0" fill="#e8301c"/><circle cx="658.8" cy="232.6" r="0.8" fill="#f4c0d0"/>
<polygon points="661.5,236.2 669.5,236.2 665.5,229.0" fill="#fff" stroke="#222" stroke-width="1.6"/>
<rect x="662.5" y="234.6" width="6" height="1.6" fill="#555"/>
<circle cx="673.0" cy="232.6" r="3.05" fill="#fff" stroke="#161616" stroke-width="1.05"/>
<circle cx="672.3" cy="232.6" r="1.0" fill="#e8301c"/><circle cx="673.7" cy="232.6" r="0.8" fill="#f4c0d0"/>
<circle cx="680.4" cy="232.6" r="3.05" fill="#fff" stroke="#161616" stroke-width="1.05"/>
<circle cx="679.7" cy="232.6" r="1.0" fill="#e8301c"/><circle cx="681.1" cy="232.6" r="0.8" fill="#f4c0d0"/>
<circle cx="465.2" cy="240.0" r="3.05" fill="#fff" stroke="#161616" stroke-width="1.05"/>
<circle cx="464.5" cy="240.0" r="1.0" fill="#e8301c"/><circle cx="465.9" cy="240.0" r="0.8" fill="#f4c0d0"/>
<circle cx="472.6" cy="240.0" r="3.05" fill="#fff" stroke="#161616" stroke-width="1.05"/>
<circle cx="471.9" cy="240.0" r="1.0" fill="#e8301c"/><circle cx="473.3" cy="240.0" r="0.8" fill="#f4c0d0"/>
<polygon points="476.1,243.6 484.1,243.6 480.1,236.4" fill="#fff" stroke="#161616" stroke-width="1.05"/>
<circle cx="480.1" cy="240.8" r="1.2" fill="#1530e0"/>
<polygon points="483.5,236.4 491.5,236.4 487.5,243.6" fill="#fff" stroke="#161616" stroke-width="1.05"/>
<circle cx="494.9" cy="240.0" r="3.05" fill="#fff" stroke="#161616" stroke-width="1.05"/>
<circle cx="494.2" cy="240.0" r="1.0" fill="#e8301c"/><circle cx="495.6" cy="240.0" r="0.8" fill="#f4c0d0"/>
<circle cx="502.3" cy="240.0" r="3.05" fill="#fff" stroke="#161616" stroke-width="1.05"/>
<circle cx="501.6" cy="240.0" r="1.0" fill="#e8301c"/><circle cx="503.0" cy="240.0" r="0.8" fill="#f4c0d0"/>
<polygon points="505.7,236.4 513.7,236.4 509.7,243.6" fill="#fff" stroke="#161616" stroke-width="1.05"/>
<polygon points="513.1,243.6 521.1,243.6 517.1,236.4" fill="#fff" stroke="#161616" stroke-width="1.05"/>
<polygon points="520.6,236.4 528.6,236.4 524.6,243.6" fill="#fff" stroke="#161616" stroke-width="1.05"/>
<polygon points="528.0,243.6 536.0,243.6 532.0,236.4" fill="#fff" stroke="#161616" stroke-width="1.05"/>
<circle cx="532.0" cy="240.8" r="1.2" fill="#1530e0"/>
<polygon points="535.4,243.6 543.4,243.6 539.4,236.4" fill="#fff" stroke="#161616" stroke-width="1.05"/>
<circle cx="539.4" cy="240.8" r="1.2" fill="#1530e0"/>
<circle cx="546.8" cy="240.0" r="3.05" fill="#fff" stroke="#161616" stroke-width="1.05"/>
<circle cx="554.2" cy="240.0" r="3.05" fill="#fff" stroke="#161616" stroke-width="1.05"/>
<circle cx="553.5" cy="240.0" r="1.0" fill="#e8301c"/><circle cx="555.0" cy="240.0" r="0.8" fill="#f4c0d0"/>
<polygon points="557.7,236.4 565.7,236.4 561.7,243.6" fill="#fff" stroke="#161616" stroke-width="1.05"/>
<polygon points="565.1,243.6 573.1,243.6 569.1,236.4" fill="#fff" stroke="#161616" stroke-width="1.05"/>
<circle cx="569.1" cy="240.8" r="1.2" fill="#1530e0"/>
<polygon points="572.5,243.6 580.5,243.6 576.5,236.4" fill="#fff" stroke="#161616" stroke-width="1.05"/>
<circle cx="576.5" cy="240.8" r="1.2" fill="#1530e0"/>
<polygon points="579.9,236.4 587.9,236.4 583.9,243.6" fill="#fff" stroke="#161616" stroke-width="1.05"/>
<circle cx="591.4" cy="240.0" r="3.3" fill="#7a1000" stroke="#3a0800" stroke-width="0.6"/>
<circle cx="590.8" cy="239.7" r="1.1" fill="#f0d0c0"/>
<circle cx="598.8" cy="240.0" r="3.3" fill="#7a1000" stroke="#3a0800" stroke-width="0.6"/>
<circle cx="598.2" cy="239.7" r="1.1" fill="#f0d0c0"/>
<polygon points="602.2,243.6 610.2,243.6 606.2,236.4" fill="#fff" stroke="#161616" stroke-width="1.05"/>
<circle cx="606.2" cy="240.8" r="1.2" fill="#1530e0"/>
<polygon points="609.6,236.4 617.6,236.4 613.6,243.6" fill="#fff" stroke="#161616" stroke-width="1.05"/>
<polygon points="617.0,243.6 625.0,243.6 621.0,236.4" fill="#fff" stroke="#161616" stroke-width="1.05"/>
<circle cx="628.5" cy="240.0" r="3.05" fill="#fff" stroke="#161616" stroke-width="1.05"/>
<circle cx="635.9" cy="240.0" r="3.05" fill="#fff" stroke="#161616" stroke-width="1.05"/>
<circle cx="643.3" cy="240.0" r="3.3" fill="#7a1000" stroke="#3a0800" stroke-width="0.6"/>
<circle cx="642.7" cy="239.7" r="1.1" fill="#f0d0c0"/>
<circle cx="650.7" cy="240.0" r="3.3" fill="#7a1000" stroke="#3a0800" stroke-width="0.6"/>
<circle cx="650.1" cy="239.7" r="1.1" fill="#f0d0c0"/>
<polygon points="654.1,236.4 662.1,236.4 658.1,243.6" fill="#fff" stroke="#161616" stroke-width="1.05"/>
<polygon points="661.5,243.6 669.5,243.6 665.5,236.4" fill="#fff" stroke="#161616" stroke-width="1.05"/>
<circle cx="665.5" cy="240.8" r="1.2" fill="#1530e0"/>
<circle cx="673.0" cy="240.0" r="3.05" fill="#fff" stroke="#161616" stroke-width="1.05"/>
<circle cx="672.3" cy="240.0" r="1.0" fill="#e8301c"/><circle cx="673.7" cy="240.0" r="0.8" fill="#f4c0d0"/>
<circle cx="680.4" cy="240.0" r="3.05" fill="#fff" stroke="#161616" stroke-width="1.05"/>
<circle cx="679.7" cy="240.0" r="1.0" fill="#e8301c"/><circle cx="681.1" cy="240.0" r="0.8" fill="#f4c0d0"/>
<circle cx="465.2" cy="247.4" r="3.05" fill="#fff" stroke="#161616" stroke-width="1.05"/>
<circle cx="464.5" cy="247.4" r="1.0" fill="#e8301c"/><circle cx="465.9" cy="247.4" r="0.8" fill="#f4c0d0"/>
<circle cx="472.6" cy="247.4" r="3.05" fill="#fff" stroke="#161616" stroke-width="1.05"/>
<circle cx="471.9" cy="247.4" r="1.0" fill="#e8301c"/><circle cx="473.3" cy="247.4" r="0.8" fill="#f4c0d0"/>
<circle cx="480.1" cy="247.4" r="3.05" fill="#fff" stroke="#161616" stroke-width="1.05"/>
<circle cx="479.4" cy="247.4" r="1.0" fill="#e8301c"/><circle cx="480.8" cy="247.4" r="0.8" fill="#f4c0d0"/>
<circle cx="487.5" cy="247.4" r="3.05" fill="#fff" stroke="#161616" stroke-width="1.05"/>
<circle cx="486.8" cy="247.4" r="1.0" fill="#e8301c"/><circle cx="488.2" cy="247.4" r="0.8" fill="#f4c0d0"/>
<circle cx="494.9" cy="247.4" r="3.05" fill="#fff" stroke="#161616" stroke-width="1.05"/>
<circle cx="494.2" cy="247.4" r="1.0" fill="#e8301c"/><circle cx="495.6" cy="247.4" r="0.8" fill="#f4c0d0"/>
<circle cx="502.3" cy="247.4" r="3.05" fill="#fff" stroke="#161616" stroke-width="1.05"/>
<circle cx="501.6" cy="247.4" r="1.0" fill="#e8301c"/><circle cx="503.0" cy="247.4" r="0.8" fill="#f4c0d0"/>
<circle cx="509.7" cy="247.4" r="3.05" fill="#fff" stroke="#161616" stroke-width="1.05"/>
<circle cx="509.0" cy="247.4" r="1.0" fill="#e8301c"/><circle cx="510.4" cy="247.4" r="0.8" fill="#f4c0d0"/>
<polygon points="513.1,243.8 521.1,243.8 517.1,251.0" fill="#fff" stroke="#161616" stroke-width="1.05"/>
<polygon points="520.6,251.0 528.6,251.0 524.6,243.8" fill="#fff" stroke="#161616" stroke-width="1.05"/>
<circle cx="524.6" cy="248.2" r="1.2" fill="#1530e0"/>
<polygon points="528.0,243.8 536.0,243.8 532.0,251.0" fill="#fff" stroke="#161616" stroke-width="1.05"/>
<circle cx="539.4" cy="247.4" r="3.05" fill="#fff" stroke="#161616" stroke-width="1.05"/>
<circle cx="538.7" cy="247.4" r="1.0" fill="#e8301c"/><circle cx="540.1" cy="247.4" r="0.8" fill="#f4c0d0"/>
<circle cx="546.8" cy="247.4" r="3.05" fill="#fff" stroke="#161616" stroke-width="1.05"/>
<circle cx="546.1" cy="247.4" r="1.0" fill="#e8301c"/><circle cx="547.5" cy="247.4" r="0.8" fill="#f4c0d0"/>
<circle cx="554.2" cy="247.4" r="3.05" fill="#fff" stroke="#161616" stroke-width="1.05"/>
<circle cx="553.5" cy="247.4" r="1.0" fill="#e8301c"/><circle cx="555.0" cy="247.4" r="0.8" fill="#f4c0d0"/>
<circle cx="561.7" cy="247.4" r="3.05" fill="#fff" stroke="#161616" stroke-width="1.05"/>
<rect x="566.1" y="244.4" width="6" height="6" fill="#fff" stroke="#444" stroke-width="0.9"/>
<circle cx="576.5" cy="247.4" r="3.05" fill="#fff" stroke="#161616" stroke-width="1.05"/>
<circle cx="575.8" cy="247.4" r="1.0" fill="#e8301c"/><circle cx="577.2" cy="247.4" r="0.8" fill="#f4c0d0"/>
<circle cx="583.9" cy="247.4" r="3.05" fill="#fff" stroke="#161616" stroke-width="1.05"/>
<circle cx="583.2" cy="247.4" r="1.0" fill="#e8301c"/><circle cx="584.6" cy="247.4" r="0.8" fill="#f4c0d0"/>
<circle cx="591.4" cy="247.4" r="3.05" fill="#fff" stroke="#161616" stroke-width="1.05"/>
<circle cx="590.6" cy="247.4" r="1.0" fill="#e8301c"/><circle cx="592.1" cy="247.4" r="0.8" fill="#f4c0d0"/>
<circle cx="598.8" cy="247.4" r="3.05" fill="#fff" stroke="#161616" stroke-width="1.05"/>
<circle cx="598.1" cy="247.4" r="1.0" fill="#e8301c"/><circle cx="599.5" cy="247.4" r="0.8" fill="#f4c0d0"/>
<circle cx="606.2" cy="247.4" r="3.05" fill="#fff" stroke="#161616" stroke-width="1.05"/>
<circle cx="605.5" cy="247.4" r="1.0" fill="#e8301c"/><circle cx="606.9" cy="247.4" r="0.8" fill="#f4c0d0"/>
<circle cx="613.6" cy="247.4" r="3.05" fill="#fff" stroke="#161616" stroke-width="1.05"/>
<circle cx="612.9" cy="247.4" r="1.0" fill="#e8301c"/><circle cx="614.3" cy="247.4" r="0.8" fill="#f4c0d0"/>
<polygon points="617.0,251.0 625.0,251.0 621.0,243.8" fill="#fff" stroke="#161616" stroke-width="1.05"/>
<circle cx="621.0" cy="248.2" r="1.2" fill="#1530e0"/>
<circle cx="628.5" cy="247.4" r="3.05" fill="#fff" stroke="#161616" stroke-width="1.05"/>
<circle cx="627.8" cy="247.4" r="1.0" fill="#e8301c"/><circle cx="629.2" cy="247.4" r="0.8" fill="#f4c0d0"/>
<circle cx="635.9" cy="247.4" r="3.3" fill="#7a1000" stroke="#3a0800" stroke-width="0.6"/>
<circle cx="635.3" cy="247.1" r="1.1" fill="#f0d0c0"/>
<circle cx="643.3" cy="247.4" r="3.05" fill="#fff" stroke="#161616" stroke-width="1.05"/>
<circle cx="642.6" cy="247.4" r="1.0" fill="#e8301c"/><circle cx="644.0" cy="247.4" r="0.8" fill="#f4c0d0"/>
<circle cx="650.7" cy="247.4" r="3.3" fill="#7a1000" stroke="#3a0800" stroke-width="0.6"/>
<circle cx="650.1" cy="247.1" r="1.1" fill="#f0d0c0"/>
<circle cx="658.1" cy="247.4" r="3.3" fill="#7a1000" stroke="#3a0800" stroke-width="0.6"/>
<circle cx="657.5" cy="247.1" r="1.1" fill="#f0d0c0"/>
<circle cx="665.5" cy="247.4" r="3.05" fill="#fff" stroke="#161616" stroke-width="1.05"/>
<circle cx="664.8" cy="247.4" r="1.0" fill="#e8301c"/><circle cx="666.2" cy="247.4" r="0.8" fill="#f4c0d0"/>
<circle cx="673.0" cy="247.4" r="3.05" fill="#fff" stroke="#161616" stroke-width="1.05"/>
<circle cx="672.3" cy="247.4" r="1.0" fill="#e8301c"/><circle cx="673.7" cy="247.4" r="0.8" fill="#f4c0d0"/>
<circle cx="680.4" cy="247.4" r="3.05" fill="#fff" stroke="#161616" stroke-width="1.05"/>
<circle cx="679.7" cy="247.4" r="1.0" fill="#e8301c"/><circle cx="681.1" cy="247.4" r="0.8" fill="#f4c0d0"/>
<circle cx="465.2" cy="254.9" r="3.05" fill="#fff" stroke="#161616" stroke-width="1.05"/>
<circle cx="464.5" cy="254.9" r="1.0" fill="#e8301c"/><circle cx="465.9" cy="254.9" r="0.8" fill="#f4c0d0"/>
<circle cx="472.6" cy="254.9" r="3.05" fill="#fff" stroke="#161616" stroke-width="1.05"/>
<circle cx="471.9" cy="254.9" r="1.0" fill="#e8301c"/><circle cx="473.3" cy="254.9" r="0.8" fill="#f4c0d0"/>
<circle cx="480.1" cy="254.9" r="3.05" fill="#fff" stroke="#161616" stroke-width="1.05"/>
<circle cx="479.4" cy="254.9" r="1.0" fill="#e8301c"/><circle cx="480.8" cy="254.9" r="0.8" fill="#f4c0d0"/>
<circle cx="487.5" cy="254.9" r="3.05" fill="#fff" stroke="#161616" stroke-width="1.05"/>
<circle cx="486.8" cy="254.9" r="1.0" fill="#e8301c"/><circle cx="488.2" cy="254.9" r="0.8" fill="#f4c0d0"/>
<polygon points="490.9,258.5 498.9,258.5 494.9,251.3" fill="#fff" stroke="#222" stroke-width="1.6"/>
<rect x="491.9" y="256.9" width="6" height="1.6" fill="#555"/>
<circle cx="502.3" cy="254.9" r="3.05" fill="#fff" stroke="#161616" stroke-width="1.05"/>
<circle cx="501.6" cy="254.9" r="1.0" fill="#e8301c"/><circle cx="503.0" cy="254.9" r="0.8" fill="#f4c0d0"/>
<circle cx="509.7" cy="254.9" r="3.05" fill="#fff" stroke="#161616" stroke-width="1.05"/>
<circle cx="509.0" cy="254.9" r="1.0" fill="#e8301c"/><circle cx="510.4" cy="254.9" r="0.8" fill="#f4c0d0"/>
<circle cx="517.1" cy="254.9" r="3.05" fill="#fff" stroke="#161616" stroke-width="1.05"/>
<circle cx="524.6" cy="254.9" r="3.05" fill="#fff" stroke="#161616" stroke-width="1.05"/>
<circle cx="532.0" cy="254.9" r="3.3" fill="#7a1000" stroke="#3a0800" stroke-width="0.6"/>
<circle cx="531.4" cy="254.6" r="1.1" fill="#f0d0c0"/>
<circle cx="539.4" cy="254.9" r="3.3" fill="#7a1000" stroke="#3a0800" stroke-width="0.6"/>
<circle cx="538.8" cy="254.6" r="1.1" fill="#f0d0c0"/>
<circle cx="546.8" cy="254.9" r="3.3" fill="#7a1000" stroke="#3a0800" stroke-width="0.6"/>
<circle cx="546.2" cy="254.6" r="1.1" fill="#f0d0c0"/>
<circle cx="554.2" cy="254.9" r="3.05" fill="#fff" stroke="#161616" stroke-width="1.05"/>
<circle cx="553.5" cy="254.9" r="1.0" fill="#e8301c"/><circle cx="555.0" cy="254.9" r="0.8" fill="#f4c0d0"/>
<circle cx="561.7" cy="254.9" r="3.05" fill="#fff" stroke="#161616" stroke-width="1.05"/>
<rect x="566.1" y="251.9" width="6" height="6" fill="#9a1a10" stroke="#444" stroke-width="0.9"/>
<circle cx="576.5" cy="254.9" r="3.05" fill="#fff" stroke="#161616" stroke-width="1.05"/>
<circle cx="575.8" cy="254.9" r="1.0" fill="#e8301c"/><circle cx="577.2" cy="254.9" r="0.8" fill="#f4c0d0"/>
<circle cx="583.9" cy="254.9" r="3.3" fill="#7a1000" stroke="#3a0800" stroke-width="0.6"/>
<circle cx="583.3" cy="254.6" r="1.1" fill="#f0d0c0"/>
<circle cx="591.4" cy="254.9" r="3.05" fill="#fff" stroke="#161616" stroke-width="1.05"/>
<circle cx="590.6" cy="254.9" r="1.0" fill="#e8301c"/><circle cx="592.1" cy="254.9" r="0.8" fill="#f4c0d0"/>
<circle cx="598.8" cy="254.9" r="3.05" fill="#fff" stroke="#161616" stroke-width="1.05"/>
<circle cx="598.1" cy="254.9" r="1.0" fill="#e8301c"/><circle cx="599.5" cy="254.9" r="0.8" fill="#f4c0d0"/>
<circle cx="606.2" cy="254.9" r="3.05" fill="#fff" stroke="#161616" stroke-width="1.05"/>
<circle cx="605.5" cy="254.9" r="1.0" fill="#e8301c"/><circle cx="606.9" cy="254.9" r="0.8" fill="#f4c0d0"/>
<circle cx="613.6" cy="254.9" r="3.05" fill="#fff" stroke="#161616" stroke-width="1.05"/>
<circle cx="612.9" cy="254.9" r="1.0" fill="#e8301c"/><circle cx="614.3" cy="254.9" r="0.8" fill="#f4c0d0"/>
<polygon points="617.0,258.5 625.0,258.5 621.0,251.3" fill="#fff" stroke="#222" stroke-width="1.6"/>
<rect x="618.0" y="256.9" width="6" height="1.6" fill="#555"/>
<polygon points="624.5,258.5 632.5,258.5 628.5,251.3" fill="#fff" stroke="#161616" stroke-width="1.05"/>
<circle cx="628.5" cy="255.7" r="1.2" fill="#1530e0"/>
<circle cx="635.9" cy="254.9" r="3.05" fill="#fff" stroke="#161616" stroke-width="1.05"/>
<circle cx="635.2" cy="254.9" r="1.0" fill="#e8301c"/><circle cx="636.6" cy="254.9" r="0.8" fill="#f4c0d0"/>
<circle cx="643.3" cy="254.9" r="3.05" fill="#fff" stroke="#161616" stroke-width="1.05"/>
<circle cx="642.6" cy="254.9" r="1.0" fill="#e8301c"/><circle cx="644.0" cy="254.9" r="0.8" fill="#f4c0d0"/>
<circle cx="650.7" cy="254.9" r="3.05" fill="#fff" stroke="#161616" stroke-width="1.05"/>
<polygon points="654.1,258.5 662.1,258.5 658.1,251.3" fill="#fff" stroke="#222" stroke-width="1.6"/>
<rect x="655.1" y="256.9" width="6" height="1.6" fill="#555"/>
<polygon points="661.5,258.5 669.5,258.5 665.5,251.3" fill="#fff" stroke="#222" stroke-width="1.6"/>
<rect x="662.5" y="256.9" width="6" height="1.6" fill="#555"/>
<circle cx="673.0" cy="254.9" r="3.05" fill="#fff" stroke="#161616" stroke-width="1.05"/>
<circle cx="672.3" cy="254.9" r="1.0" fill="#e8301c"/><circle cx="673.7" cy="254.9" r="0.8" fill="#f4c0d0"/>
<circle cx="680.4" cy="254.9" r="3.05" fill="#fff" stroke="#161616" stroke-width="1.05"/>
<circle cx="679.7" cy="254.9" r="1.0" fill="#e8301c"/><circle cx="681.1" cy="254.9" r="0.8" fill="#f4c0d0"/>
<circle cx="465.2" cy="262.3" r="3.05" fill="#fff" stroke="#161616" stroke-width="1.05"/>
<circle cx="464.5" cy="262.3" r="1.0" fill="#e8301c"/><circle cx="465.9" cy="262.3" r="0.8" fill="#f4c0d0"/>
<circle cx="472.6" cy="262.3" r="3.05" fill="#fff" stroke="#161616" stroke-width="1.05"/>
<circle cx="471.9" cy="262.3" r="1.0" fill="#e8301c"/><circle cx="473.3" cy="262.3" r="0.8" fill="#f4c0d0"/>
<circle cx="480.1" cy="262.3" r="3.05" fill="#fff" stroke="#161616" stroke-width="1.05"/>
<circle cx="479.4" cy="262.3" r="1.0" fill="#e8301c"/><circle cx="480.8" cy="262.3" r="0.8" fill="#f4c0d0"/>
<circle cx="487.5" cy="262.3" r="3.05" fill="#fff" stroke="#161616" stroke-width="1.05"/>
<circle cx="486.8" cy="262.3" r="1.0" fill="#e8301c"/><circle cx="488.2" cy="262.3" r="0.8" fill="#f4c0d0"/>
<polygon points="490.9,265.9 498.9,265.9 494.9,258.7" fill="#fff" stroke="#161616" stroke-width="1.05"/>
<circle cx="494.9" cy="263.1" r="1.2" fill="#1530e0"/>
<polygon points="498.3,258.7 506.3,258.7 502.3,265.9" fill="#fff" stroke="#161616" stroke-width="1.05"/>
<circle cx="509.7" cy="262.3" r="3.3" fill="#7a1000" stroke="#3a0800" stroke-width="0.6"/>
<circle cx="509.1" cy="262.0" r="1.1" fill="#f0d0c0"/>
<circle cx="517.1" cy="262.3" r="3.3" fill="#7a1000" stroke="#3a0800" stroke-width="0.6"/>
<circle cx="516.5" cy="262.0" r="1.1" fill="#f0d0c0"/>
<polygon points="520.6,258.7 528.6,258.7 524.6,265.9" fill="#fff" stroke="#161616" stroke-width="1.05"/>
<polygon points="528.0,265.9 536.0,265.9 532.0,258.7" fill="#fff" stroke="#161616" stroke-width="1.05"/>
<circle cx="532.0" cy="263.1" r="1.2" fill="#1530e0"/>
<circle cx="539.4" cy="262.3" r="3.05" fill="#fff" stroke="#161616" stroke-width="1.05"/>
<circle cx="538.7" cy="262.3" r="1.0" fill="#e8301c"/><circle cx="540.1" cy="262.3" r="0.8" fill="#f4c0d0"/>
<circle cx="546.8" cy="262.3" r="3.05" fill="#fff" stroke="#161616" stroke-width="1.05"/>
<circle cx="546.1" cy="262.3" r="1.0" fill="#e8301c"/><circle cx="547.5" cy="262.3" r="0.8" fill="#f4c0d0"/>
<circle cx="554.2" cy="262.3" r="3.05" fill="#fff" stroke="#161616" stroke-width="1.05"/>
<circle cx="553.5" cy="262.3" r="1.0" fill="#e8301c"/><circle cx="555.0" cy="262.3" r="0.8" fill="#f4c0d0"/>
<polygon points="557.7,258.7 565.7,258.7 561.7,265.9" fill="#fff" stroke="#161616" stroke-width="1.05"/>
<circle cx="569.1" cy="262.3" r="3.05" fill="#fff" stroke="#161616" stroke-width="1.05"/>
<circle cx="568.4" cy="262.3" r="1.0" fill="#e8301c"/><circle cx="569.8" cy="262.3" r="0.8" fill="#f4c0d0"/>
<circle cx="576.5" cy="262.3" r="3.3" fill="#7a1000" stroke="#3a0800" stroke-width="0.6"/>
<circle cx="575.9" cy="262.0" r="1.1" fill="#f0d0c0"/>
<circle cx="583.9" cy="262.3" r="3.3" fill="#7a1000" stroke="#3a0800" stroke-width="0.6"/>
<circle cx="583.3" cy="262.0" r="1.1" fill="#f0d0c0"/>
<polygon points="587.4,258.7 595.4,258.7 591.4,265.9" fill="#fff" stroke="#161616" stroke-width="1.05"/>
<circle cx="598.8" cy="262.3" r="3.3" fill="#7a1000" stroke="#3a0800" stroke-width="0.6"/>
<circle cx="598.2" cy="262.0" r="1.1" fill="#f0d0c0"/>
<circle cx="606.2" cy="262.3" r="3.05" fill="#fff" stroke="#161616" stroke-width="1.05"/>
<circle cx="605.5" cy="262.3" r="1.0" fill="#e8301c"/><circle cx="606.9" cy="262.3" r="0.8" fill="#f4c0d0"/>
<polygon points="609.6,265.9 617.6,265.9 613.6,258.7" fill="#fff" stroke="#161616" stroke-width="1.05"/>
<circle cx="613.6" cy="263.1" r="1.2" fill="#1530e0"/>
<polygon points="617.0,258.7 625.0,258.7 621.0,265.9" fill="#fff" stroke="#161616" stroke-width="1.05"/>
<circle cx="628.5" cy="262.3" r="3.05" fill="#fff" stroke="#161616" stroke-width="1.05"/>
<circle cx="627.8" cy="262.3" r="1.0" fill="#e8301c"/><circle cx="629.2" cy="262.3" r="0.8" fill="#f4c0d0"/>
<circle cx="635.9" cy="262.3" r="3.05" fill="#fff" stroke="#161616" stroke-width="1.05"/>
<circle cx="635.2" cy="262.3" r="1.0" fill="#e8301c"/><circle cx="636.6" cy="262.3" r="0.8" fill="#f4c0d0"/>
<polygon points="639.3,258.7 647.3,258.7 643.3,265.9" fill="#fff" stroke="#161616" stroke-width="1.05"/>
<polygon points="646.7,265.9 654.7,265.9 650.7,258.7" fill="#fff" stroke="#161616" stroke-width="1.05"/>
<circle cx="650.7" cy="263.1" r="1.2" fill="#1530e0"/>
<circle cx="658.1" cy="262.3" r="3.05" fill="#fff" stroke="#161616" stroke-width="1.05"/>
<circle cx="657.4" cy="262.3" r="1.0" fill="#e8301c"/><circle cx="658.8" cy="262.3" r="0.8" fill="#f4c0d0"/>
<circle cx="665.5" cy="262.3" r="3.05" fill="#fff" stroke="#161616" stroke-width="1.05"/>
<circle cx="664.8" cy="262.3" r="1.0" fill="#e8301c"/><circle cx="666.2" cy="262.3" r="0.8" fill="#f4c0d0"/>
<circle cx="673.0" cy="262.3" r="3.05" fill="#fff" stroke="#161616" stroke-width="1.05"/>
<circle cx="672.3" cy="262.3" r="1.0" fill="#e8301c"/><circle cx="673.7" cy="262.3" r="0.8" fill="#f4c0d0"/>
<circle cx="680.4" cy="262.3" r="3.05" fill="#fff" stroke="#161616" stroke-width="1.05"/>
<circle cx="679.7" cy="262.3" r="1.0" fill="#e8301c"/><circle cx="681.1" cy="262.3" r="0.8" fill="#f4c0d0"/>
<circle cx="465.2" cy="269.7" r="3.05" fill="#fff" stroke="#161616" stroke-width="1.05"/>
<circle cx="464.5" cy="269.7" r="1.0" fill="#e8301c"/><circle cx="465.9" cy="269.7" r="0.8" fill="#f4c0d0"/>
<circle cx="472.6" cy="269.7" r="3.05" fill="#fff" stroke="#161616" stroke-width="1.05"/>
<circle cx="471.9" cy="269.7" r="1.0" fill="#e8301c"/><circle cx="473.3" cy="269.7" r="0.8" fill="#f4c0d0"/>
<circle cx="480.1" cy="269.7" r="3.05" fill="#fff" stroke="#161616" stroke-width="1.05"/>
<circle cx="479.4" cy="269.7" r="1.0" fill="#e8301c"/><circle cx="480.8" cy="269.7" r="0.8" fill="#f4c0d0"/>
<circle cx="487.5" cy="269.7" r="3.05" fill="#fff" stroke="#161616" stroke-width="1.05"/>
<circle cx="486.8" cy="269.7" r="1.0" fill="#e8301c"/><circle cx="488.2" cy="269.7" r="0.8" fill="#f4c0d0"/>
<polygon points="490.9,266.1 498.9,266.1 494.9,273.3" fill="#fff" stroke="#161616" stroke-width="1.05"/>
<polygon points="498.3,273.3 506.3,273.3 502.3,266.1" fill="#fff" stroke="#161616" stroke-width="1.05"/>
<circle cx="502.3" cy="270.5" r="1.2" fill="#1530e0"/>
<circle cx="509.7" cy="269.7" r="3.3" fill="#7a1000" stroke="#3a0800" stroke-width="0.6"/>
<circle cx="509.1" cy="269.4" r="1.1" fill="#f0d0c0"/>
<circle cx="517.1" cy="269.7" r="3.05" fill="#fff" stroke="#161616" stroke-width="1.05"/>
<circle cx="516.4" cy="269.7" r="1.0" fill="#e8301c"/><circle cx="517.9" cy="269.7" r="0.8" fill="#f4c0d0"/>
<polygon points="520.6,273.3 528.6,273.3 524.6,266.1" fill="#7a1000" stroke="#222" stroke-width="1.2"/>
<circle cx="532.0" cy="269.7" r="3.3" fill="#7a1000" stroke="#3a0800" stroke-width="0.6"/>
<circle cx="531.4" cy="269.4" r="1.1" fill="#f0d0c0"/>
<circle cx="539.4" cy="269.7" r="3.05" fill="#fff" stroke="#161616" stroke-width="1.05"/>
<circle cx="538.7" cy="269.7" r="1.0" fill="#e8301c"/><circle cx="540.1" cy="269.7" r="0.8" fill="#f4c0d0"/>
<polygon points="542.8,273.3 550.8,273.3 546.8,266.1" fill="#fff" stroke="#222" stroke-width="1.6"/>
<rect x="543.8" y="271.7" width="6" height="1.6" fill="#555"/>
<polygon points="550.2,273.3 558.2,273.3 554.2,266.1" fill="#fff" stroke="#161616" stroke-width="1.05"/>
<circle cx="554.2" cy="270.5" r="1.2" fill="#1530e0"/>
<circle cx="561.7" cy="269.7" r="3.05" fill="#fff" stroke="#161616" stroke-width="1.05"/>
<circle cx="561.0" cy="269.7" r="1.0" fill="#e8301c"/><circle cx="562.4" cy="269.7" r="0.8" fill="#f4c0d0"/>
<circle cx="569.1" cy="269.7" r="3.05" fill="#fff" stroke="#161616" stroke-width="1.05"/>
<circle cx="568.4" cy="269.7" r="1.0" fill="#e8301c"/><circle cx="569.8" cy="269.7" r="0.8" fill="#f4c0d0"/>
<circle cx="576.5" cy="269.7" r="3.3" fill="#7a1000" stroke="#3a0800" stroke-width="0.6"/>
<circle cx="575.9" cy="269.4" r="1.1" fill="#f0d0c0"/>
<polygon points="579.9,273.3 587.9,273.3 583.9,266.1" fill="#7a1000" stroke="#222" stroke-width="1.2"/>
<circle cx="591.4" cy="269.7" r="3.05" fill="#fff" stroke="#161616" stroke-width="1.05"/>
<circle cx="590.6" cy="269.7" r="1.0" fill="#e8301c"/><circle cx="592.1" cy="269.7" r="0.8" fill="#f4c0d0"/>
<polygon points="594.8,273.3 602.8,273.3 598.8,266.1" fill="#fff" stroke="#161616" stroke-width="1.05"/>
<circle cx="598.8" cy="270.5" r="1.2" fill="#1530e0"/>
<circle cx="606.2" cy="269.7" r="3.05" fill="#fff" stroke="#161616" stroke-width="1.05"/>
<circle cx="605.5" cy="269.7" r="1.0" fill="#e8301c"/><circle cx="606.9" cy="269.7" r="0.8" fill="#f4c0d0"/>
<circle cx="613.6" cy="269.7" r="3.05" fill="#fff" stroke="#161616" stroke-width="1.05"/>
<circle cx="612.9" cy="269.7" r="1.0" fill="#e8301c"/><circle cx="614.3" cy="269.7" r="0.8" fill="#f4c0d0"/>
<circle cx="621.0" cy="269.7" r="3.05" fill="#fff" stroke="#161616" stroke-width="1.05"/>
<circle cx="620.3" cy="269.7" r="1.0" fill="#e8301c"/><circle cx="621.7" cy="269.7" r="0.8" fill="#f4c0d0"/>
<circle cx="628.5" cy="269.7" r="3.05" fill="#fff" stroke="#161616" stroke-width="1.05"/>
<circle cx="627.8" cy="269.7" r="1.0" fill="#e8301c"/><circle cx="629.2" cy="269.7" r="0.8" fill="#f4c0d0"/>
<circle cx="635.9" cy="269.7" r="3.05" fill="#fff" stroke="#161616" stroke-width="1.05"/>
<circle cx="635.2" cy="269.7" r="1.0" fill="#e8301c"/><circle cx="636.6" cy="269.7" r="0.8" fill="#f4c0d0"/>
<polygon points="639.3,273.3 647.3,273.3 643.3,266.1" fill="#fff" stroke="#161616" stroke-width="1.05"/>
<circle cx="643.3" cy="270.5" r="1.2" fill="#1530e0"/>
<polygon points="646.7,266.1 654.7,266.1 650.7,273.3" fill="#fff" stroke="#161616" stroke-width="1.05"/>
<circle cx="658.1" cy="269.7" r="3.05" fill="#fff" stroke="#161616" stroke-width="1.05"/>
<circle cx="657.4" cy="269.7" r="1.0" fill="#e8301c"/><circle cx="658.8" cy="269.7" r="0.8" fill="#f4c0d0"/>
<circle cx="665.5" cy="269.7" r="3.05" fill="#fff" stroke="#161616" stroke-width="1.05"/>
<circle cx="664.8" cy="269.7" r="1.0" fill="#e8301c"/><circle cx="666.2" cy="269.7" r="0.8" fill="#f4c0d0"/>
<circle cx="673.0" cy="269.7" r="3.05" fill="#fff" stroke="#161616" stroke-width="1.05"/>
<circle cx="672.3" cy="269.7" r="1.0" fill="#e8301c"/><circle cx="673.7" cy="269.7" r="0.8" fill="#f4c0d0"/>
<circle cx="680.4" cy="269.7" r="3.05" fill="#fff" stroke="#161616" stroke-width="1.05"/>
<circle cx="679.7" cy="269.7" r="1.0" fill="#e8301c"/><circle cx="681.1" cy="269.7" r="0.8" fill="#f4c0d0"/>
<polygon points="461.2,280.7 469.2,280.7 465.2,273.5" fill="#fff" stroke="#161616" stroke-width="1.05"/>
<circle cx="465.2" cy="277.9" r="1.2" fill="#1530e0"/>
<circle cx="472.6" cy="277.1" r="3.05" fill="#fff" stroke="#161616" stroke-width="1.05"/>
<circle cx="471.9" cy="277.1" r="1.0" fill="#e8301c"/><circle cx="473.3" cy="277.1" r="0.8" fill="#f4c0d0"/>
<circle cx="480.1" cy="277.1" r="3.05" fill="#fff" stroke="#161616" stroke-width="1.05"/>
<circle cx="479.4" cy="277.1" r="1.0" fill="#e8301c"/><circle cx="480.8" cy="277.1" r="0.8" fill="#f4c0d0"/>
<circle cx="487.5" cy="277.1" r="3.3" fill="#7a1000" stroke="#3a0800" stroke-width="0.6"/>
<circle cx="486.9" cy="276.8" r="1.1" fill="#f0d0c0"/>
<circle cx="494.9" cy="277.1" r="3.05" fill="#fff" stroke="#161616" stroke-width="1.05"/>
<circle cx="494.2" cy="277.1" r="1.0" fill="#e8301c"/><circle cx="495.6" cy="277.1" r="0.8" fill="#f4c0d0"/>
<circle cx="502.3" cy="277.1" r="3.05" fill="#fff" stroke="#161616" stroke-width="1.05"/>
<circle cx="501.6" cy="277.1" r="1.0" fill="#e8301c"/><circle cx="503.0" cy="277.1" r="0.8" fill="#f4c0d0"/>
<circle cx="509.7" cy="277.1" r="3.05" fill="#fff" stroke="#161616" stroke-width="1.05"/>
<circle cx="509.0" cy="277.1" r="1.0" fill="#e8301c"/><circle cx="510.4" cy="277.1" r="0.8" fill="#f4c0d0"/>
<circle cx="517.1" cy="277.1" r="3.05" fill="#fff" stroke="#161616" stroke-width="1.05"/>
<circle cx="516.4" cy="277.1" r="1.0" fill="#e8301c"/><circle cx="517.9" cy="277.1" r="0.8" fill="#f4c0d0"/>
<circle cx="524.6" cy="277.1" r="3.05" fill="#fff" stroke="#161616" stroke-width="1.05"/>
<circle cx="523.9" cy="277.1" r="1.0" fill="#e8301c"/><circle cx="525.3" cy="277.1" r="0.8" fill="#f4c0d0"/>
<circle cx="532.0" cy="277.1" r="3.05" fill="#fff" stroke="#161616" stroke-width="1.05"/>
<circle cx="531.3" cy="277.1" r="1.0" fill="#e8301c"/><circle cx="532.7" cy="277.1" r="0.8" fill="#f4c0d0"/>
<polygon points="535.4,273.5 543.4,273.5 539.4,280.7" fill="#fff" stroke="#161616" stroke-width="1.05"/>
<circle cx="546.8" cy="277.1" r="3.05" fill="#fff" stroke="#161616" stroke-width="1.05"/>
<circle cx="546.1" cy="277.1" r="1.0" fill="#e8301c"/><circle cx="547.5" cy="277.1" r="0.8" fill="#f4c0d0"/>
<polygon points="550.2,280.7 558.2,280.7 554.2,273.5" fill="#7a1000" stroke="#222" stroke-width="1.2"/>
<circle cx="561.7" cy="277.1" r="3.05" fill="#fff" stroke="#161616" stroke-width="1.05"/>
<circle cx="561.0" cy="277.1" r="1.0" fill="#e8301c"/><circle cx="562.4" cy="277.1" r="0.8" fill="#f4c0d0"/>
<rect x="566.1" y="274.1" width="6" height="6" fill="#fff" stroke="#444" stroke-width="0.9"/>
<polygon points="572.5,280.7 580.5,280.7 576.5,273.5" fill="#7a1000" stroke="#222" stroke-width="1.2"/>
<circle cx="583.9" cy="277.1" r="3.05" fill="#fff" stroke="#161616" stroke-width="1.05"/>
<circle cx="583.2" cy="277.1" r="1.0" fill="#e8301c"/><circle cx="584.6" cy="277.1" r="0.8" fill="#f4c0d0"/>
<circle cx="591.4" cy="277.1" r="3.05" fill="#fff" stroke="#161616" stroke-width="1.05"/>
<circle cx="590.6" cy="277.1" r="1.0" fill="#e8301c"/><circle cx="592.1" cy="277.1" r="0.8" fill="#f4c0d0"/>
<circle cx="598.8" cy="277.1" r="3.05" fill="#fff" stroke="#161616" stroke-width="1.05"/>
<circle cx="598.1" cy="277.1" r="1.0" fill="#e8301c"/><circle cx="599.5" cy="277.1" r="0.8" fill="#f4c0d0"/>
<circle cx="606.2" cy="277.1" r="3.05" fill="#fff" stroke="#161616" stroke-width="1.05"/>
<circle cx="605.5" cy="277.1" r="1.0" fill="#e8301c"/><circle cx="606.9" cy="277.1" r="0.8" fill="#f4c0d0"/>
<polygon points="609.6,273.5 617.6,273.5 613.6,280.7" fill="#fff" stroke="#161616" stroke-width="1.05"/>
<circle cx="621.0" cy="277.1" r="3.05" fill="#fff" stroke="#161616" stroke-width="1.05"/>
<circle cx="620.3" cy="277.1" r="1.0" fill="#e8301c"/><circle cx="621.7" cy="277.1" r="0.8" fill="#f4c0d0"/>
<circle cx="628.5" cy="277.1" r="3.05" fill="#fff" stroke="#161616" stroke-width="1.05"/>
<circle cx="627.8" cy="277.1" r="1.0" fill="#e8301c"/><circle cx="629.2" cy="277.1" r="0.8" fill="#f4c0d0"/>
<circle cx="635.9" cy="277.1" r="3.05" fill="#fff" stroke="#161616" stroke-width="1.05"/>
<circle cx="635.2" cy="277.1" r="1.0" fill="#e8301c"/><circle cx="636.6" cy="277.1" r="0.8" fill="#f4c0d0"/>
<circle cx="643.3" cy="277.1" r="3.05" fill="#fff" stroke="#161616" stroke-width="1.05"/>
<circle cx="642.6" cy="277.1" r="1.0" fill="#e8301c"/><circle cx="644.0" cy="277.1" r="0.8" fill="#f4c0d0"/>
<circle cx="650.7" cy="277.1" r="3.05" fill="#fff" stroke="#161616" stroke-width="1.05"/>
<circle cx="650.0" cy="277.1" r="1.0" fill="#e8301c"/><circle cx="651.4" cy="277.1" r="0.8" fill="#f4c0d0"/>
<circle cx="658.1" cy="277.1" r="3.05" fill="#fff" stroke="#161616" stroke-width="1.05"/>
<circle cx="657.4" cy="277.1" r="1.0" fill="#e8301c"/><circle cx="658.8" cy="277.1" r="0.8" fill="#f4c0d0"/>
<circle cx="665.5" cy="277.1" r="3.05" fill="#fff" stroke="#161616" stroke-width="1.05"/>
<circle cx="664.8" cy="277.1" r="1.0" fill="#e8301c"/><circle cx="666.2" cy="277.1" r="0.8" fill="#f4c0d0"/>
<circle cx="673.0" cy="277.1" r="3.05" fill="#fff" stroke="#161616" stroke-width="1.05"/>
<circle cx="672.3" cy="277.1" r="1.0" fill="#e8301c"/><circle cx="673.7" cy="277.1" r="0.8" fill="#f4c0d0"/>
<polygon points="676.4,280.7 684.4,280.7 680.4,273.5" fill="#fff" stroke="#161616" stroke-width="1.05"/>
<circle cx="680.4" cy="277.9" r="1.2" fill="#1530e0"/>
<circle cx="465.2" cy="284.6" r="3.05" fill="#fff" stroke="#161616" stroke-width="1.05"/>
<circle cx="464.5" cy="284.6" r="1.0" fill="#e8301c"/><circle cx="465.9" cy="284.6" r="0.8" fill="#f4c0d0"/>
<circle cx="472.6" cy="284.6" r="3.05" fill="#fff" stroke="#161616" stroke-width="1.05"/>
<circle cx="471.9" cy="284.6" r="1.0" fill="#e8301c"/><circle cx="473.3" cy="284.6" r="0.8" fill="#f4c0d0"/>
<circle cx="480.1" cy="284.6" r="3.05" fill="#fff" stroke="#161616" stroke-width="1.05"/>
<circle cx="479.4" cy="284.6" r="1.0" fill="#e8301c"/><circle cx="480.8" cy="284.6" r="0.8" fill="#f4c0d0"/>
<circle cx="487.5" cy="284.6" r="3.05" fill="#fff" stroke="#161616" stroke-width="1.05"/>
<circle cx="486.8" cy="284.6" r="1.0" fill="#e8301c"/><circle cx="488.2" cy="284.6" r="0.8" fill="#f4c0d0"/>
<polygon points="490.9,288.2 498.9,288.2 494.9,280.9" fill="#7a1000" stroke="#222" stroke-width="1.2"/>
<polygon points="498.3,280.9 506.3,280.9 502.3,288.2" fill="#fff" stroke="#161616" stroke-width="1.05"/>
<circle cx="509.7" cy="284.6" r="3.05" fill="#fff" stroke="#161616" stroke-width="1.05"/>
<circle cx="509.0" cy="284.6" r="1.0" fill="#e8301c"/><circle cx="510.4" cy="284.6" r="0.8" fill="#f4c0d0"/>
<polygon points="513.1,288.2 521.1,288.2 517.1,280.9" fill="#fff" stroke="#161616" stroke-width="1.05"/>
<circle cx="517.1" cy="285.4" r="1.2" fill="#1530e0"/>
<circle cx="524.6" cy="284.6" r="3.3" fill="#7a1000" stroke="#3a0800" stroke-width="0.6"/>
<circle cx="524.0" cy="284.2" r="1.1" fill="#f0d0c0"/>
<circle cx="532.0" cy="284.6" r="3.05" fill="#fff" stroke="#161616" stroke-width="1.05"/>
<circle cx="531.3" cy="284.6" r="1.0" fill="#e8301c"/><circle cx="532.7" cy="284.6" r="0.8" fill="#f4c0d0"/>
<polygon points="535.4,288.2 543.4,288.2 539.4,280.9" fill="#fff" stroke="#161616" stroke-width="1.05"/>
<circle cx="539.4" cy="285.4" r="1.2" fill="#1530e0"/>
<circle cx="546.8" cy="284.6" r="3.05" fill="#fff" stroke="#161616" stroke-width="1.05"/>
<circle cx="546.1" cy="284.6" r="1.0" fill="#e8301c"/><circle cx="547.5" cy="284.6" r="0.8" fill="#f4c0d0"/>
<circle cx="554.2" cy="284.6" r="3.05" fill="#fff" stroke="#161616" stroke-width="1.05"/>
<circle cx="553.5" cy="284.6" r="1.0" fill="#e8301c"/><circle cx="555.0" cy="284.6" r="0.8" fill="#f4c0d0"/>
<rect x="558.7" y="281.6" width="6" height="6" fill="#fff" stroke="#444" stroke-width="0.9"/>
<circle cx="569.1" cy="284.6" r="3.05" fill="#fff" stroke="#161616" stroke-width="1.05"/>
<circle cx="568.4" cy="284.6" r="1.0" fill="#e8301c"/><circle cx="569.8" cy="284.6" r="0.8" fill="#f4c0d0"/>
<circle cx="576.5" cy="284.6" r="3.05" fill="#fff" stroke="#161616" stroke-width="1.05"/>
<circle cx="575.8" cy="284.6" r="1.0" fill="#e8301c"/><circle cx="577.2" cy="284.6" r="0.8" fill="#f4c0d0"/>
<circle cx="583.9" cy="284.6" r="3.05" fill="#fff" stroke="#161616" stroke-width="1.05"/>
<circle cx="583.2" cy="284.6" r="1.0" fill="#e8301c"/><circle cx="584.6" cy="284.6" r="0.8" fill="#f4c0d0"/>
<circle cx="591.4" cy="284.6" r="3.05" fill="#fff" stroke="#161616" stroke-width="1.05"/>
<circle cx="590.6" cy="284.6" r="1.0" fill="#e8301c"/><circle cx="592.1" cy="284.6" r="0.8" fill="#f4c0d0"/>
<circle cx="598.8" cy="284.6" r="3.05" fill="#fff" stroke="#161616" stroke-width="1.05"/>
<circle cx="598.1" cy="284.6" r="1.0" fill="#e8301c"/><circle cx="599.5" cy="284.6" r="0.8" fill="#f4c0d0"/>
<polygon points="602.2,288.2 610.2,288.2 606.2,280.9" fill="#fff" stroke="#222" stroke-width="1.6"/>
<rect x="603.2" y="286.6" width="6" height="1.6" fill="#555"/>
<polygon points="609.6,288.2 617.6,288.2 613.6,280.9" fill="#fff" stroke="#161616" stroke-width="1.05"/>
<circle cx="613.6" cy="285.4" r="1.2" fill="#1530e0"/>
<circle cx="621.0" cy="284.6" r="3.05" fill="#fff" stroke="#161616" stroke-width="1.05"/>
<circle cx="620.3" cy="284.6" r="1.0" fill="#e8301c"/><circle cx="621.7" cy="284.6" r="0.8" fill="#f4c0d0"/>
<polygon points="624.5,288.2 632.5,288.2 628.5,280.9" fill="#fff" stroke="#161616" stroke-width="1.05"/>
<circle cx="628.5" cy="285.4" r="1.2" fill="#1530e0"/>
<circle cx="635.9" cy="284.6" r="3.05" fill="#fff" stroke="#161616" stroke-width="1.05"/>
<circle cx="635.2" cy="284.6" r="1.0" fill="#e8301c"/><circle cx="636.6" cy="284.6" r="0.8" fill="#f4c0d0"/>
<polygon points="639.3,280.9 647.3,280.9 643.3,288.2" fill="#fff" stroke="#161616" stroke-width="1.05"/>
<circle cx="650.7" cy="284.6" r="3.05" fill="#fff" stroke="#161616" stroke-width="1.05"/>
<circle cx="650.0" cy="284.6" r="1.0" fill="#e8301c"/><circle cx="651.4" cy="284.6" r="0.8" fill="#f4c0d0"/>
<circle cx="658.1" cy="284.6" r="3.05" fill="#fff" stroke="#161616" stroke-width="1.05"/>
<circle cx="657.4" cy="284.6" r="1.0" fill="#e8301c"/><circle cx="658.8" cy="284.6" r="0.8" fill="#f4c0d0"/>
<circle cx="665.5" cy="284.6" r="3.05" fill="#fff" stroke="#161616" stroke-width="1.05"/>
<circle cx="664.8" cy="284.6" r="1.0" fill="#e8301c"/><circle cx="666.2" cy="284.6" r="0.8" fill="#f4c0d0"/>
<circle cx="673.0" cy="284.6" r="3.05" fill="#fff" stroke="#161616" stroke-width="1.05"/>
<circle cx="672.3" cy="284.6" r="1.0" fill="#e8301c"/><circle cx="673.7" cy="284.6" r="0.8" fill="#f4c0d0"/>
<circle cx="680.4" cy="284.6" r="3.05" fill="#fff" stroke="#161616" stroke-width="1.05"/>
<circle cx="679.7" cy="284.6" r="1.0" fill="#e8301c"/><circle cx="681.1" cy="284.6" r="0.8" fill="#f4c0d0"/>
<polygon points="461.2,288.4 469.2,288.4 465.2,295.6" fill="#fff" stroke="#161616" stroke-width="1.05"/>
<circle cx="472.6" cy="292.0" r="3.05" fill="#fff" stroke="#161616" stroke-width="1.05"/>
<circle cx="471.9" cy="292.0" r="1.0" fill="#e8301c"/><circle cx="473.3" cy="292.0" r="0.8" fill="#f4c0d0"/>
<circle cx="480.1" cy="292.0" r="3.05" fill="#fff" stroke="#161616" stroke-width="1.05"/>
<circle cx="479.4" cy="292.0" r="1.0" fill="#e8301c"/><circle cx="480.8" cy="292.0" r="0.8" fill="#f4c0d0"/>
<circle cx="487.5" cy="292.0" r="3.3" fill="#7a1000" stroke="#3a0800" stroke-width="0.6"/>
<circle cx="486.9" cy="291.7" r="1.1" fill="#f0d0c0"/>
<circle cx="494.9" cy="292.0" r="3.3" fill="#7a1000" stroke="#3a0800" stroke-width="0.6"/>
<circle cx="494.3" cy="291.7" r="1.1" fill="#f0d0c0"/>
<circle cx="502.3" cy="292.0" r="3.3" fill="#7a1000" stroke="#3a0800" stroke-width="0.6"/>
<circle cx="501.7" cy="291.7" r="1.1" fill="#f0d0c0"/>
<circle cx="509.7" cy="292.0" r="3.05" fill="#fff" stroke="#161616" stroke-width="1.05"/>
<circle cx="509.0" cy="292.0" r="1.0" fill="#e8301c"/><circle cx="510.4" cy="292.0" r="0.8" fill="#f4c0d0"/>
<circle cx="517.1" cy="292.0" r="3.05" fill="#fff" stroke="#161616" stroke-width="1.05"/>
<circle cx="516.4" cy="292.0" r="1.0" fill="#e8301c"/><circle cx="517.9" cy="292.0" r="0.8" fill="#f4c0d0"/>
<circle cx="524.6" cy="292.0" r="3.05" fill="#fff" stroke="#161616" stroke-width="1.05"/>
<circle cx="523.9" cy="292.0" r="1.0" fill="#e8301c"/><circle cx="525.3" cy="292.0" r="0.8" fill="#f4c0d0"/>
<circle cx="532.0" cy="292.0" r="3.05" fill="#fff" stroke="#161616" stroke-width="1.05"/>
<circle cx="531.3" cy="292.0" r="1.0" fill="#e8301c"/><circle cx="532.7" cy="292.0" r="0.8" fill="#f4c0d0"/>
<circle cx="539.4" cy="292.0" r="3.05" fill="#fff" stroke="#161616" stroke-width="1.05"/>
<circle cx="538.7" cy="292.0" r="1.0" fill="#e8301c"/><circle cx="540.1" cy="292.0" r="0.8" fill="#f4c0d0"/>
<circle cx="546.8" cy="292.0" r="3.05" fill="#fff" stroke="#161616" stroke-width="1.05"/>
<circle cx="546.1" cy="292.0" r="1.0" fill="#e8301c"/><circle cx="547.5" cy="292.0" r="0.8" fill="#f4c0d0"/>
<circle cx="554.2" cy="292.0" r="3.05" fill="#fff" stroke="#161616" stroke-width="1.05"/>
<circle cx="553.5" cy="292.0" r="1.0" fill="#e8301c"/><circle cx="555.0" cy="292.0" r="0.8" fill="#f4c0d0"/>
<circle cx="561.7" cy="292.0" r="3.05" fill="#fff" stroke="#161616" stroke-width="1.05"/>
<circle cx="561.0" cy="292.0" r="1.0" fill="#e8301c"/><circle cx="562.4" cy="292.0" r="0.8" fill="#f4c0d0"/>
<circle cx="569.1" cy="292.0" r="3.05" fill="#fff" stroke="#161616" stroke-width="1.05"/>
<circle cx="568.4" cy="292.0" r="1.0" fill="#e8301c"/><circle cx="569.8" cy="292.0" r="0.8" fill="#f4c0d0"/>
<circle cx="576.5" cy="292.0" r="3.05" fill="#fff" stroke="#161616" stroke-width="1.05"/>
<circle cx="575.8" cy="292.0" r="1.0" fill="#e8301c"/><circle cx="577.2" cy="292.0" r="0.8" fill="#f4c0d0"/>
<circle cx="583.9" cy="292.0" r="3.05" fill="#fff" stroke="#161616" stroke-width="1.05"/>
<circle cx="583.2" cy="292.0" r="1.0" fill="#e8301c"/><circle cx="584.6" cy="292.0" r="0.8" fill="#f4c0d0"/>
<circle cx="591.4" cy="292.0" r="3.05" fill="#fff" stroke="#161616" stroke-width="1.05"/>
<circle cx="590.6" cy="292.0" r="1.0" fill="#e8301c"/><circle cx="592.1" cy="292.0" r="0.8" fill="#f4c0d0"/>
<circle cx="598.8" cy="292.0" r="3.05" fill="#fff" stroke="#161616" stroke-width="1.05"/>
<circle cx="598.1" cy="292.0" r="1.0" fill="#e8301c"/><circle cx="599.5" cy="292.0" r="0.8" fill="#f4c0d0"/>
<circle cx="606.2" cy="292.0" r="3.05" fill="#fff" stroke="#161616" stroke-width="1.05"/>
<circle cx="605.5" cy="292.0" r="1.0" fill="#e8301c"/><circle cx="606.9" cy="292.0" r="0.8" fill="#f4c0d0"/>
<circle cx="613.6" cy="292.0" r="3.05" fill="#fff" stroke="#161616" stroke-width="1.05"/>
<circle cx="612.9" cy="292.0" r="1.0" fill="#e8301c"/><circle cx="614.3" cy="292.0" r="0.8" fill="#f4c0d0"/>
<circle cx="621.0" cy="292.0" r="3.05" fill="#fff" stroke="#161616" stroke-width="1.05"/>
<circle cx="620.3" cy="292.0" r="1.0" fill="#e8301c"/><circle cx="621.7" cy="292.0" r="0.8" fill="#f4c0d0"/>
<circle cx="628.5" cy="292.0" r="3.05" fill="#fff" stroke="#161616" stroke-width="1.05"/>
<circle cx="627.8" cy="292.0" r="1.0" fill="#e8301c"/><circle cx="629.2" cy="292.0" r="0.8" fill="#f4c0d0"/>
<circle cx="635.9" cy="292.0" r="3.05" fill="#fff" stroke="#161616" stroke-width="1.05"/>
<circle cx="635.2" cy="292.0" r="1.0" fill="#e8301c"/><circle cx="636.6" cy="292.0" r="0.8" fill="#f4c0d0"/>
<circle cx="643.3" cy="292.0" r="3.05" fill="#fff" stroke="#161616" stroke-width="1.05"/>
<circle cx="642.6" cy="292.0" r="1.0" fill="#e8301c"/><circle cx="644.0" cy="292.0" r="0.8" fill="#f4c0d0"/>
<circle cx="650.7" cy="292.0" r="3.05" fill="#fff" stroke="#161616" stroke-width="1.05"/>
<circle cx="650.0" cy="292.0" r="1.0" fill="#e8301c"/><circle cx="651.4" cy="292.0" r="0.8" fill="#f4c0d0"/>
<circle cx="658.1" cy="292.0" r="3.05" fill="#fff" stroke="#161616" stroke-width="1.05"/>
<circle cx="657.4" cy="292.0" r="1.0" fill="#e8301c"/><circle cx="658.8" cy="292.0" r="0.8" fill="#f4c0d0"/>
<circle cx="665.5" cy="292.0" r="3.05" fill="#fff" stroke="#161616" stroke-width="1.05"/>
<circle cx="664.8" cy="292.0" r="1.0" fill="#e8301c"/><circle cx="666.2" cy="292.0" r="0.8" fill="#f4c0d0"/>
<circle cx="673.0" cy="292.0" r="3.05" fill="#fff" stroke="#161616" stroke-width="1.05"/>
<circle cx="672.3" cy="292.0" r="1.0" fill="#e8301c"/><circle cx="673.7" cy="292.0" r="0.8" fill="#f4c0d0"/>
<polygon points="676.4,288.4 684.4,288.4 680.4,295.6" fill="#fff" stroke="#161616" stroke-width="1.05"/>
<polygon points="468.6,295.8 476.6,295.8 472.6,303.0" fill="#fff" stroke="#161616" stroke-width="1.05"/>
<circle cx="480.1" cy="299.4" r="3.3" fill="#7a1000" stroke="#3a0800" stroke-width="0.6"/>
<circle cx="479.4" cy="299.1" r="1.1" fill="#f0d0c0"/>
<polygon points="483.5,303.0 491.5,303.0 487.5,295.8" fill="#fff" stroke="#161616" stroke-width="1.05"/>
<circle cx="487.5" cy="300.2" r="1.2" fill="#1530e0"/>
<circle cx="494.9" cy="299.4" r="3.3" fill="#7a1000" stroke="#3a0800" stroke-width="0.6"/>
<circle cx="494.3" cy="299.1" r="1.1" fill="#f0d0c0"/>
<circle cx="502.3" cy="299.4" r="3.05" fill="#fff" stroke="#161616" stroke-width="1.05"/>
<circle cx="501.6" cy="299.4" r="1.0" fill="#e8301c"/><circle cx="503.0" cy="299.4" r="0.8" fill="#f4c0d0"/>
<circle cx="509.7" cy="299.4" r="3.05" fill="#fff" stroke="#161616" stroke-width="1.05"/>
<circle cx="509.0" cy="299.4" r="1.0" fill="#e8301c"/><circle cx="510.4" cy="299.4" r="0.8" fill="#f4c0d0"/>
<circle cx="517.1" cy="299.4" r="3.05" fill="#fff" stroke="#161616" stroke-width="1.05"/>
<circle cx="516.4" cy="299.4" r="1.0" fill="#e8301c"/><circle cx="517.9" cy="299.4" r="0.8" fill="#f4c0d0"/>
<circle cx="524.6" cy="299.4" r="3.05" fill="#fff" stroke="#161616" stroke-width="1.05"/>
<circle cx="523.9" cy="299.4" r="1.0" fill="#e8301c"/><circle cx="525.3" cy="299.4" r="0.8" fill="#f4c0d0"/>
<circle cx="532.0" cy="299.4" r="3.05" fill="#fff" stroke="#161616" stroke-width="1.05"/>
<circle cx="531.3" cy="299.4" r="1.0" fill="#e8301c"/><circle cx="532.7" cy="299.4" r="0.8" fill="#f4c0d0"/>
<circle cx="539.4" cy="299.4" r="3.05" fill="#fff" stroke="#161616" stroke-width="1.05"/>
<circle cx="538.7" cy="299.4" r="1.0" fill="#e8301c"/><circle cx="540.1" cy="299.4" r="0.8" fill="#f4c0d0"/>
<circle cx="546.8" cy="299.4" r="3.05" fill="#fff" stroke="#161616" stroke-width="1.05"/>
<circle cx="546.1" cy="299.4" r="1.0" fill="#e8301c"/><circle cx="547.5" cy="299.4" r="0.8" fill="#f4c0d0"/>
<polygon points="550.2,295.8 558.2,295.8 554.2,303.0" fill="#fff" stroke="#161616" stroke-width="1.05"/>
<circle cx="561.7" cy="299.4" r="3.05" fill="#fff" stroke="#161616" stroke-width="1.05"/>
<circle cx="561.0" cy="299.4" r="1.0" fill="#e8301c"/><circle cx="562.4" cy="299.4" r="0.8" fill="#f4c0d0"/>
<polygon points="565.1,303.0 573.1,303.0 569.1,295.8" fill="#fff" stroke="#161616" stroke-width="1.05"/>
<circle cx="569.1" cy="300.2" r="1.2" fill="#1530e0"/>
<polygon points="572.5,303.0 580.5,303.0 576.5,295.8" fill="#fff" stroke="#161616" stroke-width="1.05"/>
<circle cx="576.5" cy="300.2" r="1.2" fill="#1530e0"/>
<circle cx="583.9" cy="299.4" r="3.05" fill="#fff" stroke="#161616" stroke-width="1.05"/>
<circle cx="583.2" cy="299.4" r="1.0" fill="#e8301c"/><circle cx="584.6" cy="299.4" r="0.8" fill="#f4c0d0"/>
<polygon points="587.4,295.8 595.4,295.8 591.4,303.0" fill="#fff" stroke="#161616" stroke-width="1.05"/>
<circle cx="598.8" cy="299.4" r="3.05" fill="#fff" stroke="#161616" stroke-width="1.05"/>
<circle cx="598.1" cy="299.4" r="1.0" fill="#e8301c"/><circle cx="599.5" cy="299.4" r="0.8" fill="#f4c0d0"/>
<circle cx="606.2" cy="299.4" r="3.05" fill="#fff" stroke="#161616" stroke-width="1.05"/>
<circle cx="605.5" cy="299.4" r="1.0" fill="#e8301c"/><circle cx="606.9" cy="299.4" r="0.8" fill="#f4c0d0"/>
<circle cx="613.6" cy="299.4" r="3.05" fill="#fff" stroke="#161616" stroke-width="1.05"/>
<circle cx="612.9" cy="299.4" r="1.0" fill="#e8301c"/><circle cx="614.3" cy="299.4" r="0.8" fill="#f4c0d0"/>
<circle cx="621.0" cy="299.4" r="3.05" fill="#fff" stroke="#161616" stroke-width="1.05"/>
<circle cx="620.3" cy="299.4" r="1.0" fill="#e8301c"/><circle cx="621.7" cy="299.4" r="0.8" fill="#f4c0d0"/>
<circle cx="628.5" cy="299.4" r="3.05" fill="#fff" stroke="#161616" stroke-width="1.05"/>
<circle cx="627.8" cy="299.4" r="1.0" fill="#e8301c"/><circle cx="629.2" cy="299.4" r="0.8" fill="#f4c0d0"/>
<circle cx="635.9" cy="299.4" r="3.05" fill="#fff" stroke="#161616" stroke-width="1.05"/>
<circle cx="635.2" cy="299.4" r="1.0" fill="#e8301c"/><circle cx="636.6" cy="299.4" r="0.8" fill="#f4c0d0"/>
<circle cx="643.3" cy="299.4" r="3.05" fill="#fff" stroke="#161616" stroke-width="1.05"/>
<circle cx="642.6" cy="299.4" r="1.0" fill="#e8301c"/><circle cx="644.0" cy="299.4" r="0.8" fill="#f4c0d0"/>
<circle cx="650.7" cy="299.4" r="3.05" fill="#fff" stroke="#161616" stroke-width="1.05"/>
<circle cx="650.0" cy="299.4" r="1.0" fill="#e8301c"/><circle cx="651.4" cy="299.4" r="0.8" fill="#f4c0d0"/>
<polygon points="654.1,303.0 662.1,303.0 658.1,295.8" fill="#fff" stroke="#161616" stroke-width="1.05"/>
<circle cx="658.1" cy="300.2" r="1.2" fill="#1530e0"/>
<circle cx="665.5" cy="299.4" r="3.05" fill="#fff" stroke="#161616" stroke-width="1.05"/>
<circle cx="664.8" cy="299.4" r="1.0" fill="#e8301c"/><circle cx="666.2" cy="299.4" r="0.8" fill="#f4c0d0"/>
<polygon points="669.0,295.8 677.0,295.8 673.0,303.0" fill="#fff" stroke="#161616" stroke-width="1.05"/>
<rect x="464.2" y="77.0" width="2" height="1.3" fill="#504030" opacity="0.8"/>
<rect x="464.2" y="305.3" width="2" height="1.3" fill="#504030" opacity="0.8"/>
<rect x="471.6" y="77.0" width="2" height="1.3" fill="#504030" opacity="0.8"/>
<rect x="471.6" y="305.3" width="2" height="1.3" fill="#504030" opacity="0.8"/>
<rect x="479.1" y="77.0" width="2" height="1.3" fill="#504030" opacity="0.8"/>
<rect x="479.1" y="305.3" width="2" height="1.3" fill="#504030" opacity="0.8"/>
<rect x="486.5" y="77.0" width="2" height="1.3" fill="#504030" opacity="0.8"/>
<rect x="486.5" y="305.3" width="2" height="1.3" fill="#504030" opacity="0.8"/>
<rect x="493.9" y="77.0" width="2" height="1.3" fill="#504030" opacity="0.8"/>
<rect x="493.9" y="305.3" width="2" height="1.3" fill="#504030" opacity="0.8"/>
<rect x="501.3" y="77.0" width="2" height="1.3" fill="#504030" opacity="0.8"/>
<rect x="501.3" y="305.3" width="2" height="1.3" fill="#504030" opacity="0.8"/>
<rect x="508.7" y="77.0" width="2" height="1.3" fill="#504030" opacity="0.8"/>
<rect x="508.7" y="305.3" width="2" height="1.3" fill="#504030" opacity="0.8"/>
<rect x="516.1" y="77.0" width="2" height="1.3" fill="#504030" opacity="0.8"/>
<rect x="516.1" y="305.3" width="2" height="1.3" fill="#504030" opacity="0.8"/>
<rect x="523.6" y="77.0" width="2" height="1.3" fill="#504030" opacity="0.8"/>
<rect x="523.6" y="305.3" width="2" height="1.3" fill="#504030" opacity="0.8"/>
<rect x="531.0" y="77.0" width="2" height="1.3" fill="#504030" opacity="0.8"/>
<rect x="531.0" y="305.3" width="2" height="1.3" fill="#504030" opacity="0.8"/>
<rect x="538.4" y="77.0" width="2" height="1.3" fill="#504030" opacity="0.8"/>
<rect x="538.4" y="305.3" width="2" height="1.3" fill="#504030" opacity="0.8"/>
<rect x="545.8" y="77.0" width="2" height="1.3" fill="#504030" opacity="0.8"/>
<rect x="545.8" y="305.3" width="2" height="1.3" fill="#504030" opacity="0.8"/>
<rect x="553.2" y="77.0" width="2" height="1.3" fill="#504030" opacity="0.8"/>
<rect x="553.2" y="305.3" width="2" height="1.3" fill="#504030" opacity="0.8"/>
<rect x="560.7" y="77.0" width="2" height="1.3" fill="#504030" opacity="0.8"/>
<rect x="560.7" y="305.3" width="2" height="1.3" fill="#504030" opacity="0.8"/>
<rect x="568.1" y="77.0" width="2" height="1.3" fill="#504030" opacity="0.8"/>
<rect x="568.1" y="305.3" width="2" height="1.3" fill="#504030" opacity="0.8"/>
<rect x="575.5" y="77.0" width="2" height="1.3" fill="#504030" opacity="0.8"/>
<rect x="575.5" y="305.3" width="2" height="1.3" fill="#504030" opacity="0.8"/>
<rect x="582.9" y="77.0" width="2" height="1.3" fill="#504030" opacity="0.8"/>
<rect x="582.9" y="305.3" width="2" height="1.3" fill="#504030" opacity="0.8"/>
<rect x="590.4" y="77.0" width="2" height="1.3" fill="#504030" opacity="0.8"/>
<rect x="590.4" y="305.3" width="2" height="1.3" fill="#504030" opacity="0.8"/>
<rect x="597.8" y="77.0" width="2" height="1.3" fill="#504030" opacity="0.8"/>
<rect x="597.8" y="305.3" width="2" height="1.3" fill="#504030" opacity="0.8"/>
<rect x="605.2" y="77.0" width="2" height="1.3" fill="#504030" opacity="0.8"/>
<rect x="605.2" y="305.3" width="2" height="1.3" fill="#504030" opacity="0.8"/>
<rect x="612.6" y="77.0" width="2" height="1.3" fill="#504030" opacity="0.8"/>
<rect x="612.6" y="305.3" width="2" height="1.3" fill="#504030" opacity="0.8"/>
<rect x="620.0" y="77.0" width="2" height="1.3" fill="#504030" opacity="0.8"/>
<rect x="620.0" y="305.3" width="2" height="1.3" fill="#504030" opacity="0.8"/>
<rect x="627.5" y="77.0" width="2" height="1.3" fill="#504030" opacity="0.8"/>
<rect x="627.5" y="305.3" width="2" height="1.3" fill="#504030" opacity="0.8"/>
<rect x="634.9" y="77.0" width="2" height="1.3" fill="#504030" opacity="0.8"/>
<rect x="634.9" y="305.3" width="2" height="1.3" fill="#504030" opacity="0.8"/>
<rect x="642.3" y="77.0" width="2" height="1.3" fill="#504030" opacity="0.8"/>
<rect x="642.3" y="305.3" width="2" height="1.3" fill="#504030" opacity="0.8"/>
<rect x="649.7" y="77.0" width="2" height="1.3" fill="#504030" opacity="0.8"/>
<rect x="649.7" y="305.3" width="2" height="1.3" fill="#504030" opacity="0.8"/>
<rect x="657.1" y="77.0" width="2" height="1.3" fill="#504030" opacity="0.8"/>
<rect x="657.1" y="305.3" width="2" height="1.3" fill="#504030" opacity="0.8"/>
<rect x="664.5" y="77.0" width="2" height="1.3" fill="#504030" opacity="0.8"/>
<rect x="664.5" y="305.3" width="2" height="1.3" fill="#504030" opacity="0.8"/>
<rect x="672.0" y="77.0" width="2" height="1.3" fill="#504030" opacity="0.8"/>
<rect x="672.0" y="305.3" width="2" height="1.3" fill="#504030" opacity="0.8"/>
<rect x="679.4" y="77.0" width="2" height="1.3" fill="#504030" opacity="0.8"/>
<rect x="679.4" y="305.3" width="2" height="1.3" fill="#504030" opacity="0.8"/>
<rect x="457.0" y="83.5" width="2" height="1.3" fill="#282828" opacity="0.85"/>
<rect x="686.6" y="83.5" width="2.5" height="1.3" fill="#282828" opacity="0.85"/>
<rect x="457.0" y="90.9" width="2" height="1.3" fill="#282828" opacity="0.85"/>
<rect x="686.6" y="90.9" width="2.5" height="1.3" fill="#282828" opacity="0.85"/>
<rect x="457.0" y="98.3" width="2" height="1.3" fill="#282828" opacity="0.85"/>
<rect x="686.6" y="98.3" width="2.5" height="1.3" fill="#282828" opacity="0.85"/>
<rect x="457.0" y="105.8" width="2" height="1.3" fill="#282828" opacity="0.85"/>
<rect x="686.6" y="105.8" width="2.5" height="1.3" fill="#282828" opacity="0.85"/>
<rect x="457.0" y="113.2" width="2" height="1.3" fill="#282828" opacity="0.85"/>
<rect x="686.6" y="113.2" width="2.5" height="1.3" fill="#282828" opacity="0.85"/>
<rect x="457.0" y="120.6" width="2" height="1.3" fill="#282828" opacity="0.85"/>
<rect x="686.6" y="120.6" width="2.5" height="1.3" fill="#282828" opacity="0.85"/>
<rect x="457.0" y="128.0" width="2" height="1.3" fill="#282828" opacity="0.85"/>
<rect x="686.6" y="128.0" width="2.5" height="1.3" fill="#282828" opacity="0.85"/>
<rect x="457.0" y="135.5" width="2" height="1.3" fill="#282828" opacity="0.85"/>
<rect x="686.6" y="135.5" width="2.5" height="1.3" fill="#282828" opacity="0.85"/>
<rect x="457.0" y="142.9" width="2" height="1.3" fill="#282828" opacity="0.85"/>
<rect x="686.6" y="142.9" width="2.5" height="1.3" fill="#282828" opacity="0.85"/>
<rect x="457.0" y="150.3" width="2" height="1.3" fill="#282828" opacity="0.85"/>
<rect x="686.6" y="150.3" width="2.5" height="1.3" fill="#282828" opacity="0.85"/>
<rect x="457.0" y="157.7" width="2" height="1.3" fill="#282828" opacity="0.85"/>
<rect x="686.6" y="157.7" width="2.5" height="1.3" fill="#282828" opacity="0.85"/>
<rect x="457.0" y="165.1" width="2" height="1.3" fill="#282828" opacity="0.85"/>
<rect x="686.6" y="165.1" width="2.5" height="1.3" fill="#282828" opacity="0.85"/>
<rect x="457.0" y="172.6" width="2" height="1.3" fill="#282828" opacity="0.85"/>
<rect x="686.6" y="172.6" width="2.5" height="1.3" fill="#282828" opacity="0.85"/>
<rect x="457.0" y="180.0" width="2" height="1.3" fill="#282828" opacity="0.85"/>
<rect x="686.6" y="180.0" width="2.5" height="1.3" fill="#282828" opacity="0.85"/>
<rect x="457.0" y="187.4" width="2" height="1.3" fill="#282828" opacity="0.85"/>
<rect x="686.6" y="187.4" width="2.5" height="1.3" fill="#282828" opacity="0.85"/>
<rect x="457.0" y="194.8" width="2" height="1.3" fill="#282828" opacity="0.85"/>
<rect x="686.6" y="194.8" width="2.5" height="1.3" fill="#282828" opacity="0.85"/>
<rect x="457.0" y="202.2" width="2" height="1.3" fill="#282828" opacity="0.85"/>
<rect x="686.6" y="202.2" width="2.5" height="1.3" fill="#282828" opacity="0.85"/>
<rect x="457.0" y="209.7" width="2" height="1.3" fill="#282828" opacity="0.85"/>
<rect x="686.6" y="209.7" width="2.5" height="1.3" fill="#282828" opacity="0.85"/>
<rect x="457.0" y="217.1" width="2" height="1.3" fill="#282828" opacity="0.85"/>
<rect x="686.6" y="217.1" width="2.5" height="1.3" fill="#282828" opacity="0.85"/>
<rect x="457.0" y="224.5" width="2" height="1.3" fill="#282828" opacity="0.85"/>
<rect x="686.6" y="224.5" width="2.5" height="1.3" fill="#282828" opacity="0.85"/>
<rect x="457.0" y="231.9" width="2" height="1.3" fill="#282828" opacity="0.85"/>
<rect x="686.6" y="231.9" width="2.5" height="1.3" fill="#282828" opacity="0.85"/>
<rect x="457.0" y="239.3" width="2" height="1.3" fill="#282828" opacity="0.85"/>
<rect x="686.6" y="239.3" width="2.5" height="1.3" fill="#282828" opacity="0.85"/>
<rect x="457.0" y="246.8" width="2" height="1.3" fill="#282828" opacity="0.85"/>
<rect x="686.6" y="246.8" width="2.5" height="1.3" fill="#282828" opacity="0.85"/>
<rect x="457.0" y="254.2" width="2" height="1.3" fill="#282828" opacity="0.85"/>
<rect x="686.6" y="254.2" width="2.5" height="1.3" fill="#282828" opacity="0.85"/>
<rect x="457.0" y="261.6" width="2" height="1.3" fill="#282828" opacity="0.85"/>
<rect x="686.6" y="261.6" width="2.5" height="1.3" fill="#282828" opacity="0.85"/>
<rect x="457.0" y="269.0" width="2" height="1.3" fill="#282828" opacity="0.85"/>
<rect x="686.6" y="269.0" width="2.5" height="1.3" fill="#282828" opacity="0.85"/>
<rect x="457.0" y="276.4" width="2" height="1.3" fill="#282828" opacity="0.85"/>
<rect x="686.6" y="276.4" width="2.5" height="1.3" fill="#282828" opacity="0.85"/>
<rect x="457.0" y="283.9" width="2" height="1.3" fill="#282828" opacity="0.85"/>
<rect x="686.6" y="283.9" width="2.5" height="1.3" fill="#282828" opacity="0.85"/>
<rect x="457.0" y="291.3" width="2" height="1.3" fill="#282828" opacity="0.85"/>
<rect x="686.6" y="291.3" width="2.5" height="1.3" fill="#282828" opacity="0.85"/>
<rect x="457.0" y="298.7" width="2" height="1.3" fill="#282828" opacity="0.85"/>
<rect x="686.6" y="298.7" width="2.5" height="1.3" fill="#282828" opacity="0.85"/>
<circle cx="458" cy="77" r="2" fill="#f01010"/>
<rect x="525" y="66" width="22.5" height="7.5" fill="#fbe0e4" stroke="#b8b8b8" stroke-width="0.7"/>
<rect x="533" y="68.2" width="6" height="0.9" fill="#444"/>
<rect x="528" y="70.3" width="16" height="0.9" fill="#555"/>
<rect x="606.5" y="66" width="22.5" height="7.5" fill="#f6c8f4" stroke="#b8b8b8" stroke-width="0.7"/>
<rect x="614.5" y="68.2" width="6" height="0.9" fill="#444"/>
<rect x="609.5" y="70.3" width="16" height="0.9" fill="#555"/>
<rect x="432" y="155" width="22.5" height="7.5" fill="#e8eee6" stroke="#b8b8b8" stroke-width="0.7"/>
<rect x="440" y="157.2" width="6" height="0.9" fill="#444"/>
<rect x="435" y="159.3" width="16" height="0.9" fill="#555"/>
<rect x="432" y="229" width="22.5" height="7.5" fill="#dcf2f6" stroke="#b8b8b8" stroke-width="0.7"/>
<rect x="440" y="231.2" width="6" height="0.9" fill="#444"/>
<rect x="435" y="233.3" width="16" height="0.9" fill="#555"/>
<rect x="691" y="155.5" width="22.5" height="7.5" fill="#ecebd8" stroke="#b8b8b8" stroke-width="0.7"/>
<rect x="699" y="157.7" width="6" height="0.9" fill="#444"/>
<rect x="694" y="159.8" width="16" height="0.9" fill="#555"/>
<rect x="691" y="229" width="22.5" height="7.5" fill="#f8e0d0" stroke="#b8b8b8" stroke-width="0.7"/>
<rect x="699" y="231.2" width="6" height="0.9" fill="#444"/>
<rect x="694" y="233.3" width="16" height="0.9" fill="#555"/>
<rect x="517" y="310.5" width="22.5" height="7.5" fill="#f8f6d0" stroke="#b8b8b8" stroke-width="0.7"/>
<rect x="525" y="312.7" width="6" height="0.9" fill="#444"/>
<rect x="520" y="314.8" width="16" height="0.9" fill="#555"/>
<rect x="599" y="310.5" width="22.5" height="7.5" fill="#e0f2d0" stroke="#b8b8b8" stroke-width="0.7"/>
<rect x="607" y="312.7" width="6" height="0.9" fill="#444"/>
<rect x="602" y="314.8" width="16" height="0.9" fill="#555"/>
</svg>
<div class="a" style="left:29px;top:324px;width:814px;height:4px;background:linear-gradient(#a0a0a0,#b4b4b4)"></div>
<div class="a" style="left:32px;top:331px;width:811px;height:645px;background:#f0f0f0;border-left:1px solid #a0a0a0;border-top:1px solid #a0a0a0"></div>
<div class="a" style="left:32px;top:331px;width:17px;height:645px;border-right:1px solid #a0a0a0"></div>
<svg class="a" style="left:32px;top:331px" width="17" height="60" viewBox="0 0 17 60"><path d="M5.5 4.5 L12 11 M12 4.5 L5.5 11" stroke="#000" stroke-width="1.6"/><path d="M7.5 18.5 h5 v4 h-5z M5.5 21.5 h5 v4.5 h-5z" fill="#fff" stroke="#000" stroke-width="1.3"/><path d="M7 31.5 h3.5 v5.5 h-3.5z M5 37.5 h7.5 M8.7 37.5 v4.5" fill="none" stroke="#000" stroke-width="1.3"/></svg>
<div class="t" style="left:53.50px;top:332.77px;font-size:11.5px;transform:scaleX(0.9068);transform-origin:0.00px 0;">Named:</div>
<div class="a" style="left:91px;top:329px;width:80px;height:20px;background:#fff;border:1px solid #c9cdd4;border-radius:2px"></div>
<div class="t" style="left:96.5px;top:334px;font-size:12px;color:#112">*</div>
<svg class="a" style="left:158px;top:337px" width="9" height="6"><path d="M0 0 H8 L4 5z" fill="#000"/></svg>
<div class="a" style="left:172px;top:329px;width:21px;height:20px;background:linear-gradient(#e4e4e4,#cfcfcf);border:1px solid #707070;border-radius:3px"></div>
<svg class="a" style="left:172px;top:329px" width="21" height="20" viewBox="0 0 21 20"><path d="M2.5 2.5 L8.5 8.5 M8.5 2.5 L2.5 8.5 M5.5 1 V10 M1 5.5 H10" stroke="#f4b400" stroke-width="1"/><path d="M7.5 8.5 L4 12.5 L7.5 16.5 M10.5 8.5 L7 12.5 L10.5 16.5 M11.5 8.5 L15 12.5 L11.5 16.5 M14.5 8.5 L18 12.5 L14.5 16.5" fill="none" stroke="#3a5490" stroke-width="1.1"/></svg>
<div class="t" style="left:196.50px;top:332.77px;font-size:11.5px;transform:scaleX(0.9130);transform-origin:0.00px 0;">Edit:</div>
<div class="a" style="left:220px;top:329px;width:21px;height:20px;background:#ececec;border:1px solid #c4c4c4;border-radius:3px"></div>
<svg class="a" style="left:220px;top:329px" width="21" height="20"><path d="M5 5 L15 15 M15 5 L5 15" stroke="#a8a8a8" stroke-width="2.6"/></svg>
<div class="a" style="left:243px;top:329px;width:21px;height:20px;background:#ececec;border:1px solid #c4c4c4;border-radius:3px"></div>
<svg class="a" style="left:243px;top:329px" width="21" height="20"><path d="M4 10 L8.5 14.5 L17 5" fill="none" stroke="#a8a8a8" stroke-width="2.6"/></svg>
<div class="a" style="left:265px;top:329px;width:600px;height:20px;background:#fff;border:1px solid #8e9196"></div>
<div class="t" style="left:36.5px;top:981px;font-size:11.5px;transform:rotate(-90deg) scaleX(0.87);transform-origin:0 0">All Pins</div>
<svg width="0" height="0" style="position:absolute"><defs><linearGradient id="pg" x1="0" y1="0" x2="0" y2="1"><stop offset="0" stop-color="#f4f4f4"/><stop offset="1" stop-color="#b8b8b8"/></linearGradient></defs></svg>
<div class="a" style="left:51px;top:350px;width:792px;height:626px;background:#fff;border-top:1px solid #828790;border-left:1px solid #828790;overflow:hidden">
<div class="a" style="left:0;top:0;width:800px;height:20px;background:linear-gradient(#fff 0,#fff 8px,#f2f3f5 9px,#eff0f2 20px)"></div>
<div class="a" style="left:0px;top:0;width:150px;height:20px;border-right:1px solid #dcdde0;border-bottom:1px solid #d5d5d5;box-shadow:inset 1px 0 0 #fff"></div>
<div class="t" style="left:0px;top:6px;width:150px;text-align:center">Node Name</div>
<div class="a" style="left:150px;top:0;width:100px;height:20px;border-right:1px solid #dcdde0;border-bottom:1px solid #d5d5d5;box-shadow:inset 1px 0 0 #fff"></div>
<div class="t" style="left:150px;top:6px;width:100px;text-align:center">Direction</div>
<div class="a" style="left:250px;top:0;width:100px;height:20px;border-right:1px solid #dcdde0;border-bottom:1px solid #d5d5d5;box-shadow:inset 1px 0 0 #fff"></div>
<div class="t" style="left:250px;top:6px;width:100px;text-align:center">Location</div>
<div class="a" style="left:350px;top:0;width:100px;height:20px;border-right:1px solid #dcdde0;border-bottom:1px solid #d5d5d5;box-shadow:inset 1px 0 0 #fff"></div>
<div class="t" style="left:350px;top:6px;width:100px;text-align:center">I/O Bank</div>
<div class="a" style="left:450px;top:0;width:100px;height:20px;border-right:1px solid #dcdde0;border-bottom:1px solid #d5d5d5;box-shadow:inset 1px 0 0 #fff"></div>
<div class="t" style="left:450px;top:6px;width:100px;text-align:center">VREF Group</div>
<div class="a" style="left:550px;top:0;width:100px;height:20px;border-right:1px solid #dcdde0;border-bottom:1px solid #d5d5d5;box-shadow:inset 1px 0 0 #fff"></div>
<div class="t" style="left:550px;top:6px;width:100px;text-align:center">Fitter Location</div>
<div class="a" style="left:650px;top:0;width:100px;height:20px;border-right:1px solid #dcdde0;border-bottom:1px solid #d5d5d5;box-shadow:inset 1px 0 0 #fff"></div>
<div class="t" style="left:650px;top:6px;width:100px;text-align:center">I/O Standard</div>
<div class="a" style="left:750px;top:0;width:100px;height:20px;border-right:1px solid #dcdde0;border-bottom:1px solid #d5d5d5;box-shadow:inset 1px 0 0 #fff"></div>
<div class="t" style="left:750px;top:6px;width:100px;text-align:center">Reserved</div>
<div class="a" style="left:0;top:21px;width:800px;height:16px;background:#fefcd9;border-bottom:1px solid #d6d6d6">
<svg class="a" style="left:3px;top:2px;overflow:visible" width="18" height="14" viewBox="0 0 18 14"><text x="0" y="5.7" font-size="9.6" font-family="Liberation Sans" fill="#2a4cc4" letter-spacing="0.45" >out</text><path d="M0.3 10.4 H4" stroke="#e82020" stroke-width="1.1"/><path d="M4.5 7.6 H13 L15.8 10.3 L13 13 H4.5z" fill="url(#pg)" stroke="#a8b8d0" stroke-width="0.8"/><path d="M13 7.3 L16 10.3 L13 13.3" fill="none" stroke="#2a3a5a" stroke-width="1.1"/></svg>
<div class="a" style="left:149px;top:0;width:1px;height:16px;background:#d6d6d6"></div>
<div class="t" style="left:24px;top:4px">beep</div>
<div class="a" style="left:249px;top:0;width:1px;height:16px;background:#d6d6d6"></div>
<div class="t" style="left:152px;top:4px">Output</div>
<div class="a" style="left:349px;top:0;width:1px;height:16px;background:#d6d6d6"></div>
<div class="t" style="left:252px;top:4px">PIN_AK3</div>
<div class="a" style="left:449px;top:0;width:1px;height:16px;background:#d6d6d6"></div>
<div class="t" style="left:352px;top:4px">8</div>
<div class="a" style="left:549px;top:0;width:1px;height:16px;background:#d6d6d6"></div>
<div class="t" style="left:452px;top:4px">B8_N3</div>
<div class="a" style="left:649px;top:0;width:1px;height:16px;background:#d6d6d6"></div>
<div class="t" style="left:552px;top:4px">PIN_AK3</div>
<div class="a" style="left:749px;top:0;width:1px;height:16px;background:#d6d6d6"></div>
<div class="t" style="left:652px;top:4px">2.5 V (default)</div>
</div>
<div class="a" style="left:0;top:37px;width:800px;height:16px;background:#e2fcd2;border-bottom:1px solid #d6d6d6">
<svg class="a" style="left:3px;top:2px;overflow:visible" width="18" height="14" viewBox="0 0 18 14"><text x="0.6" y="6" font-size="9.6" font-family="Liberation Sans" fill="#2a4cc4" letter-spacing="0.5" >in</text><path d="M12.3 10.4 H16.5" stroke="#e82020" stroke-width="1.1"/><path d="M0.5 7.6 H9 L11.8 10.3 L9 13 H0.5z" fill="url(#pg)" stroke="#a8b8d0" stroke-width="0.8"/><path d="M9 7.3 L12 10.3 L9 13.3" fill="none" stroke="#2a3a5a" stroke-width="1.1"/></svg>
<div class="a" style="left:149px;top:0;width:1px;height:16px;background:#d6d6d6"></div>
<div class="t" style="left:24px;top:4px">clk_in</div>
<div class="a" style="left:249px;top:0;width:1px;height:16px;background:#d6d6d6"></div>
<div class="t" style="left:152px;top:4px">Input</div>
<div class="a" style="left:349px;top:0;width:1px;height:16px;background:#d6d6d6"></div>
<div class="t" style="left:252px;top:4px">PIN_AD15</div>
<div class="a" style="left:449px;top:0;width:1px;height:16px;background:#d6d6d6"></div>
<div class="t" style="left:352px;top:4px">7</div>
<div class="a" style="left:549px;top:0;width:1px;height:16px;background:#d6d6d6"></div>
<div class="t" style="left:452px;top:4px">B7_N3</div>
<div class="a" style="left:649px;top:0;width:1px;height:16px;background:#d6d6d6"></div>
<div class="t" style="left:552px;top:4px">PIN_AD15</div>
<div class="a" style="left:749px;top:0;width:1px;height:16px;background:#d6d6d6"></div>
<div class="t" style="left:652px;top:4px">2.5 V (default)</div>
</div>
<div class="a" style="left:0;top:53px;width:800px;height:16px;background:#f3e0d0;border-bottom:1px solid #d6d6d6">
<svg class="a" style="left:3px;top:2px;overflow:visible" width="18" height="14" viewBox="0 0 18 14"><text x="0.6" y="6" font-size="9.6" font-family="Liberation Sans" fill="#2a4cc4" letter-spacing="0.5" >in</text><path d="M12.3 10.4 H16.5" stroke="#e82020" stroke-width="1.1"/><path d="M0.5 7.6 H9 L11.8 10.3 L9 13 H0.5z" fill="url(#pg)" stroke="#a8b8d0" stroke-width="0.8"/><path d="M9 7.3 L12 10.3 L9 13.3" fill="none" stroke="#2a3a5a" stroke-width="1.1"/></svg>
<div class="a" style="left:149px;top:0;width:1px;height:16px;background:#d6d6d6"></div>
<div class="t" style="left:24px;top:4px">coin_05_key</div>
<div class="a" style="left:249px;top:0;width:1px;height:16px;background:#d6d6d6"></div>
<div class="t" style="left:152px;top:4px">Input</div>
<div class="a" style="left:349px;top:0;width:1px;height:16px;background:#d6d6d6"></div>
<div class="t" style="left:252px;top:4px">PIN_T29</div>
<div class="a" style="left:449px;top:0;width:1px;height:16px;background:#d6d6d6"></div>
<div class="t" style="left:352px;top:4px">6</div>
<div class="a" style="left:549px;top:0;width:1px;height:16px;background:#d6d6d6"></div>
<div class="t" style="left:452px;top:4px">B6_N0</div>
<div class="a" style="left:649px;top:0;width:1px;height:16px;background:#d6d6d6"></div>
<div class="t" style="left:552px;top:4px">PIN_T29</div>
<div class="a" style="left:749px;top:0;width:1px;height:16px;background:#d6d6d6"></div>
<div class="t" style="left:652px;top:4px">2.5 V (default)</div>
</div>
<div class="a" style="left:0;top:69px;width:800px;height:16px;background:#f3e0d0;border-bottom:1px solid #d6d6d6">
<svg class="a" style="left:3px;top:2px;overflow:visible" width="18" height="14" viewBox="0 0 18 14"><text x="0.6" y="6" font-size="9.6" font-family="Liberation Sans" fill="#2a4cc4" letter-spacing="0.5" >in</text><path d="M12.3 10.4 H16.5" stroke="#e82020" stroke-width="1.1"/><path d="M0.5 7.6 H9 L11.8 10.3 L9 13 H0.5z" fill="url(#pg)" stroke="#a8b8d0" stroke-width="0.8"/><path d="M9 7.3 L12 10.3 L9 13.3" fill="none" stroke="#2a3a5a" stroke-width="1.1"/></svg>
<div class="a" style="left:149px;top:0;width:1px;height:16px;background:#d6d6d6"></div>
<div class="t" style="left:24px;top:4px">coin_10_key</div>
<div class="a" style="left:249px;top:0;width:1px;height:16px;background:#d6d6d6"></div>
<div class="t" style="left:152px;top:4px">Input</div>
<div class="a" style="left:349px;top:0;width:1px;height:16px;background:#d6d6d6"></div>
<div class="t" style="left:252px;top:4px">PIN_T28</div>
<div class="a" style="left:449px;top:0;width:1px;height:16px;background:#d6d6d6"></div>
<div class="t" style="left:352px;top:4px">6</div>
<div class="a" style="left:549px;top:0;width:1px;height:16px;background:#d6d6d6"></div>
<div class="t" style="left:452px;top:4px">B6_N0</div>
<div class="a" style="left:649px;top:0;width:1px;height:16px;background:#d6d6d6"></div>
<div class="t" style="left:552px;top:4px">PIN_T28</div>
<div class="a" style="left:749px;top:0;width:1px;height:16px;background:#d6d6d6"></div>
<div class="t" style="left:652px;top:4px">2.5 V (default)</div>
</div>
<div class="a" style="left:0;top:85px;width:800px;height:16px;background:#f3e0d0;border-bottom:1px solid #d6d6d6">
<svg class="a" style="left:3px;top:2px;overflow:visible" width="18" height="14" viewBox="0 0 18 14"><text x="0.6" y="6" font-size="9.6" font-family="Liberation Sans" fill="#2a4cc4" letter-spacing="0.5" >in</text><path d="M12.3 10.4 H16.5" stroke="#e82020" stroke-width="1.1"/><path d="M0.5 7.6 H9 L11.8 10.3 L9 13 H0.5z" fill="url(#pg)" stroke="#a8b8d0" stroke-width="0.8"/><path d="M9 7.3 L12 10.3 L9 13.3" fill="none" stroke="#2a3a5a" stroke-width="1.1"/></svg>
<div class="a" style="left:149px;top:0;width:1px;height:16px;background:#d6d6d6"></div>
<div class="t" style="left:24px;top:4px">coin_50_key</div>
<div class="a" style="left:249px;top:0;width:1px;height:16px;background:#d6d6d6"></div>
<div class="t" style="left:152px;top:4px">Input</div>
<div class="a" style="left:349px;top:0;width:1px;height:16px;background:#d6d6d6"></div>
<div class="t" style="left:252px;top:4px">PIN_U30</div>
<div class="a" style="left:449px;top:0;width:1px;height:16px;background:#d6d6d6"></div>
<div class="t" style="left:352px;top:4px">6</div>
<div class="a" style="left:549px;top:0;width:1px;height:16px;background:#d6d6d6"></div>
<div class="t" style="left:452px;top:4px">B6_N0</div>
<div class="a" style="left:649px;top:0;width:1px;height:16px;background:#d6d6d6"></div>
<div class="t" style="left:552px;top:4px">PIN_U30</div>
<div class="a" style="left:749px;top:0;width:1px;height:16px;background:#d6d6d6"></div>
<div class="t" style="left:652px;top:4px">2.5 V (default)</div>
</div>
<div class="a" style="left:0;top:101px;width:800px;height:16px;background:#f3e0d0;border-bottom:1px solid #d6d6d6">
<svg class="a" style="left:3px;top:2px;overflow:visible" width="18" height="14" viewBox="0 0 18 14"><text x="0.6" y="6" font-size="9.6" font-family="Liberation Sans" fill="#2a4cc4" letter-spacing="0.5" >in</text><path d="M12.3 10.4 H16.5" stroke="#e82020" stroke-width="1.1"/><path d="M0.5 7.6 H9 L11.8 10.3 L9 13 H0.5z" fill="url(#pg)" stroke="#a8b8d0" stroke-width="0.8"/><path d="M9 7.3 L12 10.3 L9 13.3" fill="none" stroke="#2a3a5a" stroke-width="1.1"/></svg>
<div class="a" style="left:149px;top:0;width:1px;height:16px;background:#d6d6d6"></div>
<div class="t" style="left:24px;top:4px">confirm_p</div>
<div class="a" style="left:249px;top:0;width:1px;height:16px;background:#d6d6d6"></div>
<div class="t" style="left:152px;top:4px">Input</div>
<div class="a" style="left:349px;top:0;width:1px;height:16px;background:#d6d6d6"></div>
<div class="t" style="left:252px;top:4px">PIN_AC26</div>
<div class="a" style="left:449px;top:0;width:1px;height:16px;background:#d6d6d6"></div>
<div class="t" style="left:352px;top:4px">6</div>
<div class="a" style="left:549px;top:0;width:1px;height:16px;background:#d6d6d6"></div>
<div class="t" style="left:452px;top:4px">B6_N3</div>
<div class="a" style="left:649px;top:0;width:1px;height:16px;background:#d6d6d6"></div>
<div class="t" style="left:552px;top:4px">PIN_AC26</div>
<div class="a" style="left:749px;top:0;width:1px;height:16px;background:#d6d6d6"></div>
<div class="t" style="left:652px;top:4px">2.5 V (default)</div>
</div>
<div class="a" style="left:0;top:117px;width:800px;height:16px;background:#ffffff;border-bottom:1px solid #d6d6d6">
<svg class="a" style="left:3px;top:2px;overflow:visible" width="18" height="14" viewBox="0 0 18 14"><text x="0" y="5.7" font-size="9.6" font-family="Liberation Sans" fill="#2a4cc4" letter-spacing="0.45" >out</text><path d="M0.3 10.4 H4" stroke="#e82020" stroke-width="1.1"/><path d="M4.5 7.6 H13 L15.8 10.3 L13 13 H4.5z" fill="url(#pg)" stroke="#a8b8d0" stroke-width="0.8"/><path d="M13 7.3 L16 10.3 L13 13.3" fill="none" stroke="#2a3a5a" stroke-width="1.1"/></svg>
<div class="a" style="left:149px;top:0;width:1px;height:16px;background:#d6d6d6"></div>
<div class="t" style="left:24px;top:4px">HEX0[7]</div>
<div class="a" style="left:249px;top:0;width:1px;height:16px;background:#d6d6d6"></div>
<div class="t" style="left:152px;top:4px">Output</div>
<div class="a" style="left:349px;top:0;width:1px;height:16px;background:#d6d6d6"></div>
<div class="a" style="left:449px;top:0;width:1px;height:16px;background:#d6d6d6"></div>
<div class="a" style="left:549px;top:0;width:1px;height:16px;background:#d6d6d6"></div>
<div class="a" style="left:649px;top:0;width:1px;height:16px;background:#d6d6d6"></div>
<div class="t" style="left:552px;top:4px">PIN_AJ11</div>
<div class="a" style="left:749px;top:0;width:1px;height:16px;background:#d6d6d6"></div>
<div class="t" style="left:652px;top:4px">2.5 V (default)</div>
</div>
<div class="a" style="left:0;top:133px;width:800px;height:16px;background:#fefcd9;border-bottom:1px solid #d6d6d6">
<svg class="a" style="left:3px;top:2px;overflow:visible" width="18" height="14" viewBox="0 0 18 14"><text x="0" y="5.7" font-size="9.6" font-family="Liberation Sans" fill="#2a4cc4" letter-spacing="0.45" >out</text><path d="M0.3 10.4 H4" stroke="#e82020" stroke-width="1.1"/><path d="M4.5 7.6 H13 L15.8 10.3 L13 13 H4.5z" fill="url(#pg)" stroke="#a8b8d0" stroke-width="0.8"/><path d="M13 7.3 L16 10.3 L13 13.3" fill="none" stroke="#2a3a5a" stroke-width="1.1"/></svg>
<div class="a" style="left:149px;top:0;width:1px;height:16px;background:#d6d6d6"></div>
<div class="t" style="left:24px;top:4px">HEX0[6]</div>
<div class="a" style="left:249px;top:0;width:1px;height:16px;background:#d6d6d6"></div>
<div class="t" style="left:152px;top:4px">Output</div>
<div class="a" style="left:349px;top:0;width:1px;height:16px;background:#d6d6d6"></div>
<div class="t" style="left:252px;top:4px">PIN_AD12</div>
<div class="a" style="left:449px;top:0;width:1px;height:16px;background:#d6d6d6"></div>
<div class="t" style="left:352px;top:4px">8</div>
<div class="a" style="left:549px;top:0;width:1px;height:16px;background:#d6d6d6"></div>
<div class="t" style="left:452px;top:4px">B8_N1</div>
<div class="a" style="left:649px;top:0;width:1px;height:16px;background:#d6d6d6"></div>
<div class="t" style="left:552px;top:4px">PIN_AD12</div>
<div class="a" style="left:749px;top:0;width:1px;height:16px;background:#d6d6d6"></div>
<div class="t" style="left:652px;top:4px">2.5 V (default)</div>
</div>
<div class="a" style="left:0;top:149px;width:800px;height:16px;background:#fefcd9;border-bottom:1px solid #d6d6d6">
<svg class="a" style="left:3px;top:2px;overflow:visible" width="18" height="14" viewBox="0 0 18 14"><text x="0" y="5.7" font-size="9.6" font-family="Liberation Sans" fill="#2a4cc4" letter-spacing="0.45" >out</text><path d="M0.3 10.4 H4" stroke="#e82020" stroke-width="1.1"/><path d="M4.5 7.6 H13 L15.8 10.3 L13 13 H4.5z" fill="url(#pg)" stroke="#a8b8d0" stroke-width="0.8"/><path d="M13 7.3 L16 10.3 L13 13.3" fill="none" stroke="#2a3a5a" stroke-width="1.1"/></svg>
<div class="a" style="left:149px;top:0;width:1px;height:16px;background:#d6d6d6"></div>
<div class="t" style="left:24px;top:4px">HEX0[5]</div>
<div class="a" style="left:249px;top:0;width:1px;height:16px;background:#d6d6d6"></div>
<div class="t" style="left:152px;top:4px">Output</div>
<div class="a" style="left:349px;top:0;width:1px;height:16px;background:#d6d6d6"></div>
<div class="t" style="left:252px;top:4px">PIN_AD11</div>
<div class="a" style="left:449px;top:0;width:1px;height:16px;background:#d6d6d6"></div>
<div class="t" style="left:352px;top:4px">8</div>
<div class="a" style="left:549px;top:0;width:1px;height:16px;background:#d6d6d6"></div>
<div class="t" style="left:452px;top:4px">B8_N2</div>
<div class="a" style="left:649px;top:0;width:1px;height:16px;background:#d6d6d6"></div>
<div class="t" style="left:552px;top:4px">PIN_AD11</div>
<div class="a" style="left:749px;top:0;width:1px;height:16px;background:#d6d6d6"></div>
<div class="t" style="left:652px;top:4px">2.5 V (default)</div>
</div>
<div class="a" style="left:0;top:165px;width:800px;height:16px;background:#fefcd9;border-bottom:1px solid #d6d6d6">
<svg class="a" style="left:3px;top:2px;overflow:visible" width="18" height="14" viewBox="0 0 18 14"><text x="0" y="5.7" font-size="9.6" font-family="Liberation Sans" fill="#2a4cc4" letter-spacing="0.45" >out</text><path d="M0.3 10.4 H4" stroke="#e82020" stroke-width="1.1"/><path d="M4.5 7.6 H13 L15.8 10.3 L13 13 H4.5z" fill="url(#pg)" stroke="#a8b8d0" stroke-width="0.8"/><path d="M13 7.3 L16 10.3 L13 13.3" fill="none" stroke="#2a3a5a" stroke-width="1.1"/></svg>
<div class="a" style="left:149px;top:0;width:1px;height:16px;background:#d6d6d6"></div>
<div class="t" style="left:24px;top:4px">HEX0[4]</div>
<div class="a" style="left:249px;top:0;width:1px;height:16px;background:#d6d6d6"></div>
<div class="t" style="left:152px;top:4px">Output</div>
<div class="a" style="left:349px;top:0;width:1px;height:16px;background:#d6d6d6"></div>
<div class="t" style="left:252px;top:4px">PIN_AF10</div>
<div class="a" style="left:449px;top:0;width:1px;height:16px;background:#d6d6d6"></div>
<div class="t" style="left:352px;top:4px">8</div>
<div class="a" style="left:549px;top:0;width:1px;height:16px;background:#d6d6d6"></div>
<div class="t" style="left:452px;top:4px">B8_N2</div>
<div class="a" style="left:649px;top:0;width:1px;height:16px;background:#d6d6d6"></div>
<div class="t" style="left:552px;top:4px">PIN_AF10</div>
<div class="a" style="left:749px;top:0;width:1px;height:16px;background:#d6d6d6"></div>
<div class="t" style="left:652px;top:4px">2.5 V (default)</div>
</div>
<div class="a" style="left:0;top:181px;width:800px;height:16px;background:#fefcd9;border-bottom:1px solid #d6d6d6">
<svg class="a" style="left:3px;top:2px;overflow:visible" width="18" height="14" viewBox="0 0 18 14"><text x="0" y="5.7" font-size="9.6" font-family="Liberation Sans" fill="#2a4cc4" letter-spacing="0.45" >out</text><path d="M0.3 10.4 H4" stroke="#e82020" stroke-width="1.1"/><path d="M4.5 7.6 H13 L15.8 10.3 L13 13 H4.5z" fill="url(#pg)" stroke="#a8b8d0" stroke-width="0.8"/><path d="M13 7.3 L16 10.3 L13 13.3" fill="none" stroke="#2a3a5a" stroke-width="1.1"/></svg>
<div class="a" style="left:149px;top:0;width:1px;height:16px;background:#d6d6d6"></div>
<div class="t" style="left:24px;top:4px">HEX0[3]</div>
<div class="a" style="left:249px;top:0;width:1px;height:16px;background:#d6d6d6"></div>
<div class="t" style="left:152px;top:4px">Output</div>
<div class="a" style="left:349px;top:0;width:1px;height:16px;background:#d6d6d6"></div>
<div class="t" style="left:252px;top:4px">PIN_AD10</div>
<div class="a" style="left:449px;top:0;width:1px;height:16px;background:#d6d6d6"></div>
<div class="t" style="left:352px;top:4px">8</div>
<div class="a" style="left:549px;top:0;width:1px;height:16px;background:#d6d6d6"></div>
<div class="t" style="left:452px;top:4px">B8_N2</div>
<div class="a" style="left:649px;top:0;width:1px;height:16px;background:#d6d6d6"></div>
<div class="t" style="left:552px;top:4px">PIN_AD10</div>
<div class="a" style="left:749px;top:0;width:1px;height:16px;background:#d6d6d6"></div>
<div class="t" style="left:652px;top:4px">2.5 V (default)</div>
</div>
<div class="a" style="left:0;top:197px;width:800px;height:16px;background:#fefcd9;border-bottom:1px solid #d6d6d6">
<svg class="a" style="left:3px;top:2px;overflow:visible" width="18" height="14" viewBox="0 0 18 14"><text x="0" y="5.7" font-size="9.6" font-family="Liberation Sans" fill="#2a4cc4" letter-spacing="0.45" >out</text><path d="M0.3 10.4 H4" stroke="#e82020" stroke-width="1.1"/><path d="M4.5 7.6 H13 L15.8 10.3 L13 13 H4.5z" fill="url(#pg)" stroke="#a8b8d0" stroke-width="0.8"/><path d="M13 7.3 L16 10.3 L13 13.3" fill="none" stroke="#2a3a5a" stroke-width="1.1"/></svg>
<div class="a" style="left:149px;top:0;width:1px;height:16px;background:#d6d6d6"></div>
<div class="t" style="left:24px;top:4px">HEX0[2]</div>
<div class="a" style="left:249px;top:0;width:1px;height:16px;background:#d6d6d6"></div>
<div class="t" style="left:152px;top:4px">Output</div>
<div class="a" style="left:349px;top:0;width:1px;height:16px;background:#d6d6d6"></div>
<div class="t" style="left:252px;top:4px">PIN_AH9</div>
<div class="a" style="left:449px;top:0;width:1px;height:16px;background:#d6d6d6"></div>
<div class="t" style="left:352px;top:4px">8</div>
<div class="a" style="left:549px;top:0;width:1px;height:16px;background:#d6d6d6"></div>
<div class="t" style="left:452px;top:4px">B8_N1</div>
<div class="a" style="left:649px;top:0;width:1px;height:16px;background:#d6d6d6"></div>
<div class="t" style="left:552px;top:4px">PIN_AH9</div>
<div class="a" style="left:749px;top:0;width:1px;height:16px;background:#d6d6d6"></div>
<div class="t" style="left:652px;top:4px">2.5 V (default)</div>
</div>
<div class="a" style="left:0;top:213px;width:800px;height:16px;background:#fefcd9;border-bottom:1px solid #d6d6d6">
<svg class="a" style="left:3px;top:2px;overflow:visible" width="18" height="14" viewBox="0 0 18 14"><text x="0" y="5.7" font-size="9.6" font-family="Liberation Sans" fill="#2a4cc4" letter-spacing="0.45" >out</text><path d="M0.3 10.4 H4" stroke="#e82020" stroke-width="1.1"/><path d="M4.5 7.6 H13 L15.8 10.3 L13 13 H4.5z" fill="url(#pg)" stroke="#a8b8d0" stroke-width="0.8"/><path d="M13 7.3 L16 10.3 L13 13.3" fill="none" stroke="#2a3a5a" stroke-width="1.1"/></svg>
<div class="a" style="left:149px;top:0;width:1px;height:16px;background:#d6d6d6"></div>
<div class="t" style="left:24px;top:4px">HEX0[1]</div>
<div class="a" style="left:249px;top:0;width:1px;height:16px;background:#d6d6d6"></div>
<div class="t" style="left:152px;top:4px">Output</div>
<div class="a" style="left:349px;top:0;width:1px;height:16px;background:#d6d6d6"></div>
<div class="t" style="left:252px;top:4px">PIN_AF9</div>
<div class="a" style="left:449px;top:0;width:1px;height:16px;background:#d6d6d6"></div>
<div class="t" style="left:352px;top:4px">8</div>
<div class="a" style="left:549px;top:0;width:1px;height:16px;background:#d6d6d6"></div>
<div class="t" style="left:452px;top:4px">B8_N2</div>
<div class="a" style="left:649px;top:0;width:1px;height:16px;background:#d6d6d6"></div>
<div class="t" style="left:552px;top:4px">PIN_AF9</div>
<div class="a" style="left:749px;top:0;width:1px;height:16px;background:#d6d6d6"></div>
<div class="t" style="left:652px;top:4px">2.5 V (default)</div>
</div>
<div class="a" style="left:0;top:229px;width:800px;height:16px;background:#fefcd9;border-bottom:1px solid #d6d6d6">
<svg class="a" style="left:3px;top:2px;overflow:visible" width="18" height="14" viewBox="0 0 18 14"><text x="0" y="5.7" font-size="9.6" font-family="Liberation Sans" fill="#2a4cc4" letter-spacing="0.45" >out</text><path d="M0.3 10.4 H4" stroke="#e82020" stroke-width="1.1"/><path d="M4.5 7.6 H13 L15.8 10.3 L13 13 H4.5z" fill="url(#pg)" stroke="#a8b8d0" stroke-width="0.8"/><path d="M13 7.3 L16 10.3 L13 13.3" fill="none" stroke="#2a3a5a" stroke-width="1.1"/></svg>
<div class="a" style="left:149px;top:0;width:1px;height:16px;background:#d6d6d6"></div>
<div class="t" style="left:24px;top:4px">HEX0[0]</div>
<div class="a" style="left:249px;top:0;width:1px;height:16px;background:#d6d6d6"></div>
<div class="t" style="left:152px;top:4px">Output</div>
<div class="a" style="left:349px;top:0;width:1px;height:16px;background:#d6d6d6"></div>
<div class="t" style="left:252px;top:4px">PIN_AE8</div>
<div class="a" style="left:449px;top:0;width:1px;height:16px;background:#d6d6d6"></div>
<div class="t" style="left:352px;top:4px">8</div>
<div class="a" style="left:549px;top:0;width:1px;height:16px;background:#d6d6d6"></div>
<div class="t" style="left:452px;top:4px">B8_N3</div>
<div class="a" style="left:649px;top:0;width:1px;height:16px;background:#d6d6d6"></div>
<div class="t" style="left:552px;top:4px">PIN_AE8</div>
<div class="a" style="left:749px;top:0;width:1px;height:16px;background:#d6d6d6"></div>
<div class="t" style="left:652px;top:4px">2.5 V (default)</div>
</div>
<div class="a" style="left:0;top:245px;width:800px;height:16px;background:#ffffff;border-bottom:1px solid #d6d6d6">
<svg class="a" style="left:3px;top:2px;overflow:visible" width="18" height="14" viewBox="0 0 18 14"><text x="0" y="5.7" font-size="9.6" font-family="Liberation Sans" fill="#2a4cc4" letter-spacing="0.45" >out</text><path d="M0.3 10.4 H4" stroke="#e82020" stroke-width="1.1"/><path d="M4.5 7.6 H13 L15.8 10.3 L13 13 H4.5z" fill="url(#pg)" stroke="#a8b8d0" stroke-width="0.8"/><path d="M13 7.3 L16 10.3 L13 13.3" fill="none" stroke="#2a3a5a" stroke-width="1.1"/></svg>
<div class="a" style="left:149px;top:0;width:1px;height:16px;background:#d6d6d6"></div>
<div class="t" style="left:24px;top:4px">HEX1[7]</div>
<div class="a" style="left:249px;top:0;width:1px;height:16px;background:#d6d6d6"></div>
<div class="t" style="left:152px;top:4px">Output</div>
<div class="a" style="left:349px;top:0;width:1px;height:16px;background:#d6d6d6"></div>
<div class="a" style="left:449px;top:0;width:1px;height:16px;background:#d6d6d6"></div>
<div class="a" style="left:549px;top:0;width:1px;height:16px;background:#d6d6d6"></div>
<div class="a" style="left:649px;top:0;width:1px;height:16px;background:#d6d6d6"></div>
<div class="t" style="left:552px;top:4px">PIN_Y6</div>
<div class="a" style="left:749px;top:0;width:1px;height:16px;background:#d6d6d6"></div>
<div class="t" style="left:652px;top:4px">2.5 V (default)</div>
</div>
<div class="a" style="left:0;top:261px;width:800px;height:16px;background:#e2fcd2;border-bottom:1px solid #d6d6d6">
<svg class="a" style="left:3px;top:2px;overflow:visible" width="18" height="14" viewBox="0 0 18 14"><text x="0" y="5.7" font-size="9.6" font-family="Liberation Sans" fill="#2a4cc4" letter-spacing="0.45" >out</text><path d="M0.3 10.4 H4" stroke="#e82020" stroke-width="1.1"/><path d="M4.5 7.6 H13 L15.8 10.3 L13 13 H4.5z" fill="url(#pg)" stroke="#a8b8d0" stroke-width="0.8"/><path d="M13 7.3 L16 10.3 L13 13.3" fill="none" stroke="#2a3a5a" stroke-width="1.1"/></svg>
<div class="a" style="left:149px;top:0;width:1px;height:16px;background:#d6d6d6"></div>
<div class="t" style="left:24px;top:4px">HEX1[6]</div>
<div class="a" style="left:249px;top:0;width:1px;height:16px;background:#d6d6d6"></div>
<div class="t" style="left:152px;top:4px">Output</div>
<div class="a" style="left:349px;top:0;width:1px;height:16px;background:#d6d6d6"></div>
<div class="t" style="left:252px;top:4px">PIN_AD17</div>
<div class="a" style="left:449px;top:0;width:1px;height:16px;background:#d6d6d6"></div>
<div class="t" style="left:352px;top:4px">7</div>
<div class="a" style="left:549px;top:0;width:1px;height:16px;background:#d6d6d6"></div>
<div class="t" style="left:452px;top:4px">B7_N2</div>
<div class="a" style="left:649px;top:0;width:1px;height:16px;background:#d6d6d6"></div>
<div class="t" style="left:552px;top:4px">PIN_AD17</div>
<div class="a" style="left:749px;top:0;width:1px;height:16px;background:#d6d6d6"></div>
<div class="t" style="left:652px;top:4px">2.5 V (default)</div>
</div>
<div class="a" style="left:0;top:277px;width:800px;height:16px;background:#e2fcd2;border-bottom:1px solid #d6d6d6">
<svg class="a" style="left:3px;top:2px;overflow:visible" width="18" height="14" viewBox="0 0 18 14"><text x="0" y="5.7" font-size="9.6" font-family="Liberation Sans" fill="#2a4cc4" letter-spacing="0.45" >out</text><path d="M0.3 10.4 H4" stroke="#e82020" stroke-width="1.1"/><path d="M4.5 7.6 H13 L15.8 10.3 L13 13 H4.5z" fill="url(#pg)" stroke="#a8b8d0" stroke-width="0.8"/><path d="M13 7.3 L16 10.3 L13 13.3" fill="none" stroke="#2a3a5a" stroke-width="1.1"/></svg>
<div class="a" style="left:149px;top:0;width:1px;height:16px;background:#d6d6d6"></div>
<div class="t" style="left:24px;top:4px">HEX1[5]</div>
<div class="a" style="left:249px;top:0;width:1px;height:16px;background:#d6d6d6"></div>
<div class="t" style="left:152px;top:4px">Output</div>
<div class="a" style="left:349px;top:0;width:1px;height:16px;background:#d6d6d6"></div>
<div class="t" style="left:252px;top:4px">PIN_AF17</div>
<div class="a" style="left:449px;top:0;width:1px;height:16px;background:#d6d6d6"></div>
<div class="t" style="left:352px;top:4px">7</div>
<div class="a" style="left:549px;top:0;width:1px;height:16px;background:#d6d6d6"></div>
<div class="t" style="left:452px;top:4px">B7_N2</div>
<div class="a" style="left:649px;top:0;width:1px;height:16px;background:#d6d6d6"></div>
<div class="t" style="left:552px;top:4px">PIN_AF17</div>
<div class="a" style="left:749px;top:0;width:1px;height:16px;background:#d6d6d6"></div>
<div class="t" style="left:652px;top:4px">2.5 V (default)</div>
</div>
<div class="a" style="left:0;top:293px;width:800px;height:16px;background:#e2fcd2;border-bottom:1px solid #d6d6d6">
<svg class="a" style="left:3px;top:2px;overflow:visible" width="18" height="14" viewBox="0 0 18 14"><text x="0" y="5.7" font-size="9.6" font-family="Liberation Sans" fill="#2a4cc4" letter-spacing="0.45" >out</text><path d="M0.3 10.4 H4" stroke="#e82020" stroke-width="1.1"/><path d="M4.5 7.6 H13 L15.8 10.3 L13 13 H4.5z" fill="url(#pg)" stroke="#a8b8d0" stroke-width="0.8"/><path d="M13 7.3 L16 10.3 L13 13.3" fill="none" stroke="#2a3a5a" stroke-width="1.1"/></svg>
<div class="a" style="left:149px;top:0;width:1px;height:16px;background:#d6d6d6"></div>
<div class="t" style="left:24px;top:4px">HEX1[4]</div>
<div class="a" style="left:249px;top:0;width:1px;height:16px;background:#d6d6d6"></div>
<div class="t" style="left:152px;top:4px">Output</div>
<div class="a" style="left:349px;top:0;width:1px;height:16px;background:#d6d6d6"></div>
<div class="t" style="left:252px;top:4px">PIN_AE17</div>
<div class="a" style="left:449px;top:0;width:1px;height:16px;background:#d6d6d6"></div>
<div class="t" style="left:352px;top:4px">7</div>
<div class="a" style="left:549px;top:0;width:1px;height:16px;background:#d6d6d6"></div>
<div class="t" style="left:452px;top:4px">B7_N3</div>
<div class="a" style="left:649px;top:0;width:1px;height:16px;background:#d6d6d6"></div>
<div class="t" style="left:552px;top:4px">PIN_AE17</div>
<div class="a" style="left:749px;top:0;width:1px;height:16px;background:#d6d6d6"></div>
<div class="t" style="left:652px;top:4px">2.5 V (default)</div>
</div>
<div class="a" style="left:0;top:309px;width:800px;height:16px;background:#e2fcd2;border-bottom:1px solid #d6d6d6">
<svg class="a" style="left:3px;top:2px;overflow:visible" width="18" height="14" viewBox="0 0 18 14"><text x="0" y="5.7" font-size="9.6" font-family="Liberation Sans" fill="#2a4cc4" letter-spacing="0.45" >out</text><path d="M0.3 10.4 H4" stroke="#e82020" stroke-width="1.1"/><path d="M4.5 7.6 H13 L15.8 10.3 L13 13 H4.5z" fill="url(#pg)" stroke="#a8b8d0" stroke-width="0.8"/><path d="M13 7.3 L16 10.3 L13 13.3" fill="none" stroke="#2a3a5a" stroke-width="1.1"/></svg>
<div class="a" style="left:149px;top:0;width:1px;height:16px;background:#d6d6d6"></div>
<div class="t" style="left:24px;top:4px">HEX1[3]</div>
<div class="a" style="left:249px;top:0;width:1px;height:16px;background:#d6d6d6"></div>
<div class="t" style="left:152px;top:4px">Output</div>
<div class="a" style="left:349px;top:0;width:1px;height:16px;background:#d6d6d6"></div>
<div class="t" style="left:252px;top:4px">PIN_AG16</div>
<div class="a" style="left:449px;top:0;width:1px;height:16px;background:#d6d6d6"></div>
<div class="t" style="left:352px;top:4px">7</div>
<div class="a" style="left:549px;top:0;width:1px;height:16px;background:#d6d6d6"></div>
<div class="t" style="left:452px;top:4px">B7_N3</div>
<div class="a" style="left:649px;top:0;width:1px;height:16px;background:#d6d6d6"></div>
<div class="t" style="left:552px;top:4px">PIN_AG16</div>
<div class="a" style="left:749px;top:0;width:1px;height:16px;background:#d6d6d6"></div>
<div class="t" style="left:652px;top:4px">2.5 V (default)</div>
</div>
<div class="a" style="left:0;top:325px;width:800px;height:16px;background:#e2fcd2;border-bottom:1px solid #d6d6d6">
<svg class="a" style="left:3px;top:2px;overflow:visible" width="18" height="14" viewBox="0 0 18 14"><text x="0" y="5.7" font-size="9.6" font-family="Liberation Sans" fill="#2a4cc4" letter-spacing="0.45" >out</text><path d="M0.3 10.4 H4" stroke="#e82020" stroke-width="1.1"/><path d="M4.5 7.6 H13 L15.8 10.3 L13 13 H4.5z" fill="url(#pg)" stroke="#a8b8d0" stroke-width="0.8"/><path d="M13 7.3 L16 10.3 L13 13.3" fill="none" stroke="#2a3a5a" stroke-width="1.1"/></svg>
<div class="a" style="left:149px;top:0;width:1px;height:16px;background:#d6d6d6"></div>
<div class="t" style="left:24px;top:4px">HEX1[2]</div>
<div class="a" style="left:249px;top:0;width:1px;height:16px;background:#d6d6d6"></div>
<div class="t" style="left:152px;top:4px">Output</div>
<div class="a" style="left:349px;top:0;width:1px;height:16px;background:#d6d6d6"></div>
<div class="t" style="left:252px;top:4px">PIN_AF16</div>
<div class="a" style="left:449px;top:0;width:1px;height:16px;background:#d6d6d6"></div>
<div class="t" style="left:352px;top:4px">7</div>
<div class="a" style="left:549px;top:0;width:1px;height:16px;background:#d6d6d6"></div>
<div class="t" style="left:452px;top:4px">B7_N3</div>
<div class="a" style="left:649px;top:0;width:1px;height:16px;background:#d6d6d6"></div>
<div class="t" style="left:552px;top:4px">PIN_AF16</div>
<div class="a" style="left:749px;top:0;width:1px;height:16px;background:#d6d6d6"></div>
<div class="t" style="left:652px;top:4px">2.5 V (default)</div>
</div>
<div class="a" style="left:0;top:341px;width:800px;height:16px;background:#e2fcd2;border-bottom:1px solid #d6d6d6">
<svg class="a" style="left:3px;top:2px;overflow:visible" width="18" height="14" viewBox="0 0 18 14"><text x="0" y="5.7" font-size="9.6" font-family="Liberation Sans" fill="#2a4cc4" letter-spacing="0.45" >out</text><path d="M0.3 10.4 H4" stroke="#e82020" stroke-width="1.1"/><path d="M4.5 7.6 H13 L15.8 10.3 L13 13 H4.5z" fill="url(#pg)" stroke="#a8b8d0" stroke-width="0.8"/><path d="M13 7.3 L16 10.3 L13 13.3" fill="none" stroke="#2a3a5a" stroke-width="1.1"/></svg>
<div class="a" style="left:149px;top:0;width:1px;height:16px;background:#d6d6d6"></div>
<div class="t" style="left:24px;top:4px">HEX1[1]</div>
<div class="a" style="left:249px;top:0;width:1px;height:16px;background:#d6d6d6"></div>
<div class="t" style="left:152px;top:4px">Output</div>
<div class="a" style="left:349px;top:0;width:1px;height:16px;background:#d6d6d6"></div>
<div class="t" style="left:252px;top:4px">PIN_AE16</div>
<div class="a" style="left:449px;top:0;width:1px;height:16px;background:#d6d6d6"></div>
<div class="t" style="left:352px;top:4px">7</div>
<div class="a" style="left:549px;top:0;width:1px;height:16px;background:#d6d6d6"></div>
<div class="t" style="left:452px;top:4px">B7_N3</div>
<div class="a" style="left:649px;top:0;width:1px;height:16px;background:#d6d6d6"></div>
<div class="t" style="left:552px;top:4px">PIN_AE16</div>
<div class="a" style="left:749px;top:0;width:1px;height:16px;background:#d6d6d6"></div>
<div class="t" style="left:652px;top:4px">2.5 V (default)</div>
</div>
<div class="a" style="left:0;top:357px;width:800px;height:16px;background:#fefcd9;border-bottom:1px solid #d6d6d6">
<svg class="a" style="left:3px;top:2px;overflow:visible" width="18" height="14" viewBox="0 0 18 14"><text x="0" y="5.7" font-size="9.6" font-family="Liberation Sans" fill="#2a4cc4" letter-spacing="0.45" >out</text><path d="M0.3 10.4 H4" stroke="#e82020" stroke-width="1.1"/><path d="M4.5 7.6 H13 L15.8 10.3 L13 13 H4.5z" fill="url(#pg)" stroke="#a8b8d0" stroke-width="0.8"/><path d="M13 7.3 L16 10.3 L13 13.3" fill="none" stroke="#2a3a5a" stroke-width="1.1"/></svg>
<div class="a" style="left:149px;top:0;width:1px;height:16px;background:#d6d6d6"></div>
<div class="t" style="left:24px;top:4px">HEX1[0]</div>
<div class="a" style="left:249px;top:0;width:1px;height:16px;background:#d6d6d6"></div>
<div class="t" style="left:152px;top:4px">Output</div>
<div class="a" style="left:349px;top:0;width:1px;height:16px;background:#d6d6d6"></div>
<div class="t" style="left:252px;top:4px">PIN_AG13</div>
<div class="a" style="left:449px;top:0;width:1px;height:16px;background:#d6d6d6"></div>
<div class="t" style="left:352px;top:4px">8</div>
<div class="a" style="left:549px;top:0;width:1px;height:16px;background:#d6d6d6"></div>
<div class="t" style="left:452px;top:4px">B8_N0</div>
<div class="a" style="left:649px;top:0;width:1px;height:16px;background:#d6d6d6"></div>
<div class="t" style="left:552px;top:4px">PIN_AG13</div>
<div class="a" style="left:749px;top:0;width:1px;height:16px;background:#d6d6d6"></div>
<div class="t" style="left:652px;top:4px">2.5 V (default)</div>
</div>
<div class="a" style="left:0;top:373px;width:800px;height:16px;background:#ffffff;border-bottom:1px solid #d6d6d6">
<svg class="a" style="left:3px;top:2px;overflow:visible" width="18" height="14" viewBox="0 0 18 14"><text x="0" y="5.7" font-size="9.6" font-family="Liberation Sans" fill="#2a4cc4" letter-spacing="0.45" >out</text><path d="M0.3 10.4 H4" stroke="#e82020" stroke-width="1.1"/><path d="M4.5 7.6 H13 L15.8 10.3 L13 13 H4.5z" fill="url(#pg)" stroke="#a8b8d0" stroke-width="0.8"/><path d="M13 7.3 L16 10.3 L13 13.3" fill="none" stroke="#2a3a5a" stroke-width="1.1"/></svg>
<div class="a" style="left:149px;top:0;width:1px;height:16px;background:#d6d6d6"></div>
<div class="t" style="left:24px;top:4px">HEX2[7]</div>
<div class="a" style="left:249px;top:0;width:1px;height:16px;background:#d6d6d6"></div>
<div class="t" style="left:152px;top:4px">Output</div>
<div class="a" style="left:349px;top:0;width:1px;height:16px;background:#d6d6d6"></div>
<div class="a" style="left:449px;top:0;width:1px;height:16px;background:#d6d6d6"></div>
<div class="a" style="left:549px;top:0;width:1px;height:16px;background:#d6d6d6"></div>
<div class="a" style="left:649px;top:0;width:1px;height:16px;background:#d6d6d6"></div>
<div class="t" style="left:552px;top:4px">PIN_A25</div>
<div class="a" style="left:749px;top:0;width:1px;height:16px;background:#d6d6d6"></div>
<div class="t" style="left:652px;top:4px">2.5 V (default)</div>
</div>
<div class="a" style="left:0;top:389px;width:800px;height:16px;background:#e2fcd2;border-bottom:1px solid #d6d6d6">
<svg class="a" style="left:3px;top:2px;overflow:visible" width="18" height="14" viewBox="0 0 18 14"><text x="0" y="5.7" font-size="9.6" font-family="Liberation Sans" fill="#2a4cc4" letter-spacing="0.45" >out</text><path d="M0.3 10.4 H4" stroke="#e82020" stroke-width="1.1"/><path d="M4.5 7.6 H13 L15.8 10.3 L13 13 H4.5z" fill="url(#pg)" stroke="#a8b8d0" stroke-width="0.8"/><path d="M13 7.3 L16 10.3 L13 13.3" fill="none" stroke="#2a3a5a" stroke-width="1.1"/></svg>
<div class="a" style="left:149px;top:0;width:1px;height:16px;background:#d6d6d6"></div>
<div class="t" style="left:24px;top:4px">HEX2[6]</div>
<div class="a" style="left:249px;top:0;width:1px;height:16px;background:#d6d6d6"></div>
<div class="t" style="left:152px;top:4px">Output</div>
<div class="a" style="left:349px;top:0;width:1px;height:16px;background:#d6d6d6"></div>
<div class="t" style="left:252px;top:4px">PIN_AE19</div>
<div class="a" style="left:449px;top:0;width:1px;height:16px;background:#d6d6d6"></div>
<div class="t" style="left:352px;top:4px">7</div>
<div class="a" style="left:549px;top:0;width:1px;height:16px;background:#d6d6d6"></div>
<div class="t" style="left:452px;top:4px">B7_N1</div>
<div class="a" style="left:649px;top:0;width:1px;height:16px;background:#d6d6d6"></div>
<div class="t" style="left:552px;top:4px">PIN_AE19</div>
<div class="a" style="left:749px;top:0;width:1px;height:16px;background:#d6d6d6"></div>
<div class="t" style="left:652px;top:4px">2.5 V (default)</div>
</div>
<div class="a" style="left:0;top:405px;width:800px;height:16px;background:#e2fcd2;border-bottom:1px solid #d6d6d6">
<svg class="a" style="left:3px;top:2px;overflow:visible" width="18" height="14" viewBox="0 0 18 14"><text x="0" y="5.7" font-size="9.6" font-family="Liberation Sans" fill="#2a4cc4" letter-spacing="0.45" >out</text><path d="M0.3 10.4 H4" stroke="#e82020" stroke-width="1.1"/><path d="M4.5 7.6 H13 L15.8 10.3 L13 13 H4.5z" fill="url(#pg)" stroke="#a8b8d0" stroke-width="0.8"/><path d="M13 7.3 L16 10.3 L13 13.3" fill="none" stroke="#2a3a5a" stroke-width="1.1"/></svg>
<div class="a" style="left:149px;top:0;width:1px;height:16px;background:#d6d6d6"></div>
<div class="t" style="left:24px;top:4px">HEX2[5]</div>
<div class="a" style="left:249px;top:0;width:1px;height:16px;background:#d6d6d6"></div>
<div class="t" style="left:152px;top:4px">Output</div>
<div class="a" style="left:349px;top:0;width:1px;height:16px;background:#d6d6d6"></div>
<div class="t" style="left:252px;top:4px">PIN_AB19</div>
<div class="a" style="left:449px;top:0;width:1px;height:16px;background:#d6d6d6"></div>
<div class="t" style="left:352px;top:4px">7</div>
<div class="a" style="left:549px;top:0;width:1px;height:16px;background:#d6d6d6"></div>
<div class="t" style="left:452px;top:4px">B7_N1</div>
<div class="a" style="left:649px;top:0;width:1px;height:16px;background:#d6d6d6"></div>
<div class="t" style="left:552px;top:4px">PIN_AB19</div>
<div class="a" style="left:749px;top:0;width:1px;height:16px;background:#d6d6d6"></div>
<div class="t" style="left:652px;top:4px">2.5 V (default)</div>
</div>
<div class="a" style="left:0;top:421px;width:800px;height:16px;background:#e2fcd2;border-bottom:1px solid #d6d6d6">
<svg class="a" style="left:3px;top:2px;overflow:visible" width="18" height="14" viewBox="0 0 18 14"><text x="0" y="5.7" font-size="9.6" font-family="Liberation Sans" fill="#2a4cc4" letter-spacing="0.45" >out</text><path d="M0.3 10.4 H4" stroke="#e82020" stroke-width="1.1"/><path d="M4.5 7.6 H13 L15.8 10.3 L13 13 H4.5z" fill="url(#pg)" stroke="#a8b8d0" stroke-width="0.8"/><path d="M13 7.3 L16 10.3 L13 13.3" fill="none" stroke="#2a3a5a" stroke-width="1.1"/></svg>
<div class="a" style="left:149px;top:0;width:1px;height:16px;background:#d6d6d6"></div>
<div class="t" style="left:24px;top:4px">HEX2[4]</div>
<div class="a" style="left:249px;top:0;width:1px;height:16px;background:#d6d6d6"></div>
<div class="t" style="left:152px;top:4px">Output</div>
<div class="a" style="left:349px;top:0;width:1px;height:16px;background:#d6d6d6"></div>
<div class="t" style="left:252px;top:4px">PIN_AB18</div>
<div class="a" style="left:449px;top:0;width:1px;height:16px;background:#d6d6d6"></div>
<div class="t" style="left:352px;top:4px">7</div>
<div class="a" style="left:549px;top:0;width:1px;height:16px;background:#d6d6d6"></div>
<div class="t" style="left:452px;top:4px">B7_N1</div>
<div class="a" style="left:649px;top:0;width:1px;height:16px;background:#d6d6d6"></div>
<div class="t" style="left:552px;top:4px">PIN_AB18</div>
<div class="a" style="left:749px;top:0;width:1px;height:16px;background:#d6d6d6"></div>
<div class="t" style="left:652px;top:4px">2.5 V (default)</div>
</div>
<div class="a" style="left:0;top:437px;width:800px;height:16px;background:#fefcd9;border-bottom:1px solid #d6d6d6">
<svg class="a" style="left:3px;top:2px;overflow:visible" width="18" height="14" viewBox="0 0 18 14"><text x="0" y="5.7" font-size="9.6" font-family="Liberation Sans" fill="#2a4cc4" letter-spacing="0.45" >out</text><path d="M0.3 10.4 H4" stroke="#e82020" stroke-width="1.1"/><path d="M4.5 7.6 H13 L15.8 10.3 L13 13 H4.5z" fill="url(#pg)" stroke="#a8b8d0" stroke-width="0.8"/><path d="M13 7.3 L16 10.3 L13 13.3" fill="none" stroke="#2a3a5a" stroke-width="1.1"/></svg>
<div class="a" style="left:149px;top:0;width:1px;height:16px;background:#d6d6d6"></div>
<div class="t" style="left:24px;top:4px">HEX2[3]</div>
<div class="a" style="left:249px;top:0;width:1px;height:16px;background:#d6d6d6"></div>
<div class="t" style="left:152px;top:4px">Output</div>
<div class="a" style="left:349px;top:0;width:1px;height:16px;background:#d6d6d6"></div>
<div class="t" style="left:252px;top:4px">PIN_AG4</div>
<div class="a" style="left:449px;top:0;width:1px;height:16px;background:#d6d6d6"></div>
<div class="t" style="left:352px;top:4px">8</div>
<div class="a" style="left:549px;top:0;width:1px;height:16px;background:#d6d6d6"></div>
<div class="t" style="left:452px;top:4px">B8_N3</div>
<div class="a" style="left:649px;top:0;width:1px;height:16px;background:#d6d6d6"></div>
<div class="t" style="left:552px;top:4px">PIN_AG4</div>
<div class="a" style="left:749px;top:0;width:1px;height:16px;background:#d6d6d6"></div>
<div class="t" style="left:652px;top:4px">2.5 V (default)</div>
</div>
<div class="a" style="left:0;top:453px;width:800px;height:16px;background:#fefcd9;border-bottom:1px solid #d6d6d6">
<svg class="a" style="left:3px;top:2px;overflow:visible" width="18" height="14" viewBox="0 0 18 14"><text x="0" y="5.7" font-size="9.6" font-family="Liberation Sans" fill="#2a4cc4" letter-spacing="0.45" >out</text><path d="M0.3 10.4 H4" stroke="#e82020" stroke-width="1.1"/><path d="M4.5 7.6 H13 L15.8 10.3 L13 13 H4.5z" fill="url(#pg)" stroke="#a8b8d0" stroke-width="0.8"/><path d="M13 7.3 L16 10.3 L13 13.3" fill="none" stroke="#2a3a5a" stroke-width="1.1"/></svg>
<div class="a" style="left:149px;top:0;width:1px;height:16px;background:#d6d6d6"></div>
<div class="t" style="left:24px;top:4px">HEX2[2]</div>
<div class="a" style="left:249px;top:0;width:1px;height:16px;background:#d6d6d6"></div>
<div class="t" style="left:152px;top:4px">Output</div>
<div class="a" style="left:349px;top:0;width:1px;height:16px;background:#d6d6d6"></div>
<div class="t" style="left:252px;top:4px">PIN_AH5</div>
<div class="a" style="left:449px;top:0;width:1px;height:16px;background:#d6d6d6"></div>
<div class="t" style="left:352px;top:4px">8</div>
<div class="a" style="left:549px;top:0;width:1px;height:16px;background:#d6d6d6"></div>
<div class="t" style="left:452px;top:4px">B8_N3</div>
<div class="a" style="left:649px;top:0;width:1px;height:16px;background:#d6d6d6"></div>
<div class="t" style="left:552px;top:4px">PIN_AH5</div>
<div class="a" style="left:749px;top:0;width:1px;height:16px;background:#d6d6d6"></div>
<div class="t" style="left:652px;top:4px">2.5 V (default)</div>
</div>
<div class="a" style="left:0;top:469px;width:800px;height:16px;background:#fefcd9;border-bottom:1px solid #d6d6d6">
<svg class="a" style="left:3px;top:2px;overflow:visible" width="18" height="14" viewBox="0 0 18 14"><text x="0" y="5.7" font-size="9.6" font-family="Liberation Sans" fill="#2a4cc4" letter-spacing="0.45" >out</text><path d="M0.3 10.4 H4" stroke="#e82020" stroke-width="1.1"/><path d="M4.5 7.6 H13 L15.8 10.3 L13 13 H4.5z" fill="url(#pg)" stroke="#a8b8d0" stroke-width="0.8"/><path d="M13 7.3 L16 10.3 L13 13.3" fill="none" stroke="#2a3a5a" stroke-width="1.1"/></svg>
<div class="a" style="left:149px;top:0;width:1px;height:16px;background:#d6d6d6"></div>
<div class="t" style="left:24px;top:4px">HEX2[1]</div>
<div class="a" style="left:249px;top:0;width:1px;height:16px;background:#d6d6d6"></div>
<div class="t" style="left:152px;top:4px">Output</div>
<div class="a" style="left:349px;top:0;width:1px;height:16px;background:#d6d6d6"></div>
<div class="t" style="left:252px;top:4px">PIN_AF7</div>
<div class="a" style="left:449px;top:0;width:1px;height:16px;background:#d6d6d6"></div>
<div class="t" style="left:352px;top:4px">8</div>
<div class="a" style="left:549px;top:0;width:1px;height:16px;background:#d6d6d6"></div>
<div class="t" style="left:452px;top:4px">B8_N3</div>
<div class="a" style="left:649px;top:0;width:1px;height:16px;background:#d6d6d6"></div>
<div class="t" style="left:552px;top:4px">PIN_AF7</div>
<div class="a" style="left:749px;top:0;width:1px;height:16px;background:#d6d6d6"></div>
<div class="t" style="left:652px;top:4px">2.5 V (default)</div>
</div>
<div class="a" style="left:0;top:485px;width:800px;height:16px;background:#fefcd9;border-bottom:1px solid #d6d6d6">
<svg class="a" style="left:3px;top:2px;overflow:visible" width="18" height="14" viewBox="0 0 18 14"><text x="0" y="5.7" font-size="9.6" font-family="Liberation Sans" fill="#2a4cc4" letter-spacing="0.45" >out</text><path d="M0.3 10.4 H4" stroke="#e82020" stroke-width="1.1"/><path d="M4.5 7.6 H13 L15.8 10.3 L13 13 H4.5z" fill="url(#pg)" stroke="#a8b8d0" stroke-width="0.8"/><path d="M13 7.3 L16 10.3 L13 13.3" fill="none" stroke="#2a3a5a" stroke-width="1.1"/></svg>
<div class="a" style="left:149px;top:0;width:1px;height:16px;background:#d6d6d6"></div>
<div class="t" style="left:24px;top:4px">HEX2[0]</div>
<div class="a" style="left:249px;top:0;width:1px;height:16px;background:#d6d6d6"></div>
<div class="t" style="left:152px;top:4px">Output</div>
<div class="a" style="left:349px;top:0;width:1px;height:16px;background:#d6d6d6"></div>
<div class="t" style="left:252px;top:4px">PIN_AE7</div>
<div class="a" style="left:449px;top:0;width:1px;height:16px;background:#d6d6d6"></div>
<div class="t" style="left:352px;top:4px">8</div>
<div class="a" style="left:549px;top:0;width:1px;height:16px;background:#d6d6d6"></div>
<div class="t" style="left:452px;top:4px">B8_N3</div>
<div class="a" style="left:649px;top:0;width:1px;height:16px;background:#d6d6d6"></div>
<div class="t" style="left:552px;top:4px">PIN_AE7</div>
<div class="a" style="left:749px;top:0;width:1px;height:16px;background:#d6d6d6"></div>
<div class="t" style="left:652px;top:4px">2.5 V (default)</div>
</div>
<div class="a" style="left:0;top:501px;width:800px;height:16px;background:#ffffff;border-bottom:1px solid #d6d6d6">
<svg class="a" style="left:3px;top:2px;overflow:visible" width="18" height="14" viewBox="0 0 18 14"><text x="0" y="5.7" font-size="9.6" font-family="Liberation Sans" fill="#2a4cc4" letter-spacing="0.45" >out</text><path d="M0.3 10.4 H4" stroke="#e82020" stroke-width="1.1"/><path d="M4.5 7.6 H13 L15.8 10.3 L13 13 H4.5z" fill="url(#pg)" stroke="#a8b8d0" stroke-width="0.8"/><path d="M13 7.3 L16 10.3 L13 13.3" fill="none" stroke="#2a3a5a" stroke-width="1.1"/></svg>
<div class="a" style="left:149px;top:0;width:1px;height:16px;background:#d6d6d6"></div>
<div class="t" style="left:24px;top:4px">HEX3[7]</div>
<div class="a" style="left:249px;top:0;width:1px;height:16px;background:#d6d6d6"></div>
<div class="t" style="left:152px;top:4px">Output</div>
<div class="a" style="left:349px;top:0;width:1px;height:16px;background:#d6d6d6"></div>
<div class="a" style="left:449px;top:0;width:1px;height:16px;background:#d6d6d6"></div>
<div class="a" style="left:549px;top:0;width:1px;height:16px;background:#d6d6d6"></div>
<div class="a" style="left:649px;top:0;width:1px;height:16px;background:#d6d6d6"></div>
<div class="t" style="left:552px;top:4px">PIN_L3</div>
<div class="a" style="left:749px;top:0;width:1px;height:16px;background:#d6d6d6"></div>
<div class="t" style="left:652px;top:4px">2.5 V (default)</div>
</div>
<div class="a" style="left:0;top:517px;width:800px;height:16px;background:#e6efe4;border-bottom:1px solid #d6d6d6">
<svg class="a" style="left:3px;top:2px;overflow:visible" width="18" height="14" viewBox="0 0 18 14"><text x="0" y="5.7" font-size="9.6" font-family="Liberation Sans" fill="#2a4cc4" letter-spacing="0.45" >out</text><path d="M0.3 10.4 H4" stroke="#e82020" stroke-width="1.1"/><path d="M4.5 7.6 H13 L15.8 10.3 L13 13 H4.5z" fill="url(#pg)" stroke="#a8b8d0" stroke-width="0.8"/><path d="M13 7.3 L16 10.3 L13 13.3" fill="none" stroke="#2a3a5a" stroke-width="1.1"/></svg>
<div class="a" style="left:149px;top:0;width:1px;height:16px;background:#d6d6d6"></div>
<div class="t" style="left:24px;top:4px">HEX3[6]</div>
<div class="a" style="left:249px;top:0;width:1px;height:16px;background:#d6d6d6"></div>
<div class="t" style="left:152px;top:4px">Output</div>
<div class="a" style="left:349px;top:0;width:1px;height:16px;background:#d6d6d6"></div>
<div class="t" style="left:252px;top:4px">PIN_M6</div>
<div class="a" style="left:449px;top:0;width:1px;height:16px;background:#d6d6d6"></div>
<div class="t" style="left:352px;top:4px">2</div>
<div class="a" style="left:549px;top:0;width:1px;height:16px;background:#d6d6d6"></div>
<div class="t" style="left:452px;top:4px">B2_N2</div>
<div class="a" style="left:649px;top:0;width:1px;height:16px;background:#d6d6d6"></div>
<div class="t" style="left:552px;top:4px">PIN_M6</div>
<div class="a" style="left:749px;top:0;width:1px;height:16px;background:#d6d6d6"></div>
<div class="t" style="left:652px;top:4px">2.5 V (default)</div>
</div>
<div class="a" style="left:0;top:533px;width:800px;height:16px;background:#e6efe4;border-bottom:1px solid #d6d6d6">
<svg class="a" style="left:3px;top:2px;overflow:visible" width="18" height="14" viewBox="0 0 18 14"><text x="0" y="5.7" font-size="9.6" font-family="Liberation Sans" fill="#2a4cc4" letter-spacing="0.45" >out</text><path d="M0.3 10.4 H4" stroke="#e82020" stroke-width="1.1"/><path d="M4.5 7.6 H13 L15.8 10.3 L13 13 H4.5z" fill="url(#pg)" stroke="#a8b8d0" stroke-width="0.8"/><path d="M13 7.3 L16 10.3 L13 13.3" fill="none" stroke="#2a3a5a" stroke-width="1.1"/></svg>
<div class="a" style="left:149px;top:0;width:1px;height:16px;background:#d6d6d6"></div>
<div class="t" style="left:24px;top:4px">HEX3[5]</div>
<div class="a" style="left:249px;top:0;width:1px;height:16px;background:#d6d6d6"></div>
<div class="t" style="left:152px;top:4px">Output</div>
<div class="a" style="left:349px;top:0;width:1px;height:16px;background:#d6d6d6"></div>
<div class="t" style="left:252px;top:4px">PIN_M7</div>
<div class="a" style="left:449px;top:0;width:1px;height:16px;background:#d6d6d6"></div>
<div class="t" style="left:352px;top:4px">2</div>
<div class="a" style="left:549px;top:0;width:1px;height:16px;background:#d6d6d6"></div>
<div class="t" style="left:452px;top:4px">B2_N2</div>
<div class="a" style="left:649px;top:0;width:1px;height:16px;background:#d6d6d6"></div>
<div class="t" style="left:552px;top:4px">PIN_M7</div>
<div class="a" style="left:749px;top:0;width:1px;height:16px;background:#d6d6d6"></div>
<div class="t" style="left:652px;top:4px">2.5 V (default)</div>
</div>
<div class="a" style="left:0;top:549px;width:800px;height:16px;background:#e6efe4;border-bottom:1px solid #d6d6d6">
<svg class="a" style="left:3px;top:2px;overflow:visible" width="18" height="14" viewBox="0 0 18 14"><text x="0" y="5.7" font-size="9.6" font-family="Liberation Sans" fill="#2a4cc4" letter-spacing="0.45" >out</text><path d="M0.3 10.4 H4" stroke="#e82020" stroke-width="1.1"/><path d="M4.5 7.6 H13 L15.8 10.3 L13 13 H4.5z" fill="url(#pg)" stroke="#a8b8d0" stroke-width="0.8"/><path d="M13 7.3 L16 10.3 L13 13.3" fill="none" stroke="#2a3a5a" stroke-width="1.1"/></svg>
<div class="a" style="left:149px;top:0;width:1px;height:16px;background:#d6d6d6"></div>
<div class="t" style="left:24px;top:4px">HEX3[4]</div>
<div class="a" style="left:249px;top:0;width:1px;height:16px;background:#d6d6d6"></div>
<div class="t" style="left:152px;top:4px">Output</div>
<div class="a" style="left:349px;top:0;width:1px;height:16px;background:#d6d6d6"></div>
<div class="t" style="left:252px;top:4px">PIN_M8</div>
<div class="a" style="left:449px;top:0;width:1px;height:16px;background:#d6d6d6"></div>
<div class="t" style="left:352px;top:4px">2</div>
<div class="a" style="left:549px;top:0;width:1px;height:16px;background:#d6d6d6"></div>
<div class="t" style="left:452px;top:4px">B2_N1</div>
<div class="a" style="left:649px;top:0;width:1px;height:16px;background:#d6d6d6"></div>
<div class="t" style="left:552px;top:4px">PIN_M8</div>
<div class="a" style="left:749px;top:0;width:1px;height:16px;background:#d6d6d6"></div>
<div class="t" style="left:652px;top:4px">2.5 V (default)</div>
</div>
<div class="a" style="left:0;top:565px;width:800px;height:16px;background:#e6efe4;border-bottom:1px solid #d6d6d6">
<svg class="a" style="left:3px;top:2px;overflow:visible" width="18" height="14" viewBox="0 0 18 14"><text x="0" y="5.7" font-size="9.6" font-family="Liberation Sans" fill="#2a4cc4" letter-spacing="0.45" >out</text><path d="M0.3 10.4 H4" stroke="#e82020" stroke-width="1.1"/><path d="M4.5 7.6 H13 L15.8 10.3 L13 13 H4.5z" fill="url(#pg)" stroke="#a8b8d0" stroke-width="0.8"/><path d="M13 7.3 L16 10.3 L13 13.3" fill="none" stroke="#2a3a5a" stroke-width="1.1"/></svg>
<div class="a" style="left:149px;top:0;width:1px;height:16px;background:#d6d6d6"></div>
<div class="t" style="left:24px;top:4px">HEX3[3]</div>
<div class="a" style="left:249px;top:0;width:1px;height:16px;background:#d6d6d6"></div>
<div class="t" style="left:152px;top:4px">Output</div>
<div class="a" style="left:349px;top:0;width:1px;height:16px;background:#d6d6d6"></div>
<div class="t" style="left:252px;top:4px">PIN_N7</div>
<div class="a" style="left:449px;top:0;width:1px;height:16px;background:#d6d6d6"></div>
<div class="t" style="left:352px;top:4px">2</div>
<div class="a" style="left:549px;top:0;width:1px;height:16px;background:#d6d6d6"></div>
<div class="t" style="left:452px;top:4px">B2_N2</div>
<div class="a" style="left:649px;top:0;width:1px;height:16px;background:#d6d6d6"></div>
<div class="t" style="left:552px;top:4px">PIN_N7</div>
<div class="a" style="left:749px;top:0;width:1px;height:16px;background:#d6d6d6"></div>
<div class="t" style="left:652px;top:4px">2.5 V (default)</div>
</div>
<div class="a" style="left:0;top:581px;width:800px;height:16px;background:#e6efe4;border-bottom:1px solid #d6d6d6">
<svg class="a" style="left:3px;top:2px;overflow:visible" width="18" height="14" viewBox="0 0 18 14"><text x="0" y="5.7" font-size="9.6" font-family="Liberation Sans" fill="#2a4cc4" letter-spacing="0.45" >out</text><path d="M0.3 10.4 H4" stroke="#e82020" stroke-width="1.1"/><path d="M4.5 7.6 H13 L15.8 10.3 L13 13 H4.5z" fill="url(#pg)" stroke="#a8b8d0" stroke-width="0.8"/><path d="M13 7.3 L16 10.3 L13 13.3" fill="none" stroke="#2a3a5a" stroke-width="1.1"/></svg>
<div class="a" style="left:149px;top:0;width:1px;height:16px;background:#d6d6d6"></div>
<div class="t" style="left:24px;top:4px">HEX3[2]</div>
<div class="a" style="left:249px;top:0;width:1px;height:16px;background:#d6d6d6"></div>
<div class="t" style="left:152px;top:4px">Output</div>
<div class="a" style="left:349px;top:0;width:1px;height:16px;background:#d6d6d6"></div>
<div class="t" style="left:252px;top:4px">PIN_N10</div>
<div class="a" style="left:449px;top:0;width:1px;height:16px;background:#d6d6d6"></div>
<div class="t" style="left:352px;top:4px">2</div>
<div class="a" style="left:549px;top:0;width:1px;height:16px;background:#d6d6d6"></div>
<div class="t" style="left:452px;top:4px">B2_N2</div>
<div class="a" style="left:649px;top:0;width:1px;height:16px;background:#d6d6d6"></div>
<div class="t" style="left:552px;top:4px">PIN_N10</div>
<div class="a" style="left:749px;top:0;width:1px;height:16px;background:#d6d6d6"></div>
<div class="t" style="left:652px;top:4px">2.5 V (default)</div>
</div>
<div class="a" style="left:0;top:597px;width:800px;height:16px;background:#e6efe4;border-bottom:1px solid #d6d6d6">
<svg class="a" style="left:3px;top:2px;overflow:visible" width="18" height="14" viewBox="0 0 18 14"><text x="0" y="5.7" font-size="9.6" font-family="Liberation Sans" fill="#2a4cc4" letter-spacing="0.45" >out</text><path d="M0.3 10.4 H4" stroke="#e82020" stroke-width="1.1"/><path d="M4.5 7.6 H13 L15.8 10.3 L13 13 H4.5z" fill="url(#pg)" stroke="#a8b8d0" stroke-width="0.8"/><path d="M13 7.3 L16 10.3 L13 13.3" fill="none" stroke="#2a3a5a" stroke-width="1.1"/></svg>
<div class="a" style="left:149px;top:0;width:1px;height:16px;background:#d6d6d6"></div>
<div class="t" style="left:24px;top:4px">HEX3[1]</div>
<div class="a" style="left:249px;top:0;width:1px;height:16px;background:#d6d6d6"></div>
<div class="t" style="left:152px;top:4px">Output</div>
<div class="a" style="left:349px;top:0;width:1px;height:16px;background:#d6d6d6"></div>
<div class="t" style="left:252px;top:4px">PIN_P4</div>
<div class="a" style="left:449px;top:0;width:1px;height:16px;background:#d6d6d6"></div>
<div class="t" style="left:352px;top:4px">2</div>
<div class="a" style="left:549px;top:0;width:1px;height:16px;background:#d6d6d6"></div>
<div class="t" style="left:452px;top:4px">B2_N3</div>
<div class="a" style="left:649px;top:0;width:1px;height:16px;background:#d6d6d6"></div>
<div class="t" style="left:552px;top:4px">PIN_P4</div>
<div class="a" style="left:749px;top:0;width:1px;height:16px;background:#d6d6d6"></div>
<div class="t" style="left:652px;top:4px">2.5 V (default)</div>
</div>
<div class="a" style="left:0;top:613px;width:800px;height:16px;background:#e6efe4;border-bottom:1px solid #d6d6d6">
<svg class="a" style="left:3px;top:2px;overflow:visible" width="18" height="14" viewBox="0 0 18 14"><text x="0" y="5.7" font-size="9.6" font-family="Liberation Sans" fill="#2a4cc4" letter-spacing="0.45" >out</text><path d="M0.3 10.4 H4" stroke="#e82020" stroke-width="1.1"/><path d="M4.5 7.6 H13 L15.8 10.3 L13 13 H4.5z" fill="url(#pg)" stroke="#a8b8d0" stroke-width="0.8"/><path d="M13 7.3 L16 10.3 L13 13.3" fill="none" stroke="#2a3a5a" stroke-width="1.1"/></svg>
<div class="a" style="left:149px;top:0;width:1px;height:16px;background:#d6d6d6"></div>
<div class="t" style="left:24px;top:4px">HEX3[0]</div>
<div class="a" style="left:249px;top:0;width:1px;height:16px;background:#d6d6d6"></div>
<div class="t" style="left:152px;top:4px">Output</div>
<div class="a" style="left:349px;top:0;width:1px;height:16px;background:#d6d6d6"></div>
<div class="t" style="left:252px;top:4px">PIN_P3</div>
<div class="a" style="left:449px;top:0;width:1px;height:16px;background:#d6d6d6"></div>
<div class="t" style="left:352px;top:4px">2</div>
<div class="a" style="left:549px;top:0;width:1px;height:16px;background:#d6d6d6"></div>
<div class="t" style="left:452px;top:4px">B2_N3</div>
<div class="a" style="left:649px;top:0;width:1px;height:16px;background:#d6d6d6"></div>
<div class="t" style="left:552px;top:4px">PIN_P3</div>
<div class="a" style="left:749px;top:0;width:1px;height:16px;background:#d6d6d6"></div>
<div class="t" style="left:652px;top:4px">2.5 V (default)</div>
</div>
</div>
<div class="a" style="left:51px;top:968px;width:792px;height:8px;background:#f0f0f0;border-top:1px solid #e0e0e0"></div>
<div class="a" style="left:71px;top:970px;width:772px;height:8px;background:linear-gradient(#fdfdfd,#e6e6e6);border:1px solid #a8a8a8;border-radius:2px"></div>
<svg class="a" style="left:57px;top:970px" width="6" height="6"><path d="M4 0 L0 4 L4 8z" fill="#404040"/></svg>
<div class="a" style="left:451.5px;top:973px;width:1px;height:3px;background:#5a5a5a"></div><div class="a" style="left:454.5px;top:973px;width:1px;height:3px;background:#5a5a5a"></div><div class="a" style="left:457.5px;top:973px;width:1px;height:3px;background:#5a5a5a"></div>
</body></html>
